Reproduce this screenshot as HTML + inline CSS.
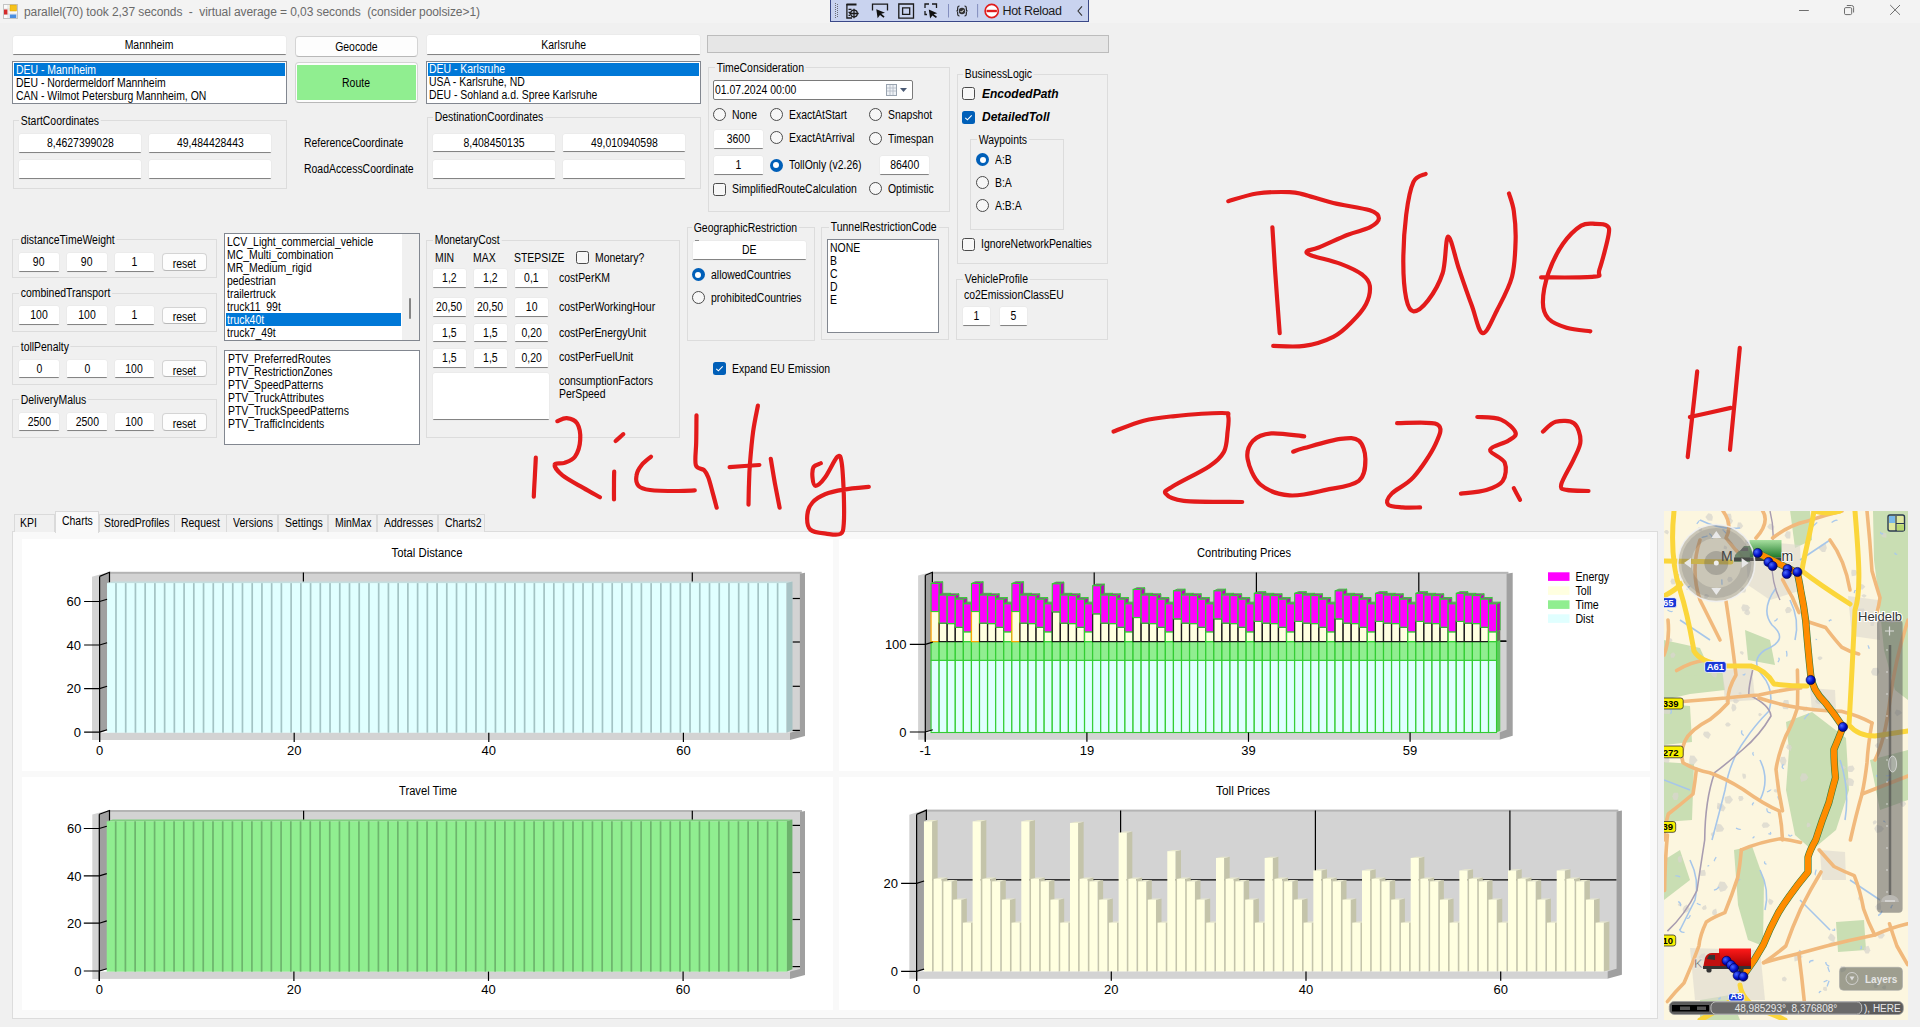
<!DOCTYPE html><html><head><meta charset="utf-8"><style>
*{box-sizing:border-box}
html,body{margin:0;padding:0}
body{width:1920px;height:1027px;overflow:hidden;position:relative;background:#f0f0f0;font-family:"Liberation Sans",sans-serif;font-size:11px;color:#000}
.t{position:absolute;white-space:pre;font-size:12px;line-height:13px;color:#000;transform:scaleX(0.87);transform-origin:0 50%}
.s{display:inline-block;transform:scaleX(0.87)}
.tb{position:absolute;background:#fff;border-bottom:1px solid #848484;border-radius:2px 2px 1px 1px;box-shadow:0 0 0 0.5px #e6e6e6;font-size:12px;white-space:pre;color:#000}
.btn{position:absolute;background:#fdfdfd;border:1px solid #d4d4d4;border-bottom-color:#b8b8b8;border-radius:4px;text-align:center;font-size:12px;color:#000;white-space:pre}
.grp{position:absolute;border:1px solid #dcdcdc}
.gt{background:#f0f0f0;padding:0 2px}
.rad{position:absolute;width:13px;height:13px;border-radius:50%;border:1px solid #4b4b4b;background:#f7f7f7}
.rad.on{border:none;background:#005fb8}
.rad.on:after{content:"";position:absolute;left:3.5px;top:3.5px;width:6px;height:6px;border-radius:50%;background:#fff}
.chk{position:absolute;width:13px;height:13px;border-radius:2.5px;border:1px solid #4b4b4b;background:#f7f7f7}
.chk.on{border:none;background:#005fb8}
.lb{position:absolute;background:#fff;border:1px solid #828790}
</style></head><body>
<div style="position:absolute;left:0px;top:0px;width:1920px;height:23px;background:#f3f3f3"></div>
<svg style="position:absolute;left:3px;top:4px" width="15" height="15" viewBox="0 0 15 15">
<rect x="0.5" y="0.5" width="14" height="14" fill="#fafafa" stroke="#c4c4c4"/>
<line x1="0.5" y1="5" x2="14.5" y2="5" stroke="#d0d0d0" stroke-width="0.6"/><line x1="0.5" y1="10" x2="14.5" y2="10" stroke="#d0d0d0" stroke-width="0.6"/>
<line x1="5" y1="0.5" x2="5" y2="14.5" stroke="#d0d0d0" stroke-width="0.6"/>
<rect x="7" y="1" width="6.5" height="6" fill="#f6c21a" stroke="#d8a000" stroke-width="0.5"/>
<rect x="1" y="5.5" width="3.4" height="5" fill="#d42a2a"/>
<rect x="6.8" y="10.5" width="6.5" height="3.5" fill="#4a8ee0"/>
</svg>
<div style="position:absolute;left:24px;top:5px;font-size:12px;line-height:15px;letter-spacing:-0.08px;color:#6a6a6a;white-space:pre">parallel(70) took 2,37 seconds  -  virtual average = 0,03 seconds  (consider poolsize&gt;1)</div>
<svg style="position:absolute;left:1790px;top:0" width="130" height="22" viewBox="0 0 130 22">
<line x1="9" y1="10.5" x2="18.8" y2="10.5" stroke="#6e6e6e" stroke-width="1"/>
<rect x="54.5" y="7.6" width="7.2" height="7" rx="1.3" fill="none" stroke="#6e6e6e"/>
<path d="M56.8 5.5 h4.8 a2 2 0 0 1 2 2 v5" fill="none" stroke="#6e6e6e"/>
<path d="M100.2 5 L110 14.8 M110 5 L100.2 14.8" stroke="#6e6e6e" stroke-width="1"/>
</svg>
<div style="position:absolute;left:830px;top:-1px;width:259px;height:22.5px;background:#c9d3ef;border:1.5px solid #3a4888"></div>
<svg style="position:absolute;left:825px;top:0" width="270" height="28" viewBox="0 0 270 28">
<g fill="#555"><rect x="10" y="3" width="0.9" height="0.9"/><rect x="12" y="4" width="0.9" height="0.9"/><rect x="10" y="5" width="0.9" height="0.9"/><rect x="12" y="6" width="0.9" height="0.9"/><rect x="10" y="7" width="0.9" height="0.9"/><rect x="12" y="8" width="0.9" height="0.9"/><rect x="10" y="9" width="0.9" height="0.9"/><rect x="12" y="10" width="0.9" height="0.9"/><rect x="10" y="11" width="0.9" height="0.9"/><rect x="12" y="12" width="0.9" height="0.9"/><rect x="10" y="13" width="0.9" height="0.9"/><rect x="12" y="14" width="0.9" height="0.9"/><rect x="10" y="15" width="0.9" height="0.9"/><rect x="12" y="16" width="0.9" height="0.9"/><rect x="10" y="17" width="0.9" height="0.9"/></g>
<g fill="none" stroke="#1a1a1a" stroke-width="1.3">
<rect x="21.5" y="3.5" width="10" height="2" fill="#1a1a1a" stroke="none"/>
<path d="M21.9 4 V18 H27"/><path d="M23.5 9.3 h3 M23.5 12.3 h2 M23.5 15.3 h1.5"/>
<circle cx="29" cy="13.5" r="3.3"/><path d="M29 8.8 v9.4 M24.3 13.5 h9.4"/>
<path d="M47.5 10.5 V4.2 H62.5 V10.5"/>
<path d="M73.8 4 H88.5 V18.1 H73.8 Z"/><path d="M77.6 7.8 H84.7 V14.3 H77.6 Z"/>
<path d="M100 8 V4 H104 M107 4 H111.5 V8 M100 11 V14.5 H102"/>
<path d="M134.5 6 q-1.8 0 -1.8 1.8 v1.5 q0 1.7 -1.2 1.7 q1.2 0 1.2 1.7 v1.5 q0 1.8 1.8 1.8 M139.5 6 q1.8 0 1.8 1.8 v1.5 q0 1.7 1.2 1.7 q-1.2 0 -1.2 1.7 v1.5 q0 1.8 -1.8 1.8" stroke-width="1.1"/>
</g>
<path d="M51.3 9.2 L52.6 18.3 L55 15 L58.5 17.8 L59.6 16.5 L56.3 13.8 L60 12.8 Z" fill="#111"/>
<path d="M103.8 9.6 L105.1 18.6 L107.4 15.4 L110.9 18.1 L112 16.8 L108.7 14.2 L112.3 13.2 Z" fill="#111"/>
<circle cx="137" cy="11" r="3.2" fill="#333"/><path d="M135.5 11 l1.2 1.2 2 -2.4" fill="none" stroke="#fff" stroke-width="0.9"/>
<line x1="123.5" y1="4" x2="123.5" y2="17.5" stroke="#7a86b8" stroke-width="0.9"/>
<line x1="152.6" y1="4" x2="152.6" y2="17.5" stroke="#7a86b8" stroke-width="0.9"/>
<circle cx="166.7" cy="11" r="6.6" fill="#fff" stroke="#e01c1c" stroke-width="1.6"/><rect x="161.5" y="9.8" width="10.4" height="2.4" fill="#e01c1c"/>
<path d="M257 6.3 l-4 4.7 4 4.7" fill="none" stroke="#333" stroke-width="1.1"/>
</svg>
<div style="position:absolute;left:1002.5px;top:4px;font-size:12.5px;line-height:15px;letter-spacing:-0.35px;color:#1a1a1a;white-space:pre">Hot Reload</div>
<div class="tb" style="left:13px;top:36px;width:273px;height:19px;line-height:19px;text-align:center"><span class="s">Mannheim</span></div>
<div class="lb" style="left:12px;top:61px;width:275px;height:43px"></div>
<div style="position:absolute;left:14px;top:63.0px;width:271px;height:13px;background:#0078d7"></div>
<div class="t" style="left:16px;top:63.7px;color:#fff">DEU - Mannheim</div>
<div class="t" style="left:16px;top:76.7px;">DEU - Nordermeldorf Mannheim</div>
<div class="t" style="left:16px;top:89.7px;">CAN - Wilmot Petersburg Mannheim, ON</div>
<div class="btn" style="left:295px;top:36px;width:123px;height:21px;line-height:21px;"><span class="s">Geocode</span></div>
<div class="btn" style="left:295px;top:62px;width:123px;height:41px"></div>
<div style="position:absolute;left:297px;top:64.5px;width:119px;height:35.5px;background:#90ee90"></div>
<div class="t" style="left:295px;top:76.5px;width:123px;text-align:center;transform:none;"><span class="s">Route</span></div>
<div class="tb" style="left:427px;top:35px;width:273px;height:20px;line-height:20px;text-align:center"><span class="s">Karlsruhe</span></div>
<div class="lb" style="left:426px;top:61px;width:275px;height:43px"></div>
<div style="position:absolute;left:428px;top:62.5px;width:271px;height:13px;background:#0078d7"></div>
<div class="t" style="left:429px;top:63.2px;color:#fff">DEU - Karlsruhe</div>
<div class="t" style="left:429px;top:76.2px;">USA - Karlsruhe, ND</div>
<div class="t" style="left:429px;top:89.2px;">DEU - Sohland a.d. Spree Karlsruhe</div>
<div style="position:absolute;left:707px;top:35px;width:402px;height:17.5px;background:#e6e6e6;border:1px solid #bcbcbc"></div>
<div class="grp" style="left:12.5px;top:120.3px;width:274.2px;height:69.10000000000001px"></div>
<div class="t gt" style="left:19px;top:114.89999999999999px">StartCoordinates</div>
<div class="tb" style="left:19px;top:134px;width:122px;height:18.5px;line-height:18.5px;text-align:center"><span class="s">8,4627399028</span></div>
<div class="tb" style="left:149px;top:134px;width:122px;height:18.5px;line-height:18.5px;text-align:center"><span class="s">49,484428443</span></div>
<div class="tb" style="left:19px;top:160px;width:122px;height:18.5px;line-height:18.5px;text-align:center"><span class="s"></span></div>
<div class="tb" style="left:149px;top:160px;width:122px;height:18.5px;line-height:18.5px;text-align:center"><span class="s"></span></div>
<div class="t" style="left:304px;top:137.3px;">ReferenceCoordinate</div>
<div class="t" style="left:304px;top:163.3px;">RoadAccessCoordinate</div>
<div class="grp" style="left:426.6px;top:116.7px;width:274.1px;height:72.10000000000001px"></div>
<div class="t gt" style="left:433px;top:111.3px">DestinationCoordinates</div>
<div class="tb" style="left:433px;top:134px;width:122px;height:18px;line-height:18px;text-align:center"><span class="s">8,408450135</span></div>
<div class="tb" style="left:563px;top:134px;width:122px;height:18px;line-height:18px;text-align:center"><span class="s">49,010940598</span></div>
<div class="tb" style="left:433px;top:160px;width:122px;height:19px;line-height:19px;text-align:center"><span class="s"></span></div>
<div class="tb" style="left:563px;top:160px;width:122px;height:19px;line-height:19px;text-align:center"><span class="s"></span></div>
<div class="grp" style="left:707.5px;top:67.4px;width:242.0px;height:144.6px"></div>
<div class="t gt" style="left:714.7px;top:62.00000000000001px">TimeConsideration</div>
<div style="position:absolute;left:713px;top:80px;width:200px;height:20px;background:#fff;border:1px solid #7a7a7a;border-radius:2px"></div>
<div class="t" style="left:715px;top:84.3px;">01.07.2024 00:00</div>
<svg style="position:absolute;left:884px;top:82px" width="26" height="16" viewBox="0 0 26 16">
<rect x="2.5" y="2.5" width="10" height="11" fill="#eef2f6" stroke="#9aa4b0"/>
<g stroke="#b0b8c4" stroke-width="0.8"><line x1="3" y1="6" x2="12" y2="6"/><line x1="3" y1="9" x2="12" y2="9"/><line x1="6" y1="3" x2="6" y2="13"/><line x1="9" y1="3" x2="9" y2="13"/></g>
<path d="M16 6 h7 l-3.5 4 z" fill="#4a5a74"/></svg>
<div class="rad" style="left:713.0px;top:108.2px"></div>
<div class="t" style="left:732px;top:109.0px;">None</div>
<div class="rad" style="left:769.8px;top:108.2px"></div>
<div class="t" style="left:789px;top:109.0px;">ExactAtStart</div>
<div class="rad" style="left:868.9px;top:108.2px"></div>
<div class="t" style="left:888px;top:109.0px;">Snapshot</div>
<div class="tb" style="left:714px;top:130px;width:49px;height:19px;line-height:19px;text-align:center"><span class="s">3600</span></div>
<div class="rad" style="left:769.8px;top:131.4px"></div>
<div class="t" style="left:789px;top:132.2px;">ExactAtArrival</div>
<div class="rad" style="left:868.9px;top:132.1px"></div>
<div class="t" style="left:888px;top:132.9px;">Timespan</div>
<div class="tb" style="left:714px;top:156px;width:49px;height:19px;line-height:19px;text-align:center"><span class="s">1</span></div>
<div class="rad on" style="left:769.8px;top:158.5px"></div>
<div class="t" style="left:789px;top:159.3px;">TollOnly (v2.26)</div>
<div class="tb" style="left:880px;top:156px;width:49px;height:19px;line-height:19px;text-align:center"><span class="s">86400</span></div>
<div class="chk" style="left:713px;top:183px"></div>
<div class="t" style="left:732px;top:183.3px;">SimplifiedRouteCalculation</div>
<div class="rad" style="left:868.9px;top:182.3px"></div>
<div class="t" style="left:888px;top:183.1px;">Optimistic</div>
<div class="grp" style="left:956.6px;top:73.5px;width:151.89999999999998px;height:190.5px"></div>
<div class="t gt" style="left:963px;top:68.1px">BusinessLogic</div>
<div class="chk" style="left:962px;top:87px"></div>
<div class="t" style="left:982px;top:87.7px;font-weight:bold;font-style:italic;transform:none">EncodedPath</div>
<div class="chk on" style="left:962px;top:110.5px"><svg width="13" height="13" viewBox="0 0 13 13" style="position:absolute;left:0;top:0"><path d="M3.3 6.8 L5.4 8.8 L9.7 4.3" fill="none" stroke="#fff" stroke-width="1.1"/></svg></div>
<div class="t" style="left:982px;top:110.8px;font-weight:bold;font-style:italic;transform:none">DetailedToll</div>
<div class="grp" style="left:970px;top:139px;width:94px;height:91px"></div>
<div class="t gt" style="left:977px;top:133.6px">Waypoints</div>
<div class="rad on" style="left:976.0px;top:153.1px"></div>
<div class="t" style="left:995px;top:153.9px;">A:B</div>
<div class="rad" style="left:976.0px;top:176.1px"></div>
<div class="t" style="left:995px;top:176.9px;">B:A</div>
<div class="rad" style="left:976.0px;top:198.9px"></div>
<div class="t" style="left:995px;top:199.7px;">A:B:A</div>
<div class="chk" style="left:962px;top:237.5px"></div>
<div class="t" style="left:981px;top:237.9px;">IgnoreNetworkPenalties</div>
<div class="grp" style="left:956px;top:278.5px;width:152px;height:61.5px"></div>
<div class="t gt" style="left:963px;top:273.1px">VehicleProfile</div>
<div class="t" style="left:964px;top:288.9px;">co2EmissionClassEU</div>
<div class="tb" style="left:963px;top:306.6px;width:27px;height:19.0px;line-height:19.0px;text-align:center"><span class="s">1</span></div>
<div class="tb" style="left:1000px;top:306.6px;width:27px;height:19.0px;line-height:19.0px;text-align:center"><span class="s">5</span></div>
<div class="grp" style="left:12.3px;top:239.4px;width:205.1px;height:38.900000000000006px"></div>
<div class="t gt" style="left:19px;top:234.0px">distanceTimeWeight</div>
<div class="tb" style="left:19px;top:253.0px;width:40px;height:18.5px;line-height:18.5px;text-align:center"><span class="s">90</span></div>
<div class="tb" style="left:67px;top:253.0px;width:40px;height:18.5px;line-height:18.5px;text-align:center"><span class="s">90</span></div>
<div class="tb" style="left:115px;top:253.0px;width:39px;height:18.5px;line-height:18.5px;text-align:center"><span class="s">1</span></div>
<div class="btn" style="left:162px;top:253.4px;width:45px;height:17.400000000000006px;line-height:17.400000000000006px;padding-top:1.5px"><span class="s">reset</span></div>
<div class="grp" style="left:12.3px;top:292.7px;width:205.1px;height:38.900000000000034px"></div>
<div class="t gt" style="left:19px;top:287.3px">combinedTransport</div>
<div class="tb" style="left:19px;top:306.3px;width:40px;height:18.5px;line-height:18.5px;text-align:center"><span class="s">100</span></div>
<div class="tb" style="left:67px;top:306.3px;width:40px;height:18.5px;line-height:18.5px;text-align:center"><span class="s">100</span></div>
<div class="tb" style="left:115px;top:306.3px;width:39px;height:18.5px;line-height:18.5px;text-align:center"><span class="s">1</span></div>
<div class="btn" style="left:162px;top:306.7px;width:45px;height:17.400000000000034px;line-height:17.400000000000034px;padding-top:1.5px"><span class="s">reset</span></div>
<div class="grp" style="left:12.3px;top:346.0px;width:205.1px;height:38.89999999999998px"></div>
<div class="t gt" style="left:19px;top:340.6px">tollPenalty</div>
<div class="tb" style="left:19px;top:359.6px;width:40px;height:18.5px;line-height:18.5px;text-align:center"><span class="s">0</span></div>
<div class="tb" style="left:67px;top:359.6px;width:40px;height:18.5px;line-height:18.5px;text-align:center"><span class="s">0</span></div>
<div class="tb" style="left:115px;top:359.6px;width:39px;height:18.5px;line-height:18.5px;text-align:center"><span class="s">100</span></div>
<div class="btn" style="left:162px;top:360.0px;width:45px;height:17.399999999999977px;line-height:17.399999999999977px;padding-top:1.5px"><span class="s">reset</span></div>
<div class="grp" style="left:12.3px;top:399.29999999999995px;width:205.1px;height:38.900000000000034px"></div>
<div class="t gt" style="left:19px;top:393.9px">DeliveryMalus</div>
<div class="tb" style="left:19px;top:412.9px;width:40px;height:18.5px;line-height:18.5px;text-align:center"><span class="s">2500</span></div>
<div class="tb" style="left:67px;top:412.9px;width:40px;height:18.5px;line-height:18.5px;text-align:center"><span class="s">2500</span></div>
<div class="tb" style="left:115px;top:412.9px;width:39px;height:18.5px;line-height:18.5px;text-align:center"><span class="s">100</span></div>
<div class="btn" style="left:162px;top:413.29999999999995px;width:45px;height:17.400000000000034px;line-height:17.400000000000034px;padding-top:1.5px"><span class="s">reset</span></div>
<div class="lb" style="left:224px;top:233px;width:196px;height:108px"></div>
<div class="t" style="left:227px;top:236.0px;">LCV_Light_commercial_vehicle</div>
<div class="t" style="left:227px;top:249.0px;">MC_Multi_combination</div>
<div class="t" style="left:227px;top:262.0px;">MR_Medium_rigid</div>
<div class="t" style="left:227px;top:275.0px;">pedestrian</div>
<div class="t" style="left:227px;top:288.0px;">trailertruck</div>
<div class="t" style="left:227px;top:301.0px;">truck11_99t</div>
<div style="position:absolute;left:226px;top:313.3px;width:175px;height:13px;background:#0078d7"></div>
<div class="t" style="left:227px;top:314.0px;color:#fff">truck40t</div>
<div class="t" style="left:227px;top:327.0px;">truck7_49t</div>
<div style="position:absolute;left:402px;top:234px;width:17px;height:106px;background:#f0f0f0"></div>
<div style="position:absolute;left:408.5px;top:298px;width:2.5px;height:21px;background:#858585;border-radius:1px"></div>
<div class="lb" style="left:224px;top:350px;width:196px;height:95px"></div>
<div class="t" style="left:228px;top:352.7px;">PTV_PreferredRoutes</div>
<div class="t" style="left:228px;top:365.7px;">PTV_RestrictionZones</div>
<div class="t" style="left:228px;top:378.7px;">PTV_SpeedPatterns</div>
<div class="t" style="left:228px;top:391.7px;">PTV_TruckAttributes</div>
<div class="t" style="left:228px;top:404.7px;">PTV_TruckSpeedPatterns</div>
<div class="t" style="left:228px;top:417.7px;">PTV_TrafficIncidents</div>
<div class="grp" style="left:426.4px;top:239.6px;width:253.30000000000007px;height:198.00000000000003px"></div>
<div class="t gt" style="left:433px;top:234.2px">MonetaryCost</div>
<div class="t" style="left:435px;top:252.1px;">MIN</div>
<div class="t" style="left:473px;top:252.1px;">MAX</div>
<div class="t" style="left:514px;top:252.1px;">STEPSIZE</div>
<div class="chk" style="left:576px;top:251.4px"></div>
<div class="t" style="left:595px;top:252.1px;">Monetary?</div>
<div class="tb" style="left:433px;top:269px;width:33px;height:18.600000000000023px;line-height:18.600000000000023px;text-align:center"><span class="s">1,2</span></div>
<div class="tb" style="left:474px;top:269px;width:33px;height:18.600000000000023px;line-height:18.600000000000023px;text-align:center"><span class="s">1,2</span></div>
<div class="tb" style="left:515px;top:269px;width:33px;height:18.600000000000023px;line-height:18.600000000000023px;text-align:center"><span class="s">0,1</span></div>
<div class="t" style="left:558.5px;top:272.3px;">costPerKM</div>
<div class="tb" style="left:433px;top:298px;width:33px;height:18.69999999999999px;line-height:18.69999999999999px;text-align:center"><span class="s">20,50</span></div>
<div class="tb" style="left:474px;top:298px;width:33px;height:18.69999999999999px;line-height:18.69999999999999px;text-align:center"><span class="s">20,50</span></div>
<div class="tb" style="left:515px;top:298px;width:33px;height:18.69999999999999px;line-height:18.69999999999999px;text-align:center"><span class="s">10</span></div>
<div class="t" style="left:558.5px;top:301.3px;">costPerWorkingHour</div>
<div class="tb" style="left:433px;top:324px;width:33px;height:18.399999999999977px;line-height:18.399999999999977px;text-align:center"><span class="s">1,5</span></div>
<div class="tb" style="left:474px;top:324px;width:33px;height:18.399999999999977px;line-height:18.399999999999977px;text-align:center"><span class="s">1,5</span></div>
<div class="tb" style="left:515px;top:324px;width:33px;height:18.399999999999977px;line-height:18.399999999999977px;text-align:center"><span class="s">0,20</span></div>
<div class="t" style="left:558.5px;top:327.3px;">costPerEnergyUnit</div>
<div class="tb" style="left:433px;top:349px;width:33px;height:18.5px;line-height:18.5px;text-align:center"><span class="s">1,5</span></div>
<div class="tb" style="left:474px;top:349px;width:33px;height:18.5px;line-height:18.5px;text-align:center"><span class="s">1,5</span></div>
<div class="tb" style="left:515px;top:349px;width:33px;height:18.5px;line-height:18.5px;text-align:center"><span class="s">0,20</span></div>
<div class="t" style="left:558.5px;top:351.3px;">costPerFuelUnit</div>
<div class="t" style="left:558.5px;top:375.3px;">consumptionFactors</div>
<div class="t" style="left:558.5px;top:388.3px;">PerSpeed</div>
<div class="tb" style="left:433px;top:373px;width:116px;height:47px;line-height:47px;text-align:center"><span class="s"></span></div>
<div class="grp" style="left:686.5px;top:227.2px;width:128.10000000000002px;height:113.80000000000001px"></div>
<div class="t gt" style="left:692.4px;top:221.79999999999998px">GeographicRestriction</div>
<div style="position:absolute;left:695.4px;top:239.6px;width:4px;height:1.3px;background:#333"></div>
<div class="tb" style="left:693px;top:240.7px;width:113px;height:18.900000000000034px;line-height:18.900000000000034px;text-align:center"><span class="s">DE</span></div>
<div class="rad on" style="left:691.9px;top:268.0px"></div>
<div class="t" style="left:710.7px;top:268.8px;">allowedCountries</div>
<div class="rad" style="left:691.9px;top:291.1px"></div>
<div class="t" style="left:710.7px;top:291.9px;">prohibitedCountries</div>
<div class="grp" style="left:821.4px;top:226.6px;width:127.89999999999998px;height:113.6px"></div>
<div class="t gt" style="left:828.7px;top:221.2px">TunnelRestrictionCode</div>
<div class="lb" style="left:827.4px;top:239.4px;width:111.20000000000005px;height:94.1px"></div>
<div class="t" style="left:830px;top:241.89999999999998px;">NONE</div>
<div class="t" style="left:830px;top:254.89999999999998px;">B</div>
<div class="t" style="left:830px;top:267.9px;">C</div>
<div class="t" style="left:830px;top:280.9px;">D</div>
<div class="t" style="left:830px;top:293.9px;">E</div>
<div class="chk on" style="left:713px;top:362px"><svg width="13" height="13" viewBox="0 0 13 13" style="position:absolute;left:0;top:0"><path d="M3.3 6.8 L5.4 8.8 L9.7 4.3" fill="none" stroke="#fff" stroke-width="1.1"/></svg></div>
<div class="t" style="left:732px;top:362.8px;">Expand EU Emission</div>
<div style="position:absolute;left:12px;top:531px;width:1646px;height:488px;background:#f9f9f9;border:1px solid #dcdcdc"></div>
<div style="position:absolute;left:14.1px;top:513.5px;width:40.6px;height:18px;background:#f0f0f0;border:1px solid #dadada;border-bottom:none"></div>
<div class="t" style="left:20.3px;top:516.5px;">KPI</div>
<div style="position:absolute;left:99.0px;top:513.5px;width:75.5px;height:18px;background:#f0f0f0;border:1px solid #dadada;border-bottom:none"></div>
<div class="t" style="left:104px;top:516.5px;">StoredProfiles</div>
<div style="position:absolute;left:174.0px;top:513.5px;width:52.5px;height:18px;background:#f0f0f0;border:1px solid #dadada;border-bottom:none"></div>
<div class="t" style="left:181px;top:516.5px;">Request</div>
<div style="position:absolute;left:226.1px;top:513.5px;width:52.400000000000006px;height:18px;background:#f0f0f0;border:1px solid #dadada;border-bottom:none"></div>
<div class="t" style="left:232.5px;top:516.5px;">Versions</div>
<div style="position:absolute;left:278.1px;top:513.5px;width:50.39999999999998px;height:18px;background:#f0f0f0;border:1px solid #dadada;border-bottom:none"></div>
<div class="t" style="left:284.5px;top:516.5px;">Settings</div>
<div style="position:absolute;left:328.1px;top:513.5px;width:49.39999999999998px;height:18px;background:#f0f0f0;border:1px solid #dadada;border-bottom:none"></div>
<div class="t" style="left:335px;top:516.5px;">MinMax</div>
<div style="position:absolute;left:377.1px;top:513.5px;width:61.39999999999998px;height:18px;background:#f0f0f0;border:1px solid #dadada;border-bottom:none"></div>
<div class="t" style="left:384px;top:516.5px;">Addresses</div>
<div style="position:absolute;left:438.0px;top:513.5px;width:46.89999999999998px;height:18px;background:#f0f0f0;border:1px solid #dadada;border-bottom:none"></div>
<div class="t" style="left:444.5px;top:516.5px;">Charts2</div>
<div style="position:absolute;left:54.7px;top:511px;width:44.3px;height:21.5px;background:#f9f9f9;border:1px solid #dadada;border-bottom:none"></div>
<div class="t" style="left:61.7px;top:514.5px;">Charts</div>
<div style="position:absolute;left:22px;top:538.5px;width:810.5px;height:232.5px;background:#fff"></div>
<div style="position:absolute;left:839px;top:538.5px;width:811px;height:232.5px;background:#fff"></div>
<div style="position:absolute;left:22px;top:777px;width:810.5px;height:233px;background:#fff"></div>
<div style="position:absolute;left:839px;top:777px;width:811px;height:233px;background:#fff"></div>
<svg style="position:absolute;left:0;top:0" width="1920" height="1027" viewBox="0 0 1920 1027"><style>.cl{font-family:"Liberation Sans",sans-serif;font-size:13px;fill:#000}.ct{font-family:"Liberation Sans",sans-serif;font-size:12px;fill:#000}</style>
<rect x="109.5" y="572.3" width="690.2" height="160.4000000000001" fill="#d3d3d3"/>
<rect x="107.5" y="571.8" width="694.2" height="2" fill="#b4b4b4"/>
<polygon points="799.7,573.8 805,572.8 805,736 790,740 790,732.7 799.7,730.0" fill="#a0a0a0"/>
<polygon points="92,576.6999999999999 107.5,572.3 109.5,572.3 99.6,576.4 99.6,740 92,740" fill="#d3d3d3"/>
<polygon points="99.6,576.4 109.5,572.3 109.5,729.7 99.6,732.7" fill="#a0a0a0"/>
<rect x="99.6" y="732.7" width="690.4" height="7.2999999999999545" fill="#d3d3d3"/>
<line x1="303.4" y1="572.5" x2="303.4" y2="583" stroke="#000" stroke-width="1.2"/>
<line x1="692.3" y1="572.5" x2="692.3" y2="583" stroke="#000" stroke-width="1.2"/>
<line x1="792.5" y1="598.5" x2="799.9" y2="598.5" stroke="#000" stroke-width="1.2"/>
<line x1="792.5" y1="642" x2="799.9" y2="642" stroke="#000" stroke-width="1.2"/>
<line x1="792.5" y1="686.3" x2="799.9" y2="686.3" stroke="#000" stroke-width="1.2"/>
<line x1="792.5" y1="730.4" x2="799.9" y2="730.4" stroke="#000" stroke-width="1.2"/>
<polygon points="107.03,583.1 113.03,581.6 792.5,581.6 786.5,583.1" fill="#c4dedf"/>
<rect x="107.03" y="583.1" width="679.47" height="149.60000000000002" fill="#e0ffff"/>
<polygon points="786.5,583.1 792.5,581.6 792.5,730.3 786.5,732.7" fill="#a7c2c4"/>
<rect x="115.13" y="583.1" width="1.7" height="149.60000000000002" fill="#a3c3c4"/>
<rect x="124.86" y="583.1" width="1.7" height="149.60000000000002" fill="#a3c3c4"/>
<rect x="134.59" y="583.1" width="1.7" height="149.60000000000002" fill="#a3c3c4"/>
<rect x="144.32" y="583.1" width="1.7" height="149.60000000000002" fill="#a3c3c4"/>
<rect x="154.05" y="583.1" width="1.7" height="149.60000000000002" fill="#a3c3c4"/>
<rect x="163.78" y="583.1" width="1.7" height="149.60000000000002" fill="#a3c3c4"/>
<rect x="173.51" y="583.1" width="1.7" height="149.60000000000002" fill="#a3c3c4"/>
<rect x="183.24" y="583.1" width="1.7" height="149.60000000000002" fill="#a3c3c4"/>
<rect x="192.97" y="583.1" width="1.7" height="149.60000000000002" fill="#a3c3c4"/>
<rect x="202.70" y="583.1" width="1.7" height="149.60000000000002" fill="#a3c3c4"/>
<rect x="212.43" y="583.1" width="1.7" height="149.60000000000002" fill="#a3c3c4"/>
<rect x="222.16" y="583.1" width="1.7" height="149.60000000000002" fill="#a3c3c4"/>
<rect x="231.89" y="583.1" width="1.7" height="149.60000000000002" fill="#a3c3c4"/>
<rect x="241.62" y="583.1" width="1.7" height="149.60000000000002" fill="#a3c3c4"/>
<rect x="251.35" y="583.1" width="1.7" height="149.60000000000002" fill="#a3c3c4"/>
<rect x="261.08" y="583.1" width="1.7" height="149.60000000000002" fill="#a3c3c4"/>
<rect x="270.81" y="583.1" width="1.7" height="149.60000000000002" fill="#a3c3c4"/>
<rect x="280.54" y="583.1" width="1.7" height="149.60000000000002" fill="#a3c3c4"/>
<rect x="290.27" y="583.1" width="1.7" height="149.60000000000002" fill="#a3c3c4"/>
<rect x="300.00" y="583.1" width="1.7" height="149.60000000000002" fill="#a3c3c4"/>
<rect x="309.73" y="583.1" width="1.7" height="149.60000000000002" fill="#a3c3c4"/>
<rect x="319.46" y="583.1" width="1.7" height="149.60000000000002" fill="#a3c3c4"/>
<rect x="329.19" y="583.1" width="1.7" height="149.60000000000002" fill="#a3c3c4"/>
<rect x="338.92" y="583.1" width="1.7" height="149.60000000000002" fill="#a3c3c4"/>
<rect x="348.65" y="583.1" width="1.7" height="149.60000000000002" fill="#a3c3c4"/>
<rect x="358.38" y="583.1" width="1.7" height="149.60000000000002" fill="#a3c3c4"/>
<rect x="368.11" y="583.1" width="1.7" height="149.60000000000002" fill="#a3c3c4"/>
<rect x="377.84" y="583.1" width="1.7" height="149.60000000000002" fill="#a3c3c4"/>
<rect x="387.57" y="583.1" width="1.7" height="149.60000000000002" fill="#a3c3c4"/>
<rect x="397.30" y="583.1" width="1.7" height="149.60000000000002" fill="#a3c3c4"/>
<rect x="407.03" y="583.1" width="1.7" height="149.60000000000002" fill="#a3c3c4"/>
<rect x="416.76" y="583.1" width="1.7" height="149.60000000000002" fill="#a3c3c4"/>
<rect x="426.49" y="583.1" width="1.7" height="149.60000000000002" fill="#a3c3c4"/>
<rect x="436.22" y="583.1" width="1.7" height="149.60000000000002" fill="#a3c3c4"/>
<rect x="445.95" y="583.1" width="1.7" height="149.60000000000002" fill="#a3c3c4"/>
<rect x="455.68" y="583.1" width="1.7" height="149.60000000000002" fill="#a3c3c4"/>
<rect x="465.41" y="583.1" width="1.7" height="149.60000000000002" fill="#a3c3c4"/>
<rect x="475.14" y="583.1" width="1.7" height="149.60000000000002" fill="#a3c3c4"/>
<rect x="484.87" y="583.1" width="1.7" height="149.60000000000002" fill="#a3c3c4"/>
<rect x="494.60" y="583.1" width="1.7" height="149.60000000000002" fill="#a3c3c4"/>
<rect x="504.33" y="583.1" width="1.7" height="149.60000000000002" fill="#a3c3c4"/>
<rect x="514.06" y="583.1" width="1.7" height="149.60000000000002" fill="#a3c3c4"/>
<rect x="523.79" y="583.1" width="1.7" height="149.60000000000002" fill="#a3c3c4"/>
<rect x="533.52" y="583.1" width="1.7" height="149.60000000000002" fill="#a3c3c4"/>
<rect x="543.25" y="583.1" width="1.7" height="149.60000000000002" fill="#a3c3c4"/>
<rect x="552.98" y="583.1" width="1.7" height="149.60000000000002" fill="#a3c3c4"/>
<rect x="562.71" y="583.1" width="1.7" height="149.60000000000002" fill="#a3c3c4"/>
<rect x="572.44" y="583.1" width="1.7" height="149.60000000000002" fill="#a3c3c4"/>
<rect x="582.17" y="583.1" width="1.7" height="149.60000000000002" fill="#a3c3c4"/>
<rect x="591.90" y="583.1" width="1.7" height="149.60000000000002" fill="#a3c3c4"/>
<rect x="601.63" y="583.1" width="1.7" height="149.60000000000002" fill="#a3c3c4"/>
<rect x="611.36" y="583.1" width="1.7" height="149.60000000000002" fill="#a3c3c4"/>
<rect x="621.09" y="583.1" width="1.7" height="149.60000000000002" fill="#a3c3c4"/>
<rect x="630.82" y="583.1" width="1.7" height="149.60000000000002" fill="#a3c3c4"/>
<rect x="640.55" y="583.1" width="1.7" height="149.60000000000002" fill="#a3c3c4"/>
<rect x="650.28" y="583.1" width="1.7" height="149.60000000000002" fill="#a3c3c4"/>
<rect x="660.01" y="583.1" width="1.7" height="149.60000000000002" fill="#a3c3c4"/>
<rect x="669.74" y="583.1" width="1.7" height="149.60000000000002" fill="#a3c3c4"/>
<rect x="679.47" y="583.1" width="1.7" height="149.60000000000002" fill="#a3c3c4"/>
<rect x="689.20" y="583.1" width="1.7" height="149.60000000000002" fill="#a3c3c4"/>
<rect x="698.93" y="583.1" width="1.7" height="149.60000000000002" fill="#a3c3c4"/>
<rect x="708.66" y="583.1" width="1.7" height="149.60000000000002" fill="#a3c3c4"/>
<rect x="718.39" y="583.1" width="1.7" height="149.60000000000002" fill="#a3c3c4"/>
<rect x="728.12" y="583.1" width="1.7" height="149.60000000000002" fill="#a3c3c4"/>
<rect x="737.85" y="583.1" width="1.7" height="149.60000000000002" fill="#a3c3c4"/>
<rect x="747.58" y="583.1" width="1.7" height="149.60000000000002" fill="#a3c3c4"/>
<rect x="757.31" y="583.1" width="1.7" height="149.60000000000002" fill="#a3c3c4"/>
<rect x="767.04" y="583.1" width="1.7" height="149.60000000000002" fill="#a3c3c4"/>
<rect x="776.77" y="583.1" width="1.7" height="149.60000000000002" fill="#a3c3c4"/>
<path d="M99.6 576.4 V742 M99.6 576.4 L109.5 572.3 V582.3" fill="none" stroke="#000" stroke-width="1.2"/>
<path d="M84.1 732.1 H99.6 L107.1 729.8000000000001" fill="none" stroke="#000" stroke-width="1.2"/>
<text x="81" y="736.7" text-anchor="end" class="cl">0</text>
<path d="M84.1 688.6 H99.6 L107.1 686.3000000000001" fill="none" stroke="#000" stroke-width="1.2"/>
<text x="81" y="693.2" text-anchor="end" class="cl">20</text>
<path d="M84.1 645.0 H99.6 L107.1 642.7" fill="none" stroke="#000" stroke-width="1.2"/>
<text x="81" y="649.6" text-anchor="end" class="cl">40</text>
<path d="M84.1 601.5 H99.6 L107.1 599.2" fill="none" stroke="#000" stroke-width="1.2"/>
<text x="81" y="606.1" text-anchor="end" class="cl">60</text>
<line x1="99.6" y1="732.7" x2="99.6" y2="742" stroke="#000" stroke-width="1.2"/>
<text x="99.6" y="754.9" text-anchor="middle" class="cl">0</text>
<line x1="294.20000000000005" y1="732.7" x2="294.20000000000005" y2="742" stroke="#000" stroke-width="1.2"/>
<text x="294.20000000000005" y="754.9" text-anchor="middle" class="cl">20</text>
<line x1="488.80000000000007" y1="732.7" x2="488.80000000000007" y2="742" stroke="#000" stroke-width="1.2"/>
<text x="488.80000000000007" y="754.9" text-anchor="middle" class="cl">40</text>
<line x1="683.4000000000001" y1="732.7" x2="683.4000000000001" y2="742" stroke="#000" stroke-width="1.2"/>
<text x="683.4000000000001" y="754.9" text-anchor="middle" class="cl">60</text>
<text x="427" y="557" text-anchor="middle" class="ct" textLength="71" lengthAdjust="spacingAndGlyphs">Total Distance</text>
<rect x="109.5" y="810.5" width="690.5" height="161.10000000000002" fill="#d3d3d3"/>
<rect x="107.5" y="810.0" width="694.5" height="2" fill="#b4b4b4"/>
<polygon points="800,812.0 805,811.0 805,974.9 790,978.9 790,971.6 800,968.9" fill="#a0a0a0"/>
<polygon points="92.3,814.5999999999999 107.5,810.5 109.5,810.5 99.3,814.3 99.3,978.9 92.3,978.9" fill="#d3d3d3"/>
<polygon points="99.3,814.3 109.5,810.5 109.5,968.6 99.3,971.6" fill="#a0a0a0"/>
<rect x="99.3" y="971.6" width="690.7" height="7.2999999999999545" fill="#d3d3d3"/>
<line x1="303.6" y1="810.7" x2="303.6" y2="821" stroke="#000" stroke-width="1.2"/>
<line x1="692.3" y1="810.7" x2="692.3" y2="821" stroke="#000" stroke-width="1.2"/>
<line x1="792.4" y1="825.4" x2="800" y2="825.4" stroke="#000" stroke-width="1.2"/>
<line x1="792.4" y1="872.5" x2="800" y2="872.5" stroke="#000" stroke-width="1.2"/>
<line x1="792.4" y1="919.5" x2="800" y2="919.5" stroke="#000" stroke-width="1.2"/>
<line x1="792.4" y1="966.6" x2="800" y2="966.6" stroke="#000" stroke-width="1.2"/>
<polygon points="106.73,821.3 112.73,819.5999999999999 792.4,819.5999999999999 786.9,821.3" fill="#7fcf7f"/>
<rect x="106.73" y="821.3" width="680.17" height="150.30000000000007" fill="#90ee90"/>
<polygon points="786.9,821.3 792.4,819.5999999999999 792.4,969.2 786.9,971.6" fill="#6cb26c"/>
<rect x="114.83" y="821.3" width="1.7" height="150.30000000000007" fill="#6db56d"/>
<rect x="124.56" y="821.3" width="1.7" height="150.30000000000007" fill="#6db56d"/>
<rect x="134.29" y="821.3" width="1.7" height="150.30000000000007" fill="#6db56d"/>
<rect x="144.02" y="821.3" width="1.7" height="150.30000000000007" fill="#6db56d"/>
<rect x="153.75" y="821.3" width="1.7" height="150.30000000000007" fill="#6db56d"/>
<rect x="163.48" y="821.3" width="1.7" height="150.30000000000007" fill="#6db56d"/>
<rect x="173.21" y="821.3" width="1.7" height="150.30000000000007" fill="#6db56d"/>
<rect x="182.94" y="821.3" width="1.7" height="150.30000000000007" fill="#6db56d"/>
<rect x="192.67" y="821.3" width="1.7" height="150.30000000000007" fill="#6db56d"/>
<rect x="202.40" y="821.3" width="1.7" height="150.30000000000007" fill="#6db56d"/>
<rect x="212.13" y="821.3" width="1.7" height="150.30000000000007" fill="#6db56d"/>
<rect x="221.86" y="821.3" width="1.7" height="150.30000000000007" fill="#6db56d"/>
<rect x="231.59" y="821.3" width="1.7" height="150.30000000000007" fill="#6db56d"/>
<rect x="241.32" y="821.3" width="1.7" height="150.30000000000007" fill="#6db56d"/>
<rect x="251.05" y="821.3" width="1.7" height="150.30000000000007" fill="#6db56d"/>
<rect x="260.78" y="821.3" width="1.7" height="150.30000000000007" fill="#6db56d"/>
<rect x="270.51" y="821.3" width="1.7" height="150.30000000000007" fill="#6db56d"/>
<rect x="280.24" y="821.3" width="1.7" height="150.30000000000007" fill="#6db56d"/>
<rect x="289.97" y="821.3" width="1.7" height="150.30000000000007" fill="#6db56d"/>
<rect x="299.70" y="821.3" width="1.7" height="150.30000000000007" fill="#6db56d"/>
<rect x="309.43" y="821.3" width="1.7" height="150.30000000000007" fill="#6db56d"/>
<rect x="319.16" y="821.3" width="1.7" height="150.30000000000007" fill="#6db56d"/>
<rect x="328.89" y="821.3" width="1.7" height="150.30000000000007" fill="#6db56d"/>
<rect x="338.62" y="821.3" width="1.7" height="150.30000000000007" fill="#6db56d"/>
<rect x="348.35" y="821.3" width="1.7" height="150.30000000000007" fill="#6db56d"/>
<rect x="358.08" y="821.3" width="1.7" height="150.30000000000007" fill="#6db56d"/>
<rect x="367.81" y="821.3" width="1.7" height="150.30000000000007" fill="#6db56d"/>
<rect x="377.54" y="821.3" width="1.7" height="150.30000000000007" fill="#6db56d"/>
<rect x="387.27" y="821.3" width="1.7" height="150.30000000000007" fill="#6db56d"/>
<rect x="397.00" y="821.3" width="1.7" height="150.30000000000007" fill="#6db56d"/>
<rect x="406.73" y="821.3" width="1.7" height="150.30000000000007" fill="#6db56d"/>
<rect x="416.46" y="821.3" width="1.7" height="150.30000000000007" fill="#6db56d"/>
<rect x="426.19" y="821.3" width="1.7" height="150.30000000000007" fill="#6db56d"/>
<rect x="435.92" y="821.3" width="1.7" height="150.30000000000007" fill="#6db56d"/>
<rect x="445.65" y="821.3" width="1.7" height="150.30000000000007" fill="#6db56d"/>
<rect x="455.38" y="821.3" width="1.7" height="150.30000000000007" fill="#6db56d"/>
<rect x="465.11" y="821.3" width="1.7" height="150.30000000000007" fill="#6db56d"/>
<rect x="474.84" y="821.3" width="1.7" height="150.30000000000007" fill="#6db56d"/>
<rect x="484.57" y="821.3" width="1.7" height="150.30000000000007" fill="#6db56d"/>
<rect x="494.30" y="821.3" width="1.7" height="150.30000000000007" fill="#6db56d"/>
<rect x="504.03" y="821.3" width="1.7" height="150.30000000000007" fill="#6db56d"/>
<rect x="513.76" y="821.3" width="1.7" height="150.30000000000007" fill="#6db56d"/>
<rect x="523.49" y="821.3" width="1.7" height="150.30000000000007" fill="#6db56d"/>
<rect x="533.22" y="821.3" width="1.7" height="150.30000000000007" fill="#6db56d"/>
<rect x="542.95" y="821.3" width="1.7" height="150.30000000000007" fill="#6db56d"/>
<rect x="552.68" y="821.3" width="1.7" height="150.30000000000007" fill="#6db56d"/>
<rect x="562.41" y="821.3" width="1.7" height="150.30000000000007" fill="#6db56d"/>
<rect x="572.14" y="821.3" width="1.7" height="150.30000000000007" fill="#6db56d"/>
<rect x="581.87" y="821.3" width="1.7" height="150.30000000000007" fill="#6db56d"/>
<rect x="591.60" y="821.3" width="1.7" height="150.30000000000007" fill="#6db56d"/>
<rect x="601.33" y="821.3" width="1.7" height="150.30000000000007" fill="#6db56d"/>
<rect x="611.06" y="821.3" width="1.7" height="150.30000000000007" fill="#6db56d"/>
<rect x="620.79" y="821.3" width="1.7" height="150.30000000000007" fill="#6db56d"/>
<rect x="630.52" y="821.3" width="1.7" height="150.30000000000007" fill="#6db56d"/>
<rect x="640.25" y="821.3" width="1.7" height="150.30000000000007" fill="#6db56d"/>
<rect x="649.98" y="821.3" width="1.7" height="150.30000000000007" fill="#6db56d"/>
<rect x="659.71" y="821.3" width="1.7" height="150.30000000000007" fill="#6db56d"/>
<rect x="669.44" y="821.3" width="1.7" height="150.30000000000007" fill="#6db56d"/>
<rect x="679.17" y="821.3" width="1.7" height="150.30000000000007" fill="#6db56d"/>
<rect x="688.90" y="821.3" width="1.7" height="150.30000000000007" fill="#6db56d"/>
<rect x="698.63" y="821.3" width="1.7" height="150.30000000000007" fill="#6db56d"/>
<rect x="708.36" y="821.3" width="1.7" height="150.30000000000007" fill="#6db56d"/>
<rect x="718.09" y="821.3" width="1.7" height="150.30000000000007" fill="#6db56d"/>
<rect x="727.82" y="821.3" width="1.7" height="150.30000000000007" fill="#6db56d"/>
<rect x="737.55" y="821.3" width="1.7" height="150.30000000000007" fill="#6db56d"/>
<rect x="747.28" y="821.3" width="1.7" height="150.30000000000007" fill="#6db56d"/>
<rect x="757.01" y="821.3" width="1.7" height="150.30000000000007" fill="#6db56d"/>
<rect x="766.74" y="821.3" width="1.7" height="150.30000000000007" fill="#6db56d"/>
<rect x="776.47" y="821.3" width="1.7" height="150.30000000000007" fill="#6db56d"/>
<path d="M99.3 814.3 V980.9 M99.3 814.3 L109.5 810.5 V820.5" fill="none" stroke="#000" stroke-width="1.2"/>
<path d="M83.8 971.0 H99.3 L106.8 968.7" fill="none" stroke="#000" stroke-width="1.2"/>
<text x="81.4" y="975.6" text-anchor="end" class="cl">0</text>
<path d="M83.8 923.2 H99.3 L106.8 920.9000000000001" fill="none" stroke="#000" stroke-width="1.2"/>
<text x="81.4" y="927.8000000000001" text-anchor="end" class="cl">20</text>
<path d="M83.8 875.9 H99.3 L106.8 873.6" fill="none" stroke="#000" stroke-width="1.2"/>
<text x="81.4" y="880.5" text-anchor="end" class="cl">40</text>
<path d="M83.8 828.5 H99.3 L106.8 826.2" fill="none" stroke="#000" stroke-width="1.2"/>
<text x="81.4" y="833.1" text-anchor="end" class="cl">60</text>
<line x1="99.3" y1="971.6" x2="99.3" y2="980.9" stroke="#000" stroke-width="1.2"/>
<text x="99.3" y="994.1" text-anchor="middle" class="cl">0</text>
<line x1="293.90000000000003" y1="971.6" x2="293.90000000000003" y2="980.9" stroke="#000" stroke-width="1.2"/>
<text x="293.90000000000003" y="994.1" text-anchor="middle" class="cl">20</text>
<line x1="488.50000000000006" y1="971.6" x2="488.50000000000006" y2="980.9" stroke="#000" stroke-width="1.2"/>
<text x="488.50000000000006" y="994.1" text-anchor="middle" class="cl">40</text>
<line x1="683.1" y1="971.6" x2="683.1" y2="980.9" stroke="#000" stroke-width="1.2"/>
<text x="683.1" y="994.1" text-anchor="middle" class="cl">60</text>
<text x="428" y="795" text-anchor="middle" class="ct" textLength="58" lengthAdjust="spacingAndGlyphs">Travel Time</text>
<rect x="926.4" y="810.1" width="690.0000000000001" height="161.29999999999995" fill="#d3d3d3"/>
<rect x="924.4" y="809.6" width="694.0000000000001" height="2" fill="#b4b4b4"/>
<polygon points="1616.4,811.6 1621.9,810.6 1621.9,974.8 1607.3,978.8 1607.3,971.4 1616.4,968.6999999999999" fill="#a0a0a0"/>
<polygon points="909.3,814.6999999999999 924.4,810.1 926.4,810.1 916.6,814.4 916.6,978.8 909.3,978.8" fill="#d3d3d3"/>
<polygon points="916.6,814.4 926.4,810.1 926.4,968.4 916.6,971.4" fill="#a0a0a0"/>
<rect x="916.6" y="971.4" width="690.6999999999999" height="7.399999999999977" fill="#d3d3d3"/>
<line x1="926.4" y1="879.8" x2="1616.4" y2="879.8" stroke="#000" stroke-width="1.2"/>
<line x1="1120.6" y1="810.5" x2="1120.6" y2="971" stroke="#000" stroke-width="1.2"/>
<line x1="1315.4" y1="810.5" x2="1315.4" y2="971" stroke="#000" stroke-width="1.2"/>
<line x1="1509.9" y1="810.5" x2="1509.9" y2="971" stroke="#000" stroke-width="1.2"/>
<polygon points="932.04,821.4 937.64,820.1 937.64,970.1 932.04,971.4" fill="#c4c4aa"/>
<polygon points="923.94,821.4 929.54,820.1 937.64,820.1 932.04,821.4" fill="#e8e8cc"/>
<rect x="923.94" y="821.4" width="8.1" height="150.00" fill="#ffffe0"/>
<polygon points="941.77,878.9 947.37,877.6 947.37,970.1 941.77,971.4" fill="#c4c4aa"/>
<polygon points="933.67,878.9 939.27,877.6 947.37,877.6 941.77,878.9" fill="#e8e8cc"/>
<rect x="933.67" y="878.9" width="8.1" height="92.50" fill="#ffffe0"/>
<polygon points="951.51,881.4 957.11,880.1 957.11,970.1 951.51,971.4" fill="#c4c4aa"/>
<polygon points="943.41,881.4 949.01,880.1 957.11,880.1 951.51,881.4" fill="#e8e8cc"/>
<rect x="943.41" y="881.4" width="8.1" height="90.00" fill="#ffffe0"/>
<polygon points="961.24,899.7 966.84,898.4000000000001 966.84,970.1 961.24,971.4" fill="#c4c4aa"/>
<polygon points="953.14,899.7 958.74,898.4000000000001 966.84,898.4000000000001 961.24,899.7" fill="#e8e8cc"/>
<rect x="953.14" y="899.7" width="8.1" height="71.70" fill="#ffffe0"/>
<polygon points="970.98,922.7 976.58,921.4000000000001 976.58,970.1 970.98,971.4" fill="#c4c4aa"/>
<polygon points="962.88,922.7 968.48,921.4000000000001 976.58,921.4000000000001 970.98,922.7" fill="#e8e8cc"/>
<rect x="962.88" y="922.7" width="8.1" height="48.70" fill="#ffffe0"/>
<polygon points="980.71,821.4 986.31,820.1 986.31,970.1 980.71,971.4" fill="#c4c4aa"/>
<polygon points="972.61,821.4 978.21,820.1 986.31,820.1 980.71,821.4" fill="#e8e8cc"/>
<rect x="972.61" y="821.4" width="8.1" height="150.00" fill="#ffffe0"/>
<polygon points="990.45,878.9 996.05,877.6 996.05,970.1 990.45,971.4" fill="#c4c4aa"/>
<polygon points="982.35,878.9 987.95,877.6 996.05,877.6 990.45,878.9" fill="#e8e8cc"/>
<rect x="982.35" y="878.9" width="8.1" height="92.50" fill="#ffffe0"/>
<polygon points="1000.18,881.4 1005.78,880.1 1005.78,970.1 1000.18,971.4" fill="#c4c4aa"/>
<polygon points="992.08,881.4 997.68,880.1 1005.78,880.1 1000.18,881.4" fill="#e8e8cc"/>
<rect x="992.08" y="881.4" width="8.1" height="90.00" fill="#ffffe0"/>
<polygon points="1009.92,899.7 1015.52,898.4000000000001 1015.52,970.1 1009.92,971.4" fill="#c4c4aa"/>
<polygon points="1001.82,899.7 1007.42,898.4000000000001 1015.52,898.4000000000001 1009.92,899.7" fill="#e8e8cc"/>
<rect x="1001.82" y="899.7" width="8.1" height="71.70" fill="#ffffe0"/>
<polygon points="1019.65,922.7 1025.25,921.4000000000001 1025.25,970.1 1019.65,971.4" fill="#c4c4aa"/>
<polygon points="1011.55,922.7 1017.15,921.4000000000001 1025.25,921.4000000000001 1019.65,922.7" fill="#e8e8cc"/>
<rect x="1011.55" y="922.7" width="8.1" height="48.70" fill="#ffffe0"/>
<polygon points="1029.38,821.4 1034.98,820.1 1034.98,970.1 1029.38,971.4" fill="#c4c4aa"/>
<polygon points="1021.29,821.4 1026.88,820.1 1034.98,820.1 1029.38,821.4" fill="#e8e8cc"/>
<rect x="1021.29" y="821.4" width="8.1" height="150.00" fill="#ffffe0"/>
<polygon points="1039.12,878.9 1044.72,877.6 1044.72,970.1 1039.12,971.4" fill="#c4c4aa"/>
<polygon points="1031.02,878.9 1036.62,877.6 1044.72,877.6 1039.12,878.9" fill="#e8e8cc"/>
<rect x="1031.02" y="878.9" width="8.1" height="92.50" fill="#ffffe0"/>
<polygon points="1048.85,881.4 1054.45,880.1 1054.45,970.1 1048.85,971.4" fill="#c4c4aa"/>
<polygon points="1040.75,881.4 1046.35,880.1 1054.45,880.1 1048.85,881.4" fill="#e8e8cc"/>
<rect x="1040.75" y="881.4" width="8.1" height="90.00" fill="#ffffe0"/>
<polygon points="1058.59,899.7 1064.19,898.4000000000001 1064.19,970.1 1058.59,971.4" fill="#c4c4aa"/>
<polygon points="1050.49,899.7 1056.09,898.4000000000001 1064.19,898.4000000000001 1058.59,899.7" fill="#e8e8cc"/>
<rect x="1050.49" y="899.7" width="8.1" height="71.70" fill="#ffffe0"/>
<polygon points="1068.32,922.7 1073.92,921.4000000000001 1073.92,970.1 1068.32,971.4" fill="#c4c4aa"/>
<polygon points="1060.22,922.7 1065.82,921.4000000000001 1073.92,921.4000000000001 1068.32,922.7" fill="#e8e8cc"/>
<rect x="1060.22" y="922.7" width="8.1" height="48.70" fill="#ffffe0"/>
<polygon points="1078.06,823 1083.66,821.7 1083.66,970.1 1078.06,971.4" fill="#c4c4aa"/>
<polygon points="1069.96,823 1075.56,821.7 1083.66,821.7 1078.06,823" fill="#e8e8cc"/>
<rect x="1069.96" y="823" width="8.1" height="148.40" fill="#ffffe0"/>
<polygon points="1087.79,878.9 1093.39,877.6 1093.39,970.1 1087.79,971.4" fill="#c4c4aa"/>
<polygon points="1079.69,878.9 1085.29,877.6 1093.39,877.6 1087.79,878.9" fill="#e8e8cc"/>
<rect x="1079.69" y="878.9" width="8.1" height="92.50" fill="#ffffe0"/>
<polygon points="1097.53,881.4 1103.13,880.1 1103.13,970.1 1097.53,971.4" fill="#c4c4aa"/>
<polygon points="1089.43,881.4 1095.03,880.1 1103.13,880.1 1097.53,881.4" fill="#e8e8cc"/>
<rect x="1089.43" y="881.4" width="8.1" height="90.00" fill="#ffffe0"/>
<polygon points="1107.26,899.7 1112.86,898.4000000000001 1112.86,970.1 1107.26,971.4" fill="#c4c4aa"/>
<polygon points="1099.16,899.7 1104.76,898.4000000000001 1112.86,898.4000000000001 1107.26,899.7" fill="#e8e8cc"/>
<rect x="1099.16" y="899.7" width="8.1" height="71.70" fill="#ffffe0"/>
<polygon points="1117.00,922.7 1122.60,921.4000000000001 1122.60,970.1 1117.00,971.4" fill="#c4c4aa"/>
<polygon points="1108.90,922.7 1114.50,921.4000000000001 1122.60,921.4000000000001 1117.00,922.7" fill="#e8e8cc"/>
<rect x="1108.90" y="922.7" width="8.1" height="48.70" fill="#ffffe0"/>
<polygon points="1126.73,832.7 1132.33,831.4000000000001 1132.33,970.1 1126.73,971.4" fill="#c4c4aa"/>
<polygon points="1118.63,832.7 1124.23,831.4000000000001 1132.33,831.4000000000001 1126.73,832.7" fill="#e8e8cc"/>
<rect x="1118.63" y="832.7" width="8.1" height="138.70" fill="#ffffe0"/>
<polygon points="1136.47,878.9 1142.07,877.6 1142.07,970.1 1136.47,971.4" fill="#c4c4aa"/>
<polygon points="1128.37,878.9 1133.97,877.6 1142.07,877.6 1136.47,878.9" fill="#e8e8cc"/>
<rect x="1128.37" y="878.9" width="8.1" height="92.50" fill="#ffffe0"/>
<polygon points="1146.20,881.4 1151.80,880.1 1151.80,970.1 1146.20,971.4" fill="#c4c4aa"/>
<polygon points="1138.11,881.4 1143.70,880.1 1151.80,880.1 1146.20,881.4" fill="#e8e8cc"/>
<rect x="1138.11" y="881.4" width="8.1" height="90.00" fill="#ffffe0"/>
<polygon points="1155.94,899.7 1161.54,898.4000000000001 1161.54,970.1 1155.94,971.4" fill="#c4c4aa"/>
<polygon points="1147.84,899.7 1153.44,898.4000000000001 1161.54,898.4000000000001 1155.94,899.7" fill="#e8e8cc"/>
<rect x="1147.84" y="899.7" width="8.1" height="71.70" fill="#ffffe0"/>
<polygon points="1165.67,922.7 1171.27,921.4000000000001 1171.27,970.1 1165.67,971.4" fill="#c4c4aa"/>
<polygon points="1157.57,922.7 1163.17,921.4000000000001 1171.27,921.4000000000001 1165.67,922.7" fill="#e8e8cc"/>
<rect x="1157.57" y="922.7" width="8.1" height="48.70" fill="#ffffe0"/>
<polygon points="1175.41,851.2 1181.01,849.9000000000001 1181.01,970.1 1175.41,971.4" fill="#c4c4aa"/>
<polygon points="1167.31,851.2 1172.91,849.9000000000001 1181.01,849.9000000000001 1175.41,851.2" fill="#e8e8cc"/>
<rect x="1167.31" y="851.2" width="8.1" height="120.20" fill="#ffffe0"/>
<polygon points="1185.14,878.9 1190.74,877.6 1190.74,970.1 1185.14,971.4" fill="#c4c4aa"/>
<polygon points="1177.04,878.9 1182.64,877.6 1190.74,877.6 1185.14,878.9" fill="#e8e8cc"/>
<rect x="1177.04" y="878.9" width="8.1" height="92.50" fill="#ffffe0"/>
<polygon points="1194.88,881.4 1200.48,880.1 1200.48,970.1 1194.88,971.4" fill="#c4c4aa"/>
<polygon points="1186.78,881.4 1192.38,880.1 1200.48,880.1 1194.88,881.4" fill="#e8e8cc"/>
<rect x="1186.78" y="881.4" width="8.1" height="90.00" fill="#ffffe0"/>
<polygon points="1204.61,899.7 1210.21,898.4000000000001 1210.21,970.1 1204.61,971.4" fill="#c4c4aa"/>
<polygon points="1196.51,899.7 1202.11,898.4000000000001 1210.21,898.4000000000001 1204.61,899.7" fill="#e8e8cc"/>
<rect x="1196.51" y="899.7" width="8.1" height="71.70" fill="#ffffe0"/>
<polygon points="1214.35,922.7 1219.95,921.4000000000001 1219.95,970.1 1214.35,971.4" fill="#c4c4aa"/>
<polygon points="1206.25,922.7 1211.85,921.4000000000001 1219.95,921.4000000000001 1214.35,922.7" fill="#e8e8cc"/>
<rect x="1206.25" y="922.7" width="8.1" height="48.70" fill="#ffffe0"/>
<polygon points="1224.08,858 1229.68,856.7 1229.68,970.1 1224.08,971.4" fill="#c4c4aa"/>
<polygon points="1215.98,858 1221.58,856.7 1229.68,856.7 1224.08,858" fill="#e8e8cc"/>
<rect x="1215.98" y="858" width="8.1" height="113.40" fill="#ffffe0"/>
<polygon points="1233.82,878.9 1239.42,877.6 1239.42,970.1 1233.82,971.4" fill="#c4c4aa"/>
<polygon points="1225.72,878.9 1231.32,877.6 1239.42,877.6 1233.82,878.9" fill="#e8e8cc"/>
<rect x="1225.72" y="878.9" width="8.1" height="92.50" fill="#ffffe0"/>
<polygon points="1243.55,881.4 1249.15,880.1 1249.15,970.1 1243.55,971.4" fill="#c4c4aa"/>
<polygon points="1235.45,881.4 1241.05,880.1 1249.15,880.1 1243.55,881.4" fill="#e8e8cc"/>
<rect x="1235.45" y="881.4" width="8.1" height="90.00" fill="#ffffe0"/>
<polygon points="1253.29,899.7 1258.89,898.4000000000001 1258.89,970.1 1253.29,971.4" fill="#c4c4aa"/>
<polygon points="1245.19,899.7 1250.79,898.4000000000001 1258.89,898.4000000000001 1253.29,899.7" fill="#e8e8cc"/>
<rect x="1245.19" y="899.7" width="8.1" height="71.70" fill="#ffffe0"/>
<polygon points="1263.02,922.7 1268.62,921.4000000000001 1268.62,970.1 1263.02,971.4" fill="#c4c4aa"/>
<polygon points="1254.92,922.7 1260.52,921.4000000000001 1268.62,921.4000000000001 1263.02,922.7" fill="#e8e8cc"/>
<rect x="1254.92" y="922.7" width="8.1" height="48.70" fill="#ffffe0"/>
<polygon points="1272.76,858 1278.36,856.7 1278.36,970.1 1272.76,971.4" fill="#c4c4aa"/>
<polygon points="1264.66,858 1270.26,856.7 1278.36,856.7 1272.76,858" fill="#e8e8cc"/>
<rect x="1264.66" y="858" width="8.1" height="113.40" fill="#ffffe0"/>
<polygon points="1282.49,878.9 1288.09,877.6 1288.09,970.1 1282.49,971.4" fill="#c4c4aa"/>
<polygon points="1274.39,878.9 1279.99,877.6 1288.09,877.6 1282.49,878.9" fill="#e8e8cc"/>
<rect x="1274.39" y="878.9" width="8.1" height="92.50" fill="#ffffe0"/>
<polygon points="1292.23,881.4 1297.83,880.1 1297.83,970.1 1292.23,971.4" fill="#c4c4aa"/>
<polygon points="1284.13,881.4 1289.73,880.1 1297.83,880.1 1292.23,881.4" fill="#e8e8cc"/>
<rect x="1284.13" y="881.4" width="8.1" height="90.00" fill="#ffffe0"/>
<polygon points="1301.96,899.7 1307.56,898.4000000000001 1307.56,970.1 1301.96,971.4" fill="#c4c4aa"/>
<polygon points="1293.86,899.7 1299.46,898.4000000000001 1307.56,898.4000000000001 1301.96,899.7" fill="#e8e8cc"/>
<rect x="1293.86" y="899.7" width="8.1" height="71.70" fill="#ffffe0"/>
<polygon points="1311.70,922.7 1317.30,921.4000000000001 1317.30,970.1 1311.70,971.4" fill="#c4c4aa"/>
<polygon points="1303.60,922.7 1309.20,921.4000000000001 1317.30,921.4000000000001 1311.70,922.7" fill="#e8e8cc"/>
<rect x="1303.60" y="922.7" width="8.1" height="48.70" fill="#ffffe0"/>
<polygon points="1321.43,870.5 1327.03,869.2 1327.03,970.1 1321.43,971.4" fill="#c4c4aa"/>
<polygon points="1313.34,870.5 1318.93,869.2 1327.03,869.2 1321.43,870.5" fill="#e8e8cc"/>
<rect x="1313.34" y="870.5" width="8.1" height="100.90" fill="#ffffe0"/>
<polygon points="1331.17,878.9 1336.77,877.6 1336.77,970.1 1331.17,971.4" fill="#c4c4aa"/>
<polygon points="1323.07,878.9 1328.67,877.6 1336.77,877.6 1331.17,878.9" fill="#e8e8cc"/>
<rect x="1323.07" y="878.9" width="8.1" height="92.50" fill="#ffffe0"/>
<polygon points="1340.90,881.4 1346.50,880.1 1346.50,970.1 1340.90,971.4" fill="#c4c4aa"/>
<polygon points="1332.80,881.4 1338.40,880.1 1346.50,880.1 1340.90,881.4" fill="#e8e8cc"/>
<rect x="1332.80" y="881.4" width="8.1" height="90.00" fill="#ffffe0"/>
<polygon points="1350.64,899.7 1356.24,898.4000000000001 1356.24,970.1 1350.64,971.4" fill="#c4c4aa"/>
<polygon points="1342.54,899.7 1348.14,898.4000000000001 1356.24,898.4000000000001 1350.64,899.7" fill="#e8e8cc"/>
<rect x="1342.54" y="899.7" width="8.1" height="71.70" fill="#ffffe0"/>
<polygon points="1360.37,922.7 1365.97,921.4000000000001 1365.97,970.1 1360.37,971.4" fill="#c4c4aa"/>
<polygon points="1352.27,922.7 1357.87,921.4000000000001 1365.97,921.4000000000001 1360.37,922.7" fill="#e8e8cc"/>
<rect x="1352.27" y="922.7" width="8.1" height="48.70" fill="#ffffe0"/>
<polygon points="1370.11,870.5 1375.71,869.2 1375.71,970.1 1370.11,971.4" fill="#c4c4aa"/>
<polygon points="1362.01,870.5 1367.61,869.2 1375.71,869.2 1370.11,870.5" fill="#e8e8cc"/>
<rect x="1362.01" y="870.5" width="8.1" height="100.90" fill="#ffffe0"/>
<polygon points="1379.84,878.9 1385.44,877.6 1385.44,970.1 1379.84,971.4" fill="#c4c4aa"/>
<polygon points="1371.74,878.9 1377.34,877.6 1385.44,877.6 1379.84,878.9" fill="#e8e8cc"/>
<rect x="1371.74" y="878.9" width="8.1" height="92.50" fill="#ffffe0"/>
<polygon points="1389.58,881.4 1395.18,880.1 1395.18,970.1 1389.58,971.4" fill="#c4c4aa"/>
<polygon points="1381.48,881.4 1387.08,880.1 1395.18,880.1 1389.58,881.4" fill="#e8e8cc"/>
<rect x="1381.48" y="881.4" width="8.1" height="90.00" fill="#ffffe0"/>
<polygon points="1399.31,899.7 1404.91,898.4000000000001 1404.91,970.1 1399.31,971.4" fill="#c4c4aa"/>
<polygon points="1391.21,899.7 1396.81,898.4000000000001 1404.91,898.4000000000001 1399.31,899.7" fill="#e8e8cc"/>
<rect x="1391.21" y="899.7" width="8.1" height="71.70" fill="#ffffe0"/>
<polygon points="1409.05,922.7 1414.65,921.4000000000001 1414.65,970.1 1409.05,971.4" fill="#c4c4aa"/>
<polygon points="1400.95,922.7 1406.55,921.4000000000001 1414.65,921.4000000000001 1409.05,922.7" fill="#e8e8cc"/>
<rect x="1400.95" y="922.7" width="8.1" height="48.70" fill="#ffffe0"/>
<polygon points="1418.78,858 1424.38,856.7 1424.38,970.1 1418.78,971.4" fill="#c4c4aa"/>
<polygon points="1410.68,858 1416.28,856.7 1424.38,856.7 1418.78,858" fill="#e8e8cc"/>
<rect x="1410.68" y="858" width="8.1" height="113.40" fill="#ffffe0"/>
<polygon points="1428.52,878.9 1434.12,877.6 1434.12,970.1 1428.52,971.4" fill="#c4c4aa"/>
<polygon points="1420.42,878.9 1426.02,877.6 1434.12,877.6 1428.52,878.9" fill="#e8e8cc"/>
<rect x="1420.42" y="878.9" width="8.1" height="92.50" fill="#ffffe0"/>
<polygon points="1438.25,881.4 1443.85,880.1 1443.85,970.1 1438.25,971.4" fill="#c4c4aa"/>
<polygon points="1430.15,881.4 1435.75,880.1 1443.85,880.1 1438.25,881.4" fill="#e8e8cc"/>
<rect x="1430.15" y="881.4" width="8.1" height="90.00" fill="#ffffe0"/>
<polygon points="1447.99,899.7 1453.59,898.4000000000001 1453.59,970.1 1447.99,971.4" fill="#c4c4aa"/>
<polygon points="1439.89,899.7 1445.49,898.4000000000001 1453.59,898.4000000000001 1447.99,899.7" fill="#e8e8cc"/>
<rect x="1439.89" y="899.7" width="8.1" height="71.70" fill="#ffffe0"/>
<polygon points="1457.72,922.7 1463.32,921.4000000000001 1463.32,970.1 1457.72,971.4" fill="#c4c4aa"/>
<polygon points="1449.62,922.7 1455.22,921.4000000000001 1463.32,921.4000000000001 1457.72,922.7" fill="#e8e8cc"/>
<rect x="1449.62" y="922.7" width="8.1" height="48.70" fill="#ffffe0"/>
<polygon points="1467.46,870.5 1473.06,869.2 1473.06,970.1 1467.46,971.4" fill="#c4c4aa"/>
<polygon points="1459.36,870.5 1464.96,869.2 1473.06,869.2 1467.46,870.5" fill="#e8e8cc"/>
<rect x="1459.36" y="870.5" width="8.1" height="100.90" fill="#ffffe0"/>
<polygon points="1477.19,878.9 1482.79,877.6 1482.79,970.1 1477.19,971.4" fill="#c4c4aa"/>
<polygon points="1469.09,878.9 1474.69,877.6 1482.79,877.6 1477.19,878.9" fill="#e8e8cc"/>
<rect x="1469.09" y="878.9" width="8.1" height="92.50" fill="#ffffe0"/>
<polygon points="1486.93,881.4 1492.53,880.1 1492.53,970.1 1486.93,971.4" fill="#c4c4aa"/>
<polygon points="1478.83,881.4 1484.43,880.1 1492.53,880.1 1486.93,881.4" fill="#e8e8cc"/>
<rect x="1478.83" y="881.4" width="8.1" height="90.00" fill="#ffffe0"/>
<polygon points="1496.66,899.7 1502.26,898.4000000000001 1502.26,970.1 1496.66,971.4" fill="#c4c4aa"/>
<polygon points="1488.57,899.7 1494.16,898.4000000000001 1502.26,898.4000000000001 1496.66,899.7" fill="#e8e8cc"/>
<rect x="1488.57" y="899.7" width="8.1" height="71.70" fill="#ffffe0"/>
<polygon points="1506.40,922.7 1512.00,921.4000000000001 1512.00,970.1 1506.40,971.4" fill="#c4c4aa"/>
<polygon points="1498.30,922.7 1503.90,921.4000000000001 1512.00,921.4000000000001 1506.40,922.7" fill="#e8e8cc"/>
<rect x="1498.30" y="922.7" width="8.1" height="48.70" fill="#ffffe0"/>
<polygon points="1516.13,870.5 1521.73,869.2 1521.73,970.1 1516.13,971.4" fill="#c4c4aa"/>
<polygon points="1508.03,870.5 1513.63,869.2 1521.73,869.2 1516.13,870.5" fill="#e8e8cc"/>
<rect x="1508.03" y="870.5" width="8.1" height="100.90" fill="#ffffe0"/>
<polygon points="1525.87,878.9 1531.47,877.6 1531.47,970.1 1525.87,971.4" fill="#c4c4aa"/>
<polygon points="1517.77,878.9 1523.37,877.6 1531.47,877.6 1525.87,878.9" fill="#e8e8cc"/>
<rect x="1517.77" y="878.9" width="8.1" height="92.50" fill="#ffffe0"/>
<polygon points="1535.60,881.4 1541.20,880.1 1541.20,970.1 1535.60,971.4" fill="#c4c4aa"/>
<polygon points="1527.50,881.4 1533.10,880.1 1541.20,880.1 1535.60,881.4" fill="#e8e8cc"/>
<rect x="1527.50" y="881.4" width="8.1" height="90.00" fill="#ffffe0"/>
<polygon points="1545.34,899.7 1550.94,898.4000000000001 1550.94,970.1 1545.34,971.4" fill="#c4c4aa"/>
<polygon points="1537.24,899.7 1542.84,898.4000000000001 1550.94,898.4000000000001 1545.34,899.7" fill="#e8e8cc"/>
<rect x="1537.24" y="899.7" width="8.1" height="71.70" fill="#ffffe0"/>
<polygon points="1555.07,922.7 1560.67,921.4000000000001 1560.67,970.1 1555.07,971.4" fill="#c4c4aa"/>
<polygon points="1546.97,922.7 1552.57,921.4000000000001 1560.67,921.4000000000001 1555.07,922.7" fill="#e8e8cc"/>
<rect x="1546.97" y="922.7" width="8.1" height="48.70" fill="#ffffe0"/>
<polygon points="1564.81,870.5 1570.41,869.2 1570.41,970.1 1564.81,971.4" fill="#c4c4aa"/>
<polygon points="1556.71,870.5 1562.31,869.2 1570.41,869.2 1564.81,870.5" fill="#e8e8cc"/>
<rect x="1556.71" y="870.5" width="8.1" height="100.90" fill="#ffffe0"/>
<polygon points="1574.54,878.9 1580.14,877.6 1580.14,970.1 1574.54,971.4" fill="#c4c4aa"/>
<polygon points="1566.44,878.9 1572.04,877.6 1580.14,877.6 1574.54,878.9" fill="#e8e8cc"/>
<rect x="1566.44" y="878.9" width="8.1" height="92.50" fill="#ffffe0"/>
<polygon points="1584.28,881.4 1589.88,880.1 1589.88,970.1 1584.28,971.4" fill="#c4c4aa"/>
<polygon points="1576.18,881.4 1581.78,880.1 1589.88,880.1 1584.28,881.4" fill="#e8e8cc"/>
<rect x="1576.18" y="881.4" width="8.1" height="90.00" fill="#ffffe0"/>
<polygon points="1594.01,899.7 1599.61,898.4000000000001 1599.61,970.1 1594.01,971.4" fill="#c4c4aa"/>
<polygon points="1585.91,899.7 1591.51,898.4000000000001 1599.61,898.4000000000001 1594.01,899.7" fill="#e8e8cc"/>
<rect x="1585.91" y="899.7" width="8.1" height="71.70" fill="#ffffe0"/>
<polygon points="1603.75,922.7 1609.35,921.4000000000001 1609.35,970.1 1603.75,971.4" fill="#c4c4aa"/>
<polygon points="1595.65,922.7 1601.25,921.4000000000001 1609.35,921.4000000000001 1603.75,922.7" fill="#e8e8cc"/>
<rect x="1595.65" y="922.7" width="8.1" height="48.70" fill="#ffffe0"/>
<path d="M916.6 814.4 V980.8 M916.6 814.4 L926.4 810.1 V820.1" fill="none" stroke="#000" stroke-width="1.2"/>
<path d="M901.1 971.4 H916.6 L924.1 969.1" fill="none" stroke="#000" stroke-width="1.2"/>
<text x="898" y="976.0" text-anchor="end" class="cl">0</text>
<path d="M901.1 883.3 H916.6 L924.1 881.0" fill="none" stroke="#000" stroke-width="1.2"/>
<text x="898" y="887.9" text-anchor="end" class="cl">20</text>
<line x1="916.6" y1="971.4" x2="916.6" y2="980.8" stroke="#000" stroke-width="1.2"/>
<text x="916.6" y="994.1" text-anchor="middle" class="cl">0</text>
<line x1="1111.3" y1="971.4" x2="1111.3" y2="980.8" stroke="#000" stroke-width="1.2"/>
<text x="1111.3" y="994.1" text-anchor="middle" class="cl">20</text>
<line x1="1306.0" y1="971.4" x2="1306.0" y2="980.8" stroke="#000" stroke-width="1.2"/>
<text x="1306.0" y="994.1" text-anchor="middle" class="cl">40</text>
<line x1="1500.6999999999998" y1="971.4" x2="1500.6999999999998" y2="980.8" stroke="#000" stroke-width="1.2"/>
<text x="1500.6999999999998" y="994.1" text-anchor="middle" class="cl">60</text>
<text x="1243" y="795" text-anchor="middle" class="ct" textLength="54" lengthAdjust="spacingAndGlyphs">Toll Prices</text>
<rect x="932.4" y="572.3" width="574.0000000000001" height="160.20000000000005" fill="#d3d3d3"/>
<rect x="930.4" y="571.8" width="578.0000000000001" height="2" fill="#b4b4b4"/>
<polygon points="1506.4,573.8 1512.7,572.8 1512.7,735.8 1499.4,739.8 1499.4,732.5 1506.4,729.8" fill="#a0a0a0"/>
<polygon points="918.1,575.5999999999999 930.4,572.3 932.4,572.3 925.3,575.3 925.3,739.8 918.1,739.8" fill="#d3d3d3"/>
<polygon points="925.3,575.3 932.4,572.3 932.4,729.5 925.3,732.5" fill="#a0a0a0"/>
<rect x="925.3" y="732.5" width="574.1000000000001" height="7.2999999999999545" fill="#d3d3d3"/>
<line x1="932.4" y1="641.2" x2="1506.4" y2="641.2" stroke="#000" stroke-width="1.2"/>
<line x1="1094.2" y1="572.5" x2="1094.2" y2="600" stroke="#000" stroke-width="1.2"/>
<line x1="1256.4" y1="572.5" x2="1256.4" y2="600" stroke="#000" stroke-width="1.2"/>
<line x1="1418.8" y1="572.5" x2="1418.8" y2="600" stroke="#000" stroke-width="1.2"/>
<line x1="1499.4" y1="641.2" x2="1506.4" y2="641.2" stroke="#000" stroke-width="1.2"/>
<polygon points="938.98,583.495 942.78,581.795 942.78,609.795 938.98,611.495" fill="#c000c0" stroke="#32cd32" stroke-width="0.8"/>
<polygon points="938.98,611.495 942.78,609.795 942.78,639.9 938.98,641.6" fill="#707060"/>
<polygon points="938.98,641.6 942.78,639.9 942.78,730.8 938.98,732.5" fill="#5cc85c"/>
<polygon points="931.08,583.495 934.88,581.795 942.78,581.795 938.98,583.495" fill="#d000d0" stroke="#32cd32" stroke-width="0.9"/>
<rect x="931.08" y="660.3" width="7.9" height="72.20000000000005" fill="#e0ffff" stroke="#32cd32" stroke-width="1.1"/>
<rect x="931.08" y="641.6" width="7.9" height="18.7" fill="#90ee90" stroke="#32cd32" stroke-width="1.1"/>
<rect x="931.08" y="611.50" width="7.9" height="30.10" fill="#ffffe0" stroke="#ffa500" stroke-width="1.2"/>
<rect x="931.08" y="583.50" width="7.9" height="28" fill="#ff00ff" stroke="#32cd32" stroke-width="1.1"/>
<polygon points="947.06,595.03525 950.86,593.33525 950.86,621.33525 947.06,623.03525" fill="#c000c0" stroke="#32cd32" stroke-width="0.8"/>
<polygon points="947.06,623.03525 950.86,621.33525 950.86,639.9 947.06,641.6" fill="#707060"/>
<polygon points="947.06,641.6 950.86,639.9 950.86,730.8 947.06,732.5" fill="#5cc85c"/>
<polygon points="939.16,595.03525 942.96,593.33525 950.86,593.33525 947.06,595.03525" fill="#d000d0" stroke="#32cd32" stroke-width="0.9"/>
<rect x="939.16" y="660.3" width="7.9" height="72.20000000000005" fill="#e0ffff" stroke="#32cd32" stroke-width="1.1"/>
<rect x="939.16" y="641.6" width="7.9" height="18.7" fill="#90ee90" stroke="#32cd32" stroke-width="1.1"/>
<rect x="939.16" y="623.04" width="7.9" height="18.56" fill="#ffffe0" stroke="#1a1a1a" stroke-width="1.2"/>
<rect x="939.16" y="595.04" width="7.9" height="28" fill="#ff00ff" stroke="#32cd32" stroke-width="1.1"/>
<polygon points="955.14,595.537 958.94,593.837 958.94,621.837 955.14,623.537" fill="#c000c0" stroke="#32cd32" stroke-width="0.8"/>
<polygon points="955.14,623.537 958.94,621.837 958.94,639.9 955.14,641.6" fill="#707060"/>
<polygon points="955.14,641.6 958.94,639.9 958.94,730.8 955.14,732.5" fill="#5cc85c"/>
<polygon points="947.24,595.537 951.04,593.837 958.94,593.837 955.14,595.537" fill="#d000d0" stroke="#32cd32" stroke-width="0.9"/>
<rect x="947.24" y="660.3" width="7.9" height="72.20000000000005" fill="#e0ffff" stroke="#32cd32" stroke-width="1.1"/>
<rect x="947.24" y="641.6" width="7.9" height="18.7" fill="#90ee90" stroke="#32cd32" stroke-width="1.1"/>
<rect x="947.24" y="623.54" width="7.9" height="18.06" fill="#ffffe0" stroke="#1a1a1a" stroke-width="1.2"/>
<rect x="947.24" y="595.54" width="7.9" height="28" fill="#ff00ff" stroke="#32cd32" stroke-width="1.1"/>
<polygon points="963.22,599.2098100000001 967.02,597.50981 967.02,625.50981 963.22,627.2098100000001" fill="#c000c0" stroke="#32cd32" stroke-width="0.8"/>
<polygon points="963.22,627.2098100000001 967.02,625.50981 967.02,639.9 963.22,641.6" fill="#707060"/>
<polygon points="963.22,641.6 967.02,639.9 967.02,730.8 963.22,732.5" fill="#5cc85c"/>
<polygon points="955.32,599.2098100000001 959.12,597.50981 967.02,597.50981 963.22,599.2098100000001" fill="#d000d0" stroke="#32cd32" stroke-width="0.9"/>
<rect x="955.32" y="660.3" width="7.9" height="72.20000000000005" fill="#e0ffff" stroke="#32cd32" stroke-width="1.1"/>
<rect x="955.32" y="641.6" width="7.9" height="18.7" fill="#90ee90" stroke="#32cd32" stroke-width="1.1"/>
<rect x="955.32" y="627.21" width="7.9" height="14.39" fill="#ffffe0" stroke="#1a1a1a" stroke-width="1.2"/>
<rect x="955.32" y="599.21" width="7.9" height="28" fill="#ff00ff" stroke="#32cd32" stroke-width="1.1"/>
<polygon points="971.30,603.82591 975.10,602.12591 975.10,630.12591 971.30,631.82591" fill="#c000c0" stroke="#32cd32" stroke-width="0.8"/>
<polygon points="971.30,631.82591 975.10,630.12591 975.10,639.9 971.30,641.6" fill="#707060"/>
<polygon points="971.30,641.6 975.10,639.9 975.10,730.8 971.30,732.5" fill="#5cc85c"/>
<polygon points="963.40,603.82591 967.20,602.12591 975.10,602.12591 971.30,603.82591" fill="#d000d0" stroke="#32cd32" stroke-width="0.9"/>
<rect x="963.40" y="660.3" width="7.9" height="72.20000000000005" fill="#e0ffff" stroke="#32cd32" stroke-width="1.1"/>
<rect x="963.40" y="641.6" width="7.9" height="18.7" fill="#90ee90" stroke="#32cd32" stroke-width="1.1"/>
<rect x="963.40" y="631.83" width="7.9" height="9.77" fill="#ffffe0" stroke="#32cd32" stroke-width="1.2"/>
<rect x="963.40" y="603.83" width="7.9" height="28" fill="#ff00ff" stroke="#32cd32" stroke-width="1.1"/>
<polygon points="979.38,583.495 983.18,581.795 983.18,609.795 979.38,611.495" fill="#c000c0" stroke="#32cd32" stroke-width="0.8"/>
<polygon points="979.38,611.495 983.18,609.795 983.18,639.9 979.38,641.6" fill="#707060"/>
<polygon points="979.38,641.6 983.18,639.9 983.18,730.8 979.38,732.5" fill="#5cc85c"/>
<polygon points="971.48,583.495 975.28,581.795 983.18,581.795 979.38,583.495" fill="#d000d0" stroke="#32cd32" stroke-width="0.9"/>
<rect x="971.48" y="660.3" width="7.9" height="72.20000000000005" fill="#e0ffff" stroke="#32cd32" stroke-width="1.1"/>
<rect x="971.48" y="641.6" width="7.9" height="18.7" fill="#90ee90" stroke="#32cd32" stroke-width="1.1"/>
<rect x="971.48" y="611.50" width="7.9" height="30.10" fill="#ffffe0" stroke="#ffa500" stroke-width="1.2"/>
<rect x="971.48" y="583.50" width="7.9" height="28" fill="#ff00ff" stroke="#32cd32" stroke-width="1.1"/>
<polygon points="987.46,595.03525 991.26,593.33525 991.26,621.33525 987.46,623.03525" fill="#c000c0" stroke="#32cd32" stroke-width="0.8"/>
<polygon points="987.46,623.03525 991.26,621.33525 991.26,639.9 987.46,641.6" fill="#707060"/>
<polygon points="987.46,641.6 991.26,639.9 991.26,730.8 987.46,732.5" fill="#5cc85c"/>
<polygon points="979.56,595.03525 983.36,593.33525 991.26,593.33525 987.46,595.03525" fill="#d000d0" stroke="#32cd32" stroke-width="0.9"/>
<rect x="979.56" y="660.3" width="7.9" height="72.20000000000005" fill="#e0ffff" stroke="#32cd32" stroke-width="1.1"/>
<rect x="979.56" y="641.6" width="7.9" height="18.7" fill="#90ee90" stroke="#32cd32" stroke-width="1.1"/>
<rect x="979.56" y="623.04" width="7.9" height="18.56" fill="#ffffe0" stroke="#1a1a1a" stroke-width="1.2"/>
<rect x="979.56" y="595.04" width="7.9" height="28" fill="#ff00ff" stroke="#32cd32" stroke-width="1.1"/>
<polygon points="995.54,595.537 999.34,593.837 999.34,621.837 995.54,623.537" fill="#c000c0" stroke="#32cd32" stroke-width="0.8"/>
<polygon points="995.54,623.537 999.34,621.837 999.34,639.9 995.54,641.6" fill="#707060"/>
<polygon points="995.54,641.6 999.34,639.9 999.34,730.8 995.54,732.5" fill="#5cc85c"/>
<polygon points="987.64,595.537 991.44,593.837 999.34,593.837 995.54,595.537" fill="#d000d0" stroke="#32cd32" stroke-width="0.9"/>
<rect x="987.64" y="660.3" width="7.9" height="72.20000000000005" fill="#e0ffff" stroke="#32cd32" stroke-width="1.1"/>
<rect x="987.64" y="641.6" width="7.9" height="18.7" fill="#90ee90" stroke="#32cd32" stroke-width="1.1"/>
<rect x="987.64" y="623.54" width="7.9" height="18.06" fill="#ffffe0" stroke="#1a1a1a" stroke-width="1.2"/>
<rect x="987.64" y="595.54" width="7.9" height="28" fill="#ff00ff" stroke="#32cd32" stroke-width="1.1"/>
<polygon points="1003.62,599.2098100000001 1007.42,597.50981 1007.42,625.50981 1003.62,627.2098100000001" fill="#c000c0" stroke="#32cd32" stroke-width="0.8"/>
<polygon points="1003.62,627.2098100000001 1007.42,625.50981 1007.42,639.9 1003.62,641.6" fill="#707060"/>
<polygon points="1003.62,641.6 1007.42,639.9 1007.42,730.8 1003.62,732.5" fill="#5cc85c"/>
<polygon points="995.72,599.2098100000001 999.52,597.50981 1007.42,597.50981 1003.62,599.2098100000001" fill="#d000d0" stroke="#32cd32" stroke-width="0.9"/>
<rect x="995.72" y="660.3" width="7.9" height="72.20000000000005" fill="#e0ffff" stroke="#32cd32" stroke-width="1.1"/>
<rect x="995.72" y="641.6" width="7.9" height="18.7" fill="#90ee90" stroke="#32cd32" stroke-width="1.1"/>
<rect x="995.72" y="627.21" width="7.9" height="14.39" fill="#ffffe0" stroke="#1a1a1a" stroke-width="1.2"/>
<rect x="995.72" y="599.21" width="7.9" height="28" fill="#ff00ff" stroke="#32cd32" stroke-width="1.1"/>
<polygon points="1011.70,603.82591 1015.50,602.12591 1015.50,630.12591 1011.70,631.82591" fill="#c000c0" stroke="#32cd32" stroke-width="0.8"/>
<polygon points="1011.70,631.82591 1015.50,630.12591 1015.50,639.9 1011.70,641.6" fill="#707060"/>
<polygon points="1011.70,641.6 1015.50,639.9 1015.50,730.8 1011.70,732.5" fill="#5cc85c"/>
<polygon points="1003.80,603.82591 1007.60,602.12591 1015.50,602.12591 1011.70,603.82591" fill="#d000d0" stroke="#32cd32" stroke-width="0.9"/>
<rect x="1003.80" y="660.3" width="7.9" height="72.20000000000005" fill="#e0ffff" stroke="#32cd32" stroke-width="1.1"/>
<rect x="1003.80" y="641.6" width="7.9" height="18.7" fill="#90ee90" stroke="#32cd32" stroke-width="1.1"/>
<rect x="1003.80" y="631.83" width="7.9" height="9.77" fill="#ffffe0" stroke="#32cd32" stroke-width="1.2"/>
<rect x="1003.80" y="603.83" width="7.9" height="28" fill="#ff00ff" stroke="#32cd32" stroke-width="1.1"/>
<polygon points="1019.78,583.495 1023.58,581.795 1023.58,609.795 1019.78,611.495" fill="#c000c0" stroke="#32cd32" stroke-width="0.8"/>
<polygon points="1019.78,611.495 1023.58,609.795 1023.58,639.9 1019.78,641.6" fill="#707060"/>
<polygon points="1019.78,641.6 1023.58,639.9 1023.58,730.8 1019.78,732.5" fill="#5cc85c"/>
<polygon points="1011.88,583.495 1015.68,581.795 1023.58,581.795 1019.78,583.495" fill="#d000d0" stroke="#32cd32" stroke-width="0.9"/>
<rect x="1011.88" y="660.3" width="7.9" height="72.20000000000005" fill="#e0ffff" stroke="#32cd32" stroke-width="1.1"/>
<rect x="1011.88" y="641.6" width="7.9" height="18.7" fill="#90ee90" stroke="#32cd32" stroke-width="1.1"/>
<rect x="1011.88" y="611.50" width="7.9" height="30.10" fill="#ffffe0" stroke="#ffa500" stroke-width="1.2"/>
<rect x="1011.88" y="583.50" width="7.9" height="28" fill="#ff00ff" stroke="#32cd32" stroke-width="1.1"/>
<polygon points="1027.86,595.03525 1031.66,593.33525 1031.66,621.33525 1027.86,623.03525" fill="#c000c0" stroke="#32cd32" stroke-width="0.8"/>
<polygon points="1027.86,623.03525 1031.66,621.33525 1031.66,639.9 1027.86,641.6" fill="#707060"/>
<polygon points="1027.86,641.6 1031.66,639.9 1031.66,730.8 1027.86,732.5" fill="#5cc85c"/>
<polygon points="1019.96,595.03525 1023.76,593.33525 1031.66,593.33525 1027.86,595.03525" fill="#d000d0" stroke="#32cd32" stroke-width="0.9"/>
<rect x="1019.96" y="660.3" width="7.9" height="72.20000000000005" fill="#e0ffff" stroke="#32cd32" stroke-width="1.1"/>
<rect x="1019.96" y="641.6" width="7.9" height="18.7" fill="#90ee90" stroke="#32cd32" stroke-width="1.1"/>
<rect x="1019.96" y="623.04" width="7.9" height="18.56" fill="#ffffe0" stroke="#1a1a1a" stroke-width="1.2"/>
<rect x="1019.96" y="595.04" width="7.9" height="28" fill="#ff00ff" stroke="#32cd32" stroke-width="1.1"/>
<polygon points="1035.94,595.537 1039.74,593.837 1039.74,621.837 1035.94,623.537" fill="#c000c0" stroke="#32cd32" stroke-width="0.8"/>
<polygon points="1035.94,623.537 1039.74,621.837 1039.74,639.9 1035.94,641.6" fill="#707060"/>
<polygon points="1035.94,641.6 1039.74,639.9 1039.74,730.8 1035.94,732.5" fill="#5cc85c"/>
<polygon points="1028.04,595.537 1031.84,593.837 1039.74,593.837 1035.94,595.537" fill="#d000d0" stroke="#32cd32" stroke-width="0.9"/>
<rect x="1028.04" y="660.3" width="7.9" height="72.20000000000005" fill="#e0ffff" stroke="#32cd32" stroke-width="1.1"/>
<rect x="1028.04" y="641.6" width="7.9" height="18.7" fill="#90ee90" stroke="#32cd32" stroke-width="1.1"/>
<rect x="1028.04" y="623.54" width="7.9" height="18.06" fill="#ffffe0" stroke="#1a1a1a" stroke-width="1.2"/>
<rect x="1028.04" y="595.54" width="7.9" height="28" fill="#ff00ff" stroke="#32cd32" stroke-width="1.1"/>
<polygon points="1044.02,599.2098100000001 1047.82,597.50981 1047.82,625.50981 1044.02,627.2098100000001" fill="#c000c0" stroke="#32cd32" stroke-width="0.8"/>
<polygon points="1044.02,627.2098100000001 1047.82,625.50981 1047.82,639.9 1044.02,641.6" fill="#707060"/>
<polygon points="1044.02,641.6 1047.82,639.9 1047.82,730.8 1044.02,732.5" fill="#5cc85c"/>
<polygon points="1036.12,599.2098100000001 1039.92,597.50981 1047.82,597.50981 1044.02,599.2098100000001" fill="#d000d0" stroke="#32cd32" stroke-width="0.9"/>
<rect x="1036.12" y="660.3" width="7.9" height="72.20000000000005" fill="#e0ffff" stroke="#32cd32" stroke-width="1.1"/>
<rect x="1036.12" y="641.6" width="7.9" height="18.7" fill="#90ee90" stroke="#32cd32" stroke-width="1.1"/>
<rect x="1036.12" y="627.21" width="7.9" height="14.39" fill="#ffffe0" stroke="#1a1a1a" stroke-width="1.2"/>
<rect x="1036.12" y="599.21" width="7.9" height="28" fill="#ff00ff" stroke="#32cd32" stroke-width="1.1"/>
<polygon points="1052.10,603.82591 1055.90,602.12591 1055.90,630.12591 1052.10,631.82591" fill="#c000c0" stroke="#32cd32" stroke-width="0.8"/>
<polygon points="1052.10,631.82591 1055.90,630.12591 1055.90,639.9 1052.10,641.6" fill="#707060"/>
<polygon points="1052.10,641.6 1055.90,639.9 1055.90,730.8 1052.10,732.5" fill="#5cc85c"/>
<polygon points="1044.20,603.82591 1048.00,602.12591 1055.90,602.12591 1052.10,603.82591" fill="#d000d0" stroke="#32cd32" stroke-width="0.9"/>
<rect x="1044.20" y="660.3" width="7.9" height="72.20000000000005" fill="#e0ffff" stroke="#32cd32" stroke-width="1.1"/>
<rect x="1044.20" y="641.6" width="7.9" height="18.7" fill="#90ee90" stroke="#32cd32" stroke-width="1.1"/>
<rect x="1044.20" y="631.83" width="7.9" height="9.77" fill="#ffffe0" stroke="#32cd32" stroke-width="1.2"/>
<rect x="1044.20" y="603.83" width="7.9" height="28" fill="#ff00ff" stroke="#32cd32" stroke-width="1.1"/>
<polygon points="1060.18,583.8161200000001 1063.98,582.11612 1063.98,610.11612 1060.18,611.8161200000001" fill="#c000c0" stroke="#32cd32" stroke-width="0.8"/>
<polygon points="1060.18,611.8161200000001 1063.98,610.11612 1063.98,639.9 1060.18,641.6" fill="#707060"/>
<polygon points="1060.18,641.6 1063.98,639.9 1063.98,730.8 1060.18,732.5" fill="#5cc85c"/>
<polygon points="1052.28,583.8161200000001 1056.08,582.11612 1063.98,582.11612 1060.18,583.8161200000001" fill="#d000d0" stroke="#32cd32" stroke-width="0.9"/>
<rect x="1052.28" y="660.3" width="7.9" height="72.20000000000005" fill="#e0ffff" stroke="#32cd32" stroke-width="1.1"/>
<rect x="1052.28" y="641.6" width="7.9" height="18.7" fill="#90ee90" stroke="#32cd32" stroke-width="1.1"/>
<rect x="1052.28" y="611.82" width="7.9" height="29.78" fill="#ffffe0" stroke="#1a1a1a" stroke-width="1.2"/>
<rect x="1052.28" y="583.82" width="7.9" height="28" fill="#ff00ff" stroke="#32cd32" stroke-width="1.1"/>
<polygon points="1068.26,595.03525 1072.06,593.33525 1072.06,621.33525 1068.26,623.03525" fill="#c000c0" stroke="#32cd32" stroke-width="0.8"/>
<polygon points="1068.26,623.03525 1072.06,621.33525 1072.06,639.9 1068.26,641.6" fill="#707060"/>
<polygon points="1068.26,641.6 1072.06,639.9 1072.06,730.8 1068.26,732.5" fill="#5cc85c"/>
<polygon points="1060.36,595.03525 1064.16,593.33525 1072.06,593.33525 1068.26,595.03525" fill="#d000d0" stroke="#32cd32" stroke-width="0.9"/>
<rect x="1060.36" y="660.3" width="7.9" height="72.20000000000005" fill="#e0ffff" stroke="#32cd32" stroke-width="1.1"/>
<rect x="1060.36" y="641.6" width="7.9" height="18.7" fill="#90ee90" stroke="#32cd32" stroke-width="1.1"/>
<rect x="1060.36" y="623.04" width="7.9" height="18.56" fill="#ffffe0" stroke="#1a1a1a" stroke-width="1.2"/>
<rect x="1060.36" y="595.04" width="7.9" height="28" fill="#ff00ff" stroke="#32cd32" stroke-width="1.1"/>
<polygon points="1076.34,595.537 1080.14,593.837 1080.14,621.837 1076.34,623.537" fill="#c000c0" stroke="#32cd32" stroke-width="0.8"/>
<polygon points="1076.34,623.537 1080.14,621.837 1080.14,639.9 1076.34,641.6" fill="#707060"/>
<polygon points="1076.34,641.6 1080.14,639.9 1080.14,730.8 1076.34,732.5" fill="#5cc85c"/>
<polygon points="1068.44,595.537 1072.24,593.837 1080.14,593.837 1076.34,595.537" fill="#d000d0" stroke="#32cd32" stroke-width="0.9"/>
<rect x="1068.44" y="660.3" width="7.9" height="72.20000000000005" fill="#e0ffff" stroke="#32cd32" stroke-width="1.1"/>
<rect x="1068.44" y="641.6" width="7.9" height="18.7" fill="#90ee90" stroke="#32cd32" stroke-width="1.1"/>
<rect x="1068.44" y="623.54" width="7.9" height="18.06" fill="#ffffe0" stroke="#1a1a1a" stroke-width="1.2"/>
<rect x="1068.44" y="595.54" width="7.9" height="28" fill="#ff00ff" stroke="#32cd32" stroke-width="1.1"/>
<polygon points="1084.42,599.2098100000001 1088.22,597.50981 1088.22,625.50981 1084.42,627.2098100000001" fill="#c000c0" stroke="#32cd32" stroke-width="0.8"/>
<polygon points="1084.42,627.2098100000001 1088.22,625.50981 1088.22,639.9 1084.42,641.6" fill="#707060"/>
<polygon points="1084.42,641.6 1088.22,639.9 1088.22,730.8 1084.42,732.5" fill="#5cc85c"/>
<polygon points="1076.52,599.2098100000001 1080.32,597.50981 1088.22,597.50981 1084.42,599.2098100000001" fill="#d000d0" stroke="#32cd32" stroke-width="0.9"/>
<rect x="1076.52" y="660.3" width="7.9" height="72.20000000000005" fill="#e0ffff" stroke="#32cd32" stroke-width="1.1"/>
<rect x="1076.52" y="641.6" width="7.9" height="18.7" fill="#90ee90" stroke="#32cd32" stroke-width="1.1"/>
<rect x="1076.52" y="627.21" width="7.9" height="14.39" fill="#ffffe0" stroke="#1a1a1a" stroke-width="1.2"/>
<rect x="1076.52" y="599.21" width="7.9" height="28" fill="#ff00ff" stroke="#32cd32" stroke-width="1.1"/>
<polygon points="1092.50,603.82591 1096.30,602.12591 1096.30,630.12591 1092.50,631.82591" fill="#c000c0" stroke="#32cd32" stroke-width="0.8"/>
<polygon points="1092.50,631.82591 1096.30,630.12591 1096.30,639.9 1092.50,641.6" fill="#707060"/>
<polygon points="1092.50,641.6 1096.30,639.9 1096.30,730.8 1092.50,732.5" fill="#5cc85c"/>
<polygon points="1084.60,603.82591 1088.40,602.12591 1096.30,602.12591 1092.50,603.82591" fill="#d000d0" stroke="#32cd32" stroke-width="0.9"/>
<rect x="1084.60" y="660.3" width="7.9" height="72.20000000000005" fill="#e0ffff" stroke="#32cd32" stroke-width="1.1"/>
<rect x="1084.60" y="641.6" width="7.9" height="18.7" fill="#90ee90" stroke="#32cd32" stroke-width="1.1"/>
<rect x="1084.60" y="631.83" width="7.9" height="9.77" fill="#ffffe0" stroke="#32cd32" stroke-width="1.2"/>
<rect x="1084.60" y="603.83" width="7.9" height="28" fill="#ff00ff" stroke="#32cd32" stroke-width="1.1"/>
<polygon points="1100.58,585.76291 1104.38,584.06291 1104.38,612.06291 1100.58,613.76291" fill="#c000c0" stroke="#32cd32" stroke-width="0.8"/>
<polygon points="1100.58,613.76291 1104.38,612.06291 1104.38,639.9 1100.58,641.6" fill="#707060"/>
<polygon points="1100.58,641.6 1104.38,639.9 1104.38,730.8 1100.58,732.5" fill="#5cc85c"/>
<polygon points="1092.68,585.76291 1096.48,584.06291 1104.38,584.06291 1100.58,585.76291" fill="#d000d0" stroke="#32cd32" stroke-width="0.9"/>
<rect x="1092.68" y="660.3" width="7.9" height="72.20000000000005" fill="#e0ffff" stroke="#32cd32" stroke-width="1.1"/>
<rect x="1092.68" y="641.6" width="7.9" height="18.7" fill="#90ee90" stroke="#32cd32" stroke-width="1.1"/>
<rect x="1092.68" y="613.76" width="7.9" height="27.84" fill="#ffffe0" stroke="#1a1a1a" stroke-width="1.2"/>
<rect x="1092.68" y="585.76" width="7.9" height="28" fill="#ff00ff" stroke="#32cd32" stroke-width="1.1"/>
<polygon points="1108.66,595.03525 1112.46,593.33525 1112.46,621.33525 1108.66,623.03525" fill="#c000c0" stroke="#32cd32" stroke-width="0.8"/>
<polygon points="1108.66,623.03525 1112.46,621.33525 1112.46,639.9 1108.66,641.6" fill="#707060"/>
<polygon points="1108.66,641.6 1112.46,639.9 1112.46,730.8 1108.66,732.5" fill="#5cc85c"/>
<polygon points="1100.76,595.03525 1104.56,593.33525 1112.46,593.33525 1108.66,595.03525" fill="#d000d0" stroke="#32cd32" stroke-width="0.9"/>
<rect x="1100.76" y="660.3" width="7.9" height="72.20000000000005" fill="#e0ffff" stroke="#32cd32" stroke-width="1.1"/>
<rect x="1100.76" y="641.6" width="7.9" height="18.7" fill="#90ee90" stroke="#32cd32" stroke-width="1.1"/>
<rect x="1100.76" y="623.04" width="7.9" height="18.56" fill="#ffffe0" stroke="#1a1a1a" stroke-width="1.2"/>
<rect x="1100.76" y="595.04" width="7.9" height="28" fill="#ff00ff" stroke="#32cd32" stroke-width="1.1"/>
<polygon points="1116.74,595.537 1120.54,593.837 1120.54,621.837 1116.74,623.537" fill="#c000c0" stroke="#32cd32" stroke-width="0.8"/>
<polygon points="1116.74,623.537 1120.54,621.837 1120.54,639.9 1116.74,641.6" fill="#707060"/>
<polygon points="1116.74,641.6 1120.54,639.9 1120.54,730.8 1116.74,732.5" fill="#5cc85c"/>
<polygon points="1108.84,595.537 1112.64,593.837 1120.54,593.837 1116.74,595.537" fill="#d000d0" stroke="#32cd32" stroke-width="0.9"/>
<rect x="1108.84" y="660.3" width="7.9" height="72.20000000000005" fill="#e0ffff" stroke="#32cd32" stroke-width="1.1"/>
<rect x="1108.84" y="641.6" width="7.9" height="18.7" fill="#90ee90" stroke="#32cd32" stroke-width="1.1"/>
<rect x="1108.84" y="623.54" width="7.9" height="18.06" fill="#ffffe0" stroke="#1a1a1a" stroke-width="1.2"/>
<rect x="1108.84" y="595.54" width="7.9" height="28" fill="#ff00ff" stroke="#32cd32" stroke-width="1.1"/>
<polygon points="1124.82,599.2098100000001 1128.62,597.50981 1128.62,625.50981 1124.82,627.2098100000001" fill="#c000c0" stroke="#32cd32" stroke-width="0.8"/>
<polygon points="1124.82,627.2098100000001 1128.62,625.50981 1128.62,639.9 1124.82,641.6" fill="#707060"/>
<polygon points="1124.82,641.6 1128.62,639.9 1128.62,730.8 1124.82,732.5" fill="#5cc85c"/>
<polygon points="1116.92,599.2098100000001 1120.72,597.50981 1128.62,597.50981 1124.82,599.2098100000001" fill="#d000d0" stroke="#32cd32" stroke-width="0.9"/>
<rect x="1116.92" y="660.3" width="7.9" height="72.20000000000005" fill="#e0ffff" stroke="#32cd32" stroke-width="1.1"/>
<rect x="1116.92" y="641.6" width="7.9" height="18.7" fill="#90ee90" stroke="#32cd32" stroke-width="1.1"/>
<rect x="1116.92" y="627.21" width="7.9" height="14.39" fill="#ffffe0" stroke="#1a1a1a" stroke-width="1.2"/>
<rect x="1116.92" y="599.21" width="7.9" height="28" fill="#ff00ff" stroke="#32cd32" stroke-width="1.1"/>
<polygon points="1132.90,603.82591 1136.70,602.12591 1136.70,630.12591 1132.90,631.82591" fill="#c000c0" stroke="#32cd32" stroke-width="0.8"/>
<polygon points="1132.90,631.82591 1136.70,630.12591 1136.70,639.9 1132.90,641.6" fill="#707060"/>
<polygon points="1132.90,641.6 1136.70,639.9 1136.70,730.8 1132.90,732.5" fill="#5cc85c"/>
<polygon points="1125.00,603.82591 1128.80,602.12591 1136.70,602.12591 1132.90,603.82591" fill="#d000d0" stroke="#32cd32" stroke-width="0.9"/>
<rect x="1125.00" y="660.3" width="7.9" height="72.20000000000005" fill="#e0ffff" stroke="#32cd32" stroke-width="1.1"/>
<rect x="1125.00" y="641.6" width="7.9" height="18.7" fill="#90ee90" stroke="#32cd32" stroke-width="1.1"/>
<rect x="1125.00" y="631.83" width="7.9" height="9.77" fill="#ffffe0" stroke="#32cd32" stroke-width="1.2"/>
<rect x="1125.00" y="603.83" width="7.9" height="28" fill="#ff00ff" stroke="#32cd32" stroke-width="1.1"/>
<polygon points="1140.98,589.47586 1144.78,587.77586 1144.78,615.77586 1140.98,617.47586" fill="#c000c0" stroke="#32cd32" stroke-width="0.8"/>
<polygon points="1140.98,617.47586 1144.78,615.77586 1144.78,639.9 1140.98,641.6" fill="#707060"/>
<polygon points="1140.98,641.6 1144.78,639.9 1144.78,730.8 1140.98,732.5" fill="#5cc85c"/>
<polygon points="1133.08,589.47586 1136.88,587.77586 1144.78,587.77586 1140.98,589.47586" fill="#d000d0" stroke="#32cd32" stroke-width="0.9"/>
<rect x="1133.08" y="660.3" width="7.9" height="72.20000000000005" fill="#e0ffff" stroke="#32cd32" stroke-width="1.1"/>
<rect x="1133.08" y="641.6" width="7.9" height="18.7" fill="#90ee90" stroke="#32cd32" stroke-width="1.1"/>
<rect x="1133.08" y="617.48" width="7.9" height="24.12" fill="#ffffe0" stroke="#1a1a1a" stroke-width="1.2"/>
<rect x="1133.08" y="589.48" width="7.9" height="28" fill="#ff00ff" stroke="#32cd32" stroke-width="1.1"/>
<polygon points="1149.06,595.03525 1152.86,593.33525 1152.86,621.33525 1149.06,623.03525" fill="#c000c0" stroke="#32cd32" stroke-width="0.8"/>
<polygon points="1149.06,623.03525 1152.86,621.33525 1152.86,639.9 1149.06,641.6" fill="#707060"/>
<polygon points="1149.06,641.6 1152.86,639.9 1152.86,730.8 1149.06,732.5" fill="#5cc85c"/>
<polygon points="1141.16,595.03525 1144.96,593.33525 1152.86,593.33525 1149.06,595.03525" fill="#d000d0" stroke="#32cd32" stroke-width="0.9"/>
<rect x="1141.16" y="660.3" width="7.9" height="72.20000000000005" fill="#e0ffff" stroke="#32cd32" stroke-width="1.1"/>
<rect x="1141.16" y="641.6" width="7.9" height="18.7" fill="#90ee90" stroke="#32cd32" stroke-width="1.1"/>
<rect x="1141.16" y="623.04" width="7.9" height="18.56" fill="#ffffe0" stroke="#1a1a1a" stroke-width="1.2"/>
<rect x="1141.16" y="595.04" width="7.9" height="28" fill="#ff00ff" stroke="#32cd32" stroke-width="1.1"/>
<polygon points="1157.14,595.537 1160.94,593.837 1160.94,621.837 1157.14,623.537" fill="#c000c0" stroke="#32cd32" stroke-width="0.8"/>
<polygon points="1157.14,623.537 1160.94,621.837 1160.94,639.9 1157.14,641.6" fill="#707060"/>
<polygon points="1157.14,641.6 1160.94,639.9 1160.94,730.8 1157.14,732.5" fill="#5cc85c"/>
<polygon points="1149.24,595.537 1153.04,593.837 1160.94,593.837 1157.14,595.537" fill="#d000d0" stroke="#32cd32" stroke-width="0.9"/>
<rect x="1149.24" y="660.3" width="7.9" height="72.20000000000005" fill="#e0ffff" stroke="#32cd32" stroke-width="1.1"/>
<rect x="1149.24" y="641.6" width="7.9" height="18.7" fill="#90ee90" stroke="#32cd32" stroke-width="1.1"/>
<rect x="1149.24" y="623.54" width="7.9" height="18.06" fill="#ffffe0" stroke="#1a1a1a" stroke-width="1.2"/>
<rect x="1149.24" y="595.54" width="7.9" height="28" fill="#ff00ff" stroke="#32cd32" stroke-width="1.1"/>
<polygon points="1165.22,599.2098100000001 1169.02,597.50981 1169.02,625.50981 1165.22,627.2098100000001" fill="#c000c0" stroke="#32cd32" stroke-width="0.8"/>
<polygon points="1165.22,627.2098100000001 1169.02,625.50981 1169.02,639.9 1165.22,641.6" fill="#707060"/>
<polygon points="1165.22,641.6 1169.02,639.9 1169.02,730.8 1165.22,732.5" fill="#5cc85c"/>
<polygon points="1157.32,599.2098100000001 1161.12,597.50981 1169.02,597.50981 1165.22,599.2098100000001" fill="#d000d0" stroke="#32cd32" stroke-width="0.9"/>
<rect x="1157.32" y="660.3" width="7.9" height="72.20000000000005" fill="#e0ffff" stroke="#32cd32" stroke-width="1.1"/>
<rect x="1157.32" y="641.6" width="7.9" height="18.7" fill="#90ee90" stroke="#32cd32" stroke-width="1.1"/>
<rect x="1157.32" y="627.21" width="7.9" height="14.39" fill="#ffffe0" stroke="#1a1a1a" stroke-width="1.2"/>
<rect x="1157.32" y="599.21" width="7.9" height="28" fill="#ff00ff" stroke="#32cd32" stroke-width="1.1"/>
<polygon points="1173.30,603.82591 1177.10,602.12591 1177.10,630.12591 1173.30,631.82591" fill="#c000c0" stroke="#32cd32" stroke-width="0.8"/>
<polygon points="1173.30,631.82591 1177.10,630.12591 1177.10,639.9 1173.30,641.6" fill="#707060"/>
<polygon points="1173.30,641.6 1177.10,639.9 1177.10,730.8 1173.30,732.5" fill="#5cc85c"/>
<polygon points="1165.40,603.82591 1169.20,602.12591 1177.10,602.12591 1173.30,603.82591" fill="#d000d0" stroke="#32cd32" stroke-width="0.9"/>
<rect x="1165.40" y="660.3" width="7.9" height="72.20000000000005" fill="#e0ffff" stroke="#32cd32" stroke-width="1.1"/>
<rect x="1165.40" y="641.6" width="7.9" height="18.7" fill="#90ee90" stroke="#32cd32" stroke-width="1.1"/>
<rect x="1165.40" y="631.83" width="7.9" height="9.77" fill="#ffffe0" stroke="#32cd32" stroke-width="1.2"/>
<rect x="1165.40" y="603.83" width="7.9" height="28" fill="#ff00ff" stroke="#32cd32" stroke-width="1.1"/>
<polygon points="1181.38,590.8406200000001 1185.18,589.14062 1185.18,617.14062 1181.38,618.8406200000001" fill="#c000c0" stroke="#32cd32" stroke-width="0.8"/>
<polygon points="1181.38,618.8406200000001 1185.18,617.14062 1185.18,639.9 1181.38,641.6" fill="#707060"/>
<polygon points="1181.38,641.6 1185.18,639.9 1185.18,730.8 1181.38,732.5" fill="#5cc85c"/>
<polygon points="1173.48,590.8406200000001 1177.28,589.14062 1185.18,589.14062 1181.38,590.8406200000001" fill="#d000d0" stroke="#32cd32" stroke-width="0.9"/>
<rect x="1173.48" y="660.3" width="7.9" height="72.20000000000005" fill="#e0ffff" stroke="#32cd32" stroke-width="1.1"/>
<rect x="1173.48" y="641.6" width="7.9" height="18.7" fill="#90ee90" stroke="#32cd32" stroke-width="1.1"/>
<rect x="1173.48" y="618.84" width="7.9" height="22.76" fill="#ffffe0" stroke="#1a1a1a" stroke-width="1.2"/>
<rect x="1173.48" y="590.84" width="7.9" height="28" fill="#ff00ff" stroke="#32cd32" stroke-width="1.1"/>
<polygon points="1189.46,595.03525 1193.26,593.33525 1193.26,621.33525 1189.46,623.03525" fill="#c000c0" stroke="#32cd32" stroke-width="0.8"/>
<polygon points="1189.46,623.03525 1193.26,621.33525 1193.26,639.9 1189.46,641.6" fill="#707060"/>
<polygon points="1189.46,641.6 1193.26,639.9 1193.26,730.8 1189.46,732.5" fill="#5cc85c"/>
<polygon points="1181.56,595.03525 1185.36,593.33525 1193.26,593.33525 1189.46,595.03525" fill="#d000d0" stroke="#32cd32" stroke-width="0.9"/>
<rect x="1181.56" y="660.3" width="7.9" height="72.20000000000005" fill="#e0ffff" stroke="#32cd32" stroke-width="1.1"/>
<rect x="1181.56" y="641.6" width="7.9" height="18.7" fill="#90ee90" stroke="#32cd32" stroke-width="1.1"/>
<rect x="1181.56" y="623.04" width="7.9" height="18.56" fill="#ffffe0" stroke="#1a1a1a" stroke-width="1.2"/>
<rect x="1181.56" y="595.04" width="7.9" height="28" fill="#ff00ff" stroke="#32cd32" stroke-width="1.1"/>
<polygon points="1197.54,595.537 1201.34,593.837 1201.34,621.837 1197.54,623.537" fill="#c000c0" stroke="#32cd32" stroke-width="0.8"/>
<polygon points="1197.54,623.537 1201.34,621.837 1201.34,639.9 1197.54,641.6" fill="#707060"/>
<polygon points="1197.54,641.6 1201.34,639.9 1201.34,730.8 1197.54,732.5" fill="#5cc85c"/>
<polygon points="1189.64,595.537 1193.44,593.837 1201.34,593.837 1197.54,595.537" fill="#d000d0" stroke="#32cd32" stroke-width="0.9"/>
<rect x="1189.64" y="660.3" width="7.9" height="72.20000000000005" fill="#e0ffff" stroke="#32cd32" stroke-width="1.1"/>
<rect x="1189.64" y="641.6" width="7.9" height="18.7" fill="#90ee90" stroke="#32cd32" stroke-width="1.1"/>
<rect x="1189.64" y="623.54" width="7.9" height="18.06" fill="#ffffe0" stroke="#1a1a1a" stroke-width="1.2"/>
<rect x="1189.64" y="595.54" width="7.9" height="28" fill="#ff00ff" stroke="#32cd32" stroke-width="1.1"/>
<polygon points="1205.62,599.2098100000001 1209.42,597.50981 1209.42,625.50981 1205.62,627.2098100000001" fill="#c000c0" stroke="#32cd32" stroke-width="0.8"/>
<polygon points="1205.62,627.2098100000001 1209.42,625.50981 1209.42,639.9 1205.62,641.6" fill="#707060"/>
<polygon points="1205.62,641.6 1209.42,639.9 1209.42,730.8 1205.62,732.5" fill="#5cc85c"/>
<polygon points="1197.72,599.2098100000001 1201.52,597.50981 1209.42,597.50981 1205.62,599.2098100000001" fill="#d000d0" stroke="#32cd32" stroke-width="0.9"/>
<rect x="1197.72" y="660.3" width="7.9" height="72.20000000000005" fill="#e0ffff" stroke="#32cd32" stroke-width="1.1"/>
<rect x="1197.72" y="641.6" width="7.9" height="18.7" fill="#90ee90" stroke="#32cd32" stroke-width="1.1"/>
<rect x="1197.72" y="627.21" width="7.9" height="14.39" fill="#ffffe0" stroke="#1a1a1a" stroke-width="1.2"/>
<rect x="1197.72" y="599.21" width="7.9" height="28" fill="#ff00ff" stroke="#32cd32" stroke-width="1.1"/>
<polygon points="1213.70,603.82591 1217.50,602.12591 1217.50,630.12591 1213.70,631.82591" fill="#c000c0" stroke="#32cd32" stroke-width="0.8"/>
<polygon points="1213.70,631.82591 1217.50,630.12591 1217.50,639.9 1213.70,641.6" fill="#707060"/>
<polygon points="1213.70,641.6 1217.50,639.9 1217.50,730.8 1213.70,732.5" fill="#5cc85c"/>
<polygon points="1205.80,603.82591 1209.60,602.12591 1217.50,602.12591 1213.70,603.82591" fill="#d000d0" stroke="#32cd32" stroke-width="0.9"/>
<rect x="1205.80" y="660.3" width="7.9" height="72.20000000000005" fill="#e0ffff" stroke="#32cd32" stroke-width="1.1"/>
<rect x="1205.80" y="641.6" width="7.9" height="18.7" fill="#90ee90" stroke="#32cd32" stroke-width="1.1"/>
<rect x="1205.80" y="631.83" width="7.9" height="9.77" fill="#ffffe0" stroke="#32cd32" stroke-width="1.2"/>
<rect x="1205.80" y="603.83" width="7.9" height="28" fill="#ff00ff" stroke="#32cd32" stroke-width="1.1"/>
<polygon points="1221.78,590.8406200000001 1225.58,589.14062 1225.58,617.14062 1221.78,618.8406200000001" fill="#c000c0" stroke="#32cd32" stroke-width="0.8"/>
<polygon points="1221.78,618.8406200000001 1225.58,617.14062 1225.58,639.9 1221.78,641.6" fill="#707060"/>
<polygon points="1221.78,641.6 1225.58,639.9 1225.58,730.8 1221.78,732.5" fill="#5cc85c"/>
<polygon points="1213.88,590.8406200000001 1217.68,589.14062 1225.58,589.14062 1221.78,590.8406200000001" fill="#d000d0" stroke="#32cd32" stroke-width="0.9"/>
<rect x="1213.88" y="660.3" width="7.9" height="72.20000000000005" fill="#e0ffff" stroke="#32cd32" stroke-width="1.1"/>
<rect x="1213.88" y="641.6" width="7.9" height="18.7" fill="#90ee90" stroke="#32cd32" stroke-width="1.1"/>
<rect x="1213.88" y="618.84" width="7.9" height="22.76" fill="#ffffe0" stroke="#1a1a1a" stroke-width="1.2"/>
<rect x="1213.88" y="590.84" width="7.9" height="28" fill="#ff00ff" stroke="#32cd32" stroke-width="1.1"/>
<polygon points="1229.86,595.03525 1233.66,593.33525 1233.66,621.33525 1229.86,623.03525" fill="#c000c0" stroke="#32cd32" stroke-width="0.8"/>
<polygon points="1229.86,623.03525 1233.66,621.33525 1233.66,639.9 1229.86,641.6" fill="#707060"/>
<polygon points="1229.86,641.6 1233.66,639.9 1233.66,730.8 1229.86,732.5" fill="#5cc85c"/>
<polygon points="1221.96,595.03525 1225.76,593.33525 1233.66,593.33525 1229.86,595.03525" fill="#d000d0" stroke="#32cd32" stroke-width="0.9"/>
<rect x="1221.96" y="660.3" width="7.9" height="72.20000000000005" fill="#e0ffff" stroke="#32cd32" stroke-width="1.1"/>
<rect x="1221.96" y="641.6" width="7.9" height="18.7" fill="#90ee90" stroke="#32cd32" stroke-width="1.1"/>
<rect x="1221.96" y="623.04" width="7.9" height="18.56" fill="#ffffe0" stroke="#1a1a1a" stroke-width="1.2"/>
<rect x="1221.96" y="595.04" width="7.9" height="28" fill="#ff00ff" stroke="#32cd32" stroke-width="1.1"/>
<polygon points="1237.94,595.537 1241.74,593.837 1241.74,621.837 1237.94,623.537" fill="#c000c0" stroke="#32cd32" stroke-width="0.8"/>
<polygon points="1237.94,623.537 1241.74,621.837 1241.74,639.9 1237.94,641.6" fill="#707060"/>
<polygon points="1237.94,641.6 1241.74,639.9 1241.74,730.8 1237.94,732.5" fill="#5cc85c"/>
<polygon points="1230.04,595.537 1233.84,593.837 1241.74,593.837 1237.94,595.537" fill="#d000d0" stroke="#32cd32" stroke-width="0.9"/>
<rect x="1230.04" y="660.3" width="7.9" height="72.20000000000005" fill="#e0ffff" stroke="#32cd32" stroke-width="1.1"/>
<rect x="1230.04" y="641.6" width="7.9" height="18.7" fill="#90ee90" stroke="#32cd32" stroke-width="1.1"/>
<rect x="1230.04" y="623.54" width="7.9" height="18.06" fill="#ffffe0" stroke="#1a1a1a" stroke-width="1.2"/>
<rect x="1230.04" y="595.54" width="7.9" height="28" fill="#ff00ff" stroke="#32cd32" stroke-width="1.1"/>
<polygon points="1246.02,599.2098100000001 1249.82,597.50981 1249.82,625.50981 1246.02,627.2098100000001" fill="#c000c0" stroke="#32cd32" stroke-width="0.8"/>
<polygon points="1246.02,627.2098100000001 1249.82,625.50981 1249.82,639.9 1246.02,641.6" fill="#707060"/>
<polygon points="1246.02,641.6 1249.82,639.9 1249.82,730.8 1246.02,732.5" fill="#5cc85c"/>
<polygon points="1238.12,599.2098100000001 1241.92,597.50981 1249.82,597.50981 1246.02,599.2098100000001" fill="#d000d0" stroke="#32cd32" stroke-width="0.9"/>
<rect x="1238.12" y="660.3" width="7.9" height="72.20000000000005" fill="#e0ffff" stroke="#32cd32" stroke-width="1.1"/>
<rect x="1238.12" y="641.6" width="7.9" height="18.7" fill="#90ee90" stroke="#32cd32" stroke-width="1.1"/>
<rect x="1238.12" y="627.21" width="7.9" height="14.39" fill="#ffffe0" stroke="#1a1a1a" stroke-width="1.2"/>
<rect x="1238.12" y="599.21" width="7.9" height="28" fill="#ff00ff" stroke="#32cd32" stroke-width="1.1"/>
<polygon points="1254.10,603.82591 1257.90,602.12591 1257.90,630.12591 1254.10,631.82591" fill="#c000c0" stroke="#32cd32" stroke-width="0.8"/>
<polygon points="1254.10,631.82591 1257.90,630.12591 1257.90,639.9 1254.10,641.6" fill="#707060"/>
<polygon points="1254.10,641.6 1257.90,639.9 1257.90,730.8 1254.10,732.5" fill="#5cc85c"/>
<polygon points="1246.20,603.82591 1250.00,602.12591 1257.90,602.12591 1254.10,603.82591" fill="#d000d0" stroke="#32cd32" stroke-width="0.9"/>
<rect x="1246.20" y="660.3" width="7.9" height="72.20000000000005" fill="#e0ffff" stroke="#32cd32" stroke-width="1.1"/>
<rect x="1246.20" y="641.6" width="7.9" height="18.7" fill="#90ee90" stroke="#32cd32" stroke-width="1.1"/>
<rect x="1246.20" y="631.83" width="7.9" height="9.77" fill="#ffffe0" stroke="#32cd32" stroke-width="1.2"/>
<rect x="1246.20" y="603.83" width="7.9" height="28" fill="#ff00ff" stroke="#32cd32" stroke-width="1.1"/>
<polygon points="1262.18,593.34937 1265.98,591.64937 1265.98,619.64937 1262.18,621.34937" fill="#c000c0" stroke="#32cd32" stroke-width="0.8"/>
<polygon points="1262.18,621.34937 1265.98,619.64937 1265.98,639.9 1262.18,641.6" fill="#707060"/>
<polygon points="1262.18,641.6 1265.98,639.9 1265.98,730.8 1262.18,732.5" fill="#5cc85c"/>
<polygon points="1254.28,593.34937 1258.08,591.64937 1265.98,591.64937 1262.18,593.34937" fill="#d000d0" stroke="#32cd32" stroke-width="0.9"/>
<rect x="1254.28" y="660.3" width="7.9" height="72.20000000000005" fill="#e0ffff" stroke="#32cd32" stroke-width="1.1"/>
<rect x="1254.28" y="641.6" width="7.9" height="18.7" fill="#90ee90" stroke="#32cd32" stroke-width="1.1"/>
<rect x="1254.28" y="621.35" width="7.9" height="20.25" fill="#ffffe0" stroke="#1a1a1a" stroke-width="1.2"/>
<rect x="1254.28" y="593.35" width="7.9" height="28" fill="#ff00ff" stroke="#32cd32" stroke-width="1.1"/>
<polygon points="1270.26,595.03525 1274.06,593.33525 1274.06,621.33525 1270.26,623.03525" fill="#c000c0" stroke="#32cd32" stroke-width="0.8"/>
<polygon points="1270.26,623.03525 1274.06,621.33525 1274.06,639.9 1270.26,641.6" fill="#707060"/>
<polygon points="1270.26,641.6 1274.06,639.9 1274.06,730.8 1270.26,732.5" fill="#5cc85c"/>
<polygon points="1262.36,595.03525 1266.16,593.33525 1274.06,593.33525 1270.26,595.03525" fill="#d000d0" stroke="#32cd32" stroke-width="0.9"/>
<rect x="1262.36" y="660.3" width="7.9" height="72.20000000000005" fill="#e0ffff" stroke="#32cd32" stroke-width="1.1"/>
<rect x="1262.36" y="641.6" width="7.9" height="18.7" fill="#90ee90" stroke="#32cd32" stroke-width="1.1"/>
<rect x="1262.36" y="623.04" width="7.9" height="18.56" fill="#ffffe0" stroke="#1a1a1a" stroke-width="1.2"/>
<rect x="1262.36" y="595.04" width="7.9" height="28" fill="#ff00ff" stroke="#32cd32" stroke-width="1.1"/>
<polygon points="1278.34,595.537 1282.14,593.837 1282.14,621.837 1278.34,623.537" fill="#c000c0" stroke="#32cd32" stroke-width="0.8"/>
<polygon points="1278.34,623.537 1282.14,621.837 1282.14,639.9 1278.34,641.6" fill="#707060"/>
<polygon points="1278.34,641.6 1282.14,639.9 1282.14,730.8 1278.34,732.5" fill="#5cc85c"/>
<polygon points="1270.44,595.537 1274.24,593.837 1282.14,593.837 1278.34,595.537" fill="#d000d0" stroke="#32cd32" stroke-width="0.9"/>
<rect x="1270.44" y="660.3" width="7.9" height="72.20000000000005" fill="#e0ffff" stroke="#32cd32" stroke-width="1.1"/>
<rect x="1270.44" y="641.6" width="7.9" height="18.7" fill="#90ee90" stroke="#32cd32" stroke-width="1.1"/>
<rect x="1270.44" y="623.54" width="7.9" height="18.06" fill="#ffffe0" stroke="#1a1a1a" stroke-width="1.2"/>
<rect x="1270.44" y="595.54" width="7.9" height="28" fill="#ff00ff" stroke="#32cd32" stroke-width="1.1"/>
<polygon points="1286.42,599.2098100000001 1290.22,597.50981 1290.22,625.50981 1286.42,627.2098100000001" fill="#c000c0" stroke="#32cd32" stroke-width="0.8"/>
<polygon points="1286.42,627.2098100000001 1290.22,625.50981 1290.22,639.9 1286.42,641.6" fill="#707060"/>
<polygon points="1286.42,641.6 1290.22,639.9 1290.22,730.8 1286.42,732.5" fill="#5cc85c"/>
<polygon points="1278.52,599.2098100000001 1282.32,597.50981 1290.22,597.50981 1286.42,599.2098100000001" fill="#d000d0" stroke="#32cd32" stroke-width="0.9"/>
<rect x="1278.52" y="660.3" width="7.9" height="72.20000000000005" fill="#e0ffff" stroke="#32cd32" stroke-width="1.1"/>
<rect x="1278.52" y="641.6" width="7.9" height="18.7" fill="#90ee90" stroke="#32cd32" stroke-width="1.1"/>
<rect x="1278.52" y="627.21" width="7.9" height="14.39" fill="#ffffe0" stroke="#1a1a1a" stroke-width="1.2"/>
<rect x="1278.52" y="599.21" width="7.9" height="28" fill="#ff00ff" stroke="#32cd32" stroke-width="1.1"/>
<polygon points="1294.50,603.82591 1298.30,602.12591 1298.30,630.12591 1294.50,631.82591" fill="#c000c0" stroke="#32cd32" stroke-width="0.8"/>
<polygon points="1294.50,631.82591 1298.30,630.12591 1298.30,639.9 1294.50,641.6" fill="#707060"/>
<polygon points="1294.50,641.6 1298.30,639.9 1298.30,730.8 1294.50,732.5" fill="#5cc85c"/>
<polygon points="1286.60,603.82591 1290.40,602.12591 1298.30,602.12591 1294.50,603.82591" fill="#d000d0" stroke="#32cd32" stroke-width="0.9"/>
<rect x="1286.60" y="660.3" width="7.9" height="72.20000000000005" fill="#e0ffff" stroke="#32cd32" stroke-width="1.1"/>
<rect x="1286.60" y="641.6" width="7.9" height="18.7" fill="#90ee90" stroke="#32cd32" stroke-width="1.1"/>
<rect x="1286.60" y="631.83" width="7.9" height="9.77" fill="#ffffe0" stroke="#32cd32" stroke-width="1.2"/>
<rect x="1286.60" y="603.83" width="7.9" height="28" fill="#ff00ff" stroke="#32cd32" stroke-width="1.1"/>
<polygon points="1302.58,593.34937 1306.38,591.64937 1306.38,619.64937 1302.58,621.34937" fill="#c000c0" stroke="#32cd32" stroke-width="0.8"/>
<polygon points="1302.58,621.34937 1306.38,619.64937 1306.38,639.9 1302.58,641.6" fill="#707060"/>
<polygon points="1302.58,641.6 1306.38,639.9 1306.38,730.8 1302.58,732.5" fill="#5cc85c"/>
<polygon points="1294.68,593.34937 1298.48,591.64937 1306.38,591.64937 1302.58,593.34937" fill="#d000d0" stroke="#32cd32" stroke-width="0.9"/>
<rect x="1294.68" y="660.3" width="7.9" height="72.20000000000005" fill="#e0ffff" stroke="#32cd32" stroke-width="1.1"/>
<rect x="1294.68" y="641.6" width="7.9" height="18.7" fill="#90ee90" stroke="#32cd32" stroke-width="1.1"/>
<rect x="1294.68" y="621.35" width="7.9" height="20.25" fill="#ffffe0" stroke="#1a1a1a" stroke-width="1.2"/>
<rect x="1294.68" y="593.35" width="7.9" height="28" fill="#ff00ff" stroke="#32cd32" stroke-width="1.1"/>
<polygon points="1310.66,595.03525 1314.46,593.33525 1314.46,621.33525 1310.66,623.03525" fill="#c000c0" stroke="#32cd32" stroke-width="0.8"/>
<polygon points="1310.66,623.03525 1314.46,621.33525 1314.46,639.9 1310.66,641.6" fill="#707060"/>
<polygon points="1310.66,641.6 1314.46,639.9 1314.46,730.8 1310.66,732.5" fill="#5cc85c"/>
<polygon points="1302.76,595.03525 1306.56,593.33525 1314.46,593.33525 1310.66,595.03525" fill="#d000d0" stroke="#32cd32" stroke-width="0.9"/>
<rect x="1302.76" y="660.3" width="7.9" height="72.20000000000005" fill="#e0ffff" stroke="#32cd32" stroke-width="1.1"/>
<rect x="1302.76" y="641.6" width="7.9" height="18.7" fill="#90ee90" stroke="#32cd32" stroke-width="1.1"/>
<rect x="1302.76" y="623.04" width="7.9" height="18.56" fill="#ffffe0" stroke="#1a1a1a" stroke-width="1.2"/>
<rect x="1302.76" y="595.04" width="7.9" height="28" fill="#ff00ff" stroke="#32cd32" stroke-width="1.1"/>
<polygon points="1318.74,595.537 1322.54,593.837 1322.54,621.837 1318.74,623.537" fill="#c000c0" stroke="#32cd32" stroke-width="0.8"/>
<polygon points="1318.74,623.537 1322.54,621.837 1322.54,639.9 1318.74,641.6" fill="#707060"/>
<polygon points="1318.74,641.6 1322.54,639.9 1322.54,730.8 1318.74,732.5" fill="#5cc85c"/>
<polygon points="1310.84,595.537 1314.64,593.837 1322.54,593.837 1318.74,595.537" fill="#d000d0" stroke="#32cd32" stroke-width="0.9"/>
<rect x="1310.84" y="660.3" width="7.9" height="72.20000000000005" fill="#e0ffff" stroke="#32cd32" stroke-width="1.1"/>
<rect x="1310.84" y="641.6" width="7.9" height="18.7" fill="#90ee90" stroke="#32cd32" stroke-width="1.1"/>
<rect x="1310.84" y="623.54" width="7.9" height="18.06" fill="#ffffe0" stroke="#1a1a1a" stroke-width="1.2"/>
<rect x="1310.84" y="595.54" width="7.9" height="28" fill="#ff00ff" stroke="#32cd32" stroke-width="1.1"/>
<polygon points="1326.82,599.2098100000001 1330.62,597.50981 1330.62,625.50981 1326.82,627.2098100000001" fill="#c000c0" stroke="#32cd32" stroke-width="0.8"/>
<polygon points="1326.82,627.2098100000001 1330.62,625.50981 1330.62,639.9 1326.82,641.6" fill="#707060"/>
<polygon points="1326.82,641.6 1330.62,639.9 1330.62,730.8 1326.82,732.5" fill="#5cc85c"/>
<polygon points="1318.92,599.2098100000001 1322.72,597.50981 1330.62,597.50981 1326.82,599.2098100000001" fill="#d000d0" stroke="#32cd32" stroke-width="0.9"/>
<rect x="1318.92" y="660.3" width="7.9" height="72.20000000000005" fill="#e0ffff" stroke="#32cd32" stroke-width="1.1"/>
<rect x="1318.92" y="641.6" width="7.9" height="18.7" fill="#90ee90" stroke="#32cd32" stroke-width="1.1"/>
<rect x="1318.92" y="627.21" width="7.9" height="14.39" fill="#ffffe0" stroke="#1a1a1a" stroke-width="1.2"/>
<rect x="1318.92" y="599.21" width="7.9" height="28" fill="#ff00ff" stroke="#32cd32" stroke-width="1.1"/>
<polygon points="1334.90,603.82591 1338.70,602.12591 1338.70,630.12591 1334.90,631.82591" fill="#c000c0" stroke="#32cd32" stroke-width="0.8"/>
<polygon points="1334.90,631.82591 1338.70,630.12591 1338.70,639.9 1334.90,641.6" fill="#707060"/>
<polygon points="1334.90,641.6 1338.70,639.9 1338.70,730.8 1334.90,732.5" fill="#5cc85c"/>
<polygon points="1327.00,603.82591 1330.80,602.12591 1338.70,602.12591 1334.90,603.82591" fill="#d000d0" stroke="#32cd32" stroke-width="0.9"/>
<rect x="1327.00" y="660.3" width="7.9" height="72.20000000000005" fill="#e0ffff" stroke="#32cd32" stroke-width="1.1"/>
<rect x="1327.00" y="641.6" width="7.9" height="18.7" fill="#90ee90" stroke="#32cd32" stroke-width="1.1"/>
<rect x="1327.00" y="631.83" width="7.9" height="9.77" fill="#ffffe0" stroke="#32cd32" stroke-width="1.2"/>
<rect x="1327.00" y="603.83" width="7.9" height="28" fill="#ff00ff" stroke="#32cd32" stroke-width="1.1"/>
<polygon points="1342.98,590.8406200000001 1346.78,589.14062 1346.78,617.14062 1342.98,618.8406200000001" fill="#c000c0" stroke="#32cd32" stroke-width="0.8"/>
<polygon points="1342.98,618.8406200000001 1346.78,617.14062 1346.78,639.9 1342.98,641.6" fill="#707060"/>
<polygon points="1342.98,641.6 1346.78,639.9 1346.78,730.8 1342.98,732.5" fill="#5cc85c"/>
<polygon points="1335.08,590.8406200000001 1338.88,589.14062 1346.78,589.14062 1342.98,590.8406200000001" fill="#d000d0" stroke="#32cd32" stroke-width="0.9"/>
<rect x="1335.08" y="660.3" width="7.9" height="72.20000000000005" fill="#e0ffff" stroke="#32cd32" stroke-width="1.1"/>
<rect x="1335.08" y="641.6" width="7.9" height="18.7" fill="#90ee90" stroke="#32cd32" stroke-width="1.1"/>
<rect x="1335.08" y="618.84" width="7.9" height="22.76" fill="#ffffe0" stroke="#1a1a1a" stroke-width="1.2"/>
<rect x="1335.08" y="590.84" width="7.9" height="28" fill="#ff00ff" stroke="#32cd32" stroke-width="1.1"/>
<polygon points="1351.06,595.03525 1354.86,593.33525 1354.86,621.33525 1351.06,623.03525" fill="#c000c0" stroke="#32cd32" stroke-width="0.8"/>
<polygon points="1351.06,623.03525 1354.86,621.33525 1354.86,639.9 1351.06,641.6" fill="#707060"/>
<polygon points="1351.06,641.6 1354.86,639.9 1354.86,730.8 1351.06,732.5" fill="#5cc85c"/>
<polygon points="1343.16,595.03525 1346.96,593.33525 1354.86,593.33525 1351.06,595.03525" fill="#d000d0" stroke="#32cd32" stroke-width="0.9"/>
<rect x="1343.16" y="660.3" width="7.9" height="72.20000000000005" fill="#e0ffff" stroke="#32cd32" stroke-width="1.1"/>
<rect x="1343.16" y="641.6" width="7.9" height="18.7" fill="#90ee90" stroke="#32cd32" stroke-width="1.1"/>
<rect x="1343.16" y="623.04" width="7.9" height="18.56" fill="#ffffe0" stroke="#1a1a1a" stroke-width="1.2"/>
<rect x="1343.16" y="595.04" width="7.9" height="28" fill="#ff00ff" stroke="#32cd32" stroke-width="1.1"/>
<polygon points="1359.14,595.537 1362.94,593.837 1362.94,621.837 1359.14,623.537" fill="#c000c0" stroke="#32cd32" stroke-width="0.8"/>
<polygon points="1359.14,623.537 1362.94,621.837 1362.94,639.9 1359.14,641.6" fill="#707060"/>
<polygon points="1359.14,641.6 1362.94,639.9 1362.94,730.8 1359.14,732.5" fill="#5cc85c"/>
<polygon points="1351.24,595.537 1355.04,593.837 1362.94,593.837 1359.14,595.537" fill="#d000d0" stroke="#32cd32" stroke-width="0.9"/>
<rect x="1351.24" y="660.3" width="7.9" height="72.20000000000005" fill="#e0ffff" stroke="#32cd32" stroke-width="1.1"/>
<rect x="1351.24" y="641.6" width="7.9" height="18.7" fill="#90ee90" stroke="#32cd32" stroke-width="1.1"/>
<rect x="1351.24" y="623.54" width="7.9" height="18.06" fill="#ffffe0" stroke="#1a1a1a" stroke-width="1.2"/>
<rect x="1351.24" y="595.54" width="7.9" height="28" fill="#ff00ff" stroke="#32cd32" stroke-width="1.1"/>
<polygon points="1367.22,599.2098100000001 1371.02,597.50981 1371.02,625.50981 1367.22,627.2098100000001" fill="#c000c0" stroke="#32cd32" stroke-width="0.8"/>
<polygon points="1367.22,627.2098100000001 1371.02,625.50981 1371.02,639.9 1367.22,641.6" fill="#707060"/>
<polygon points="1367.22,641.6 1371.02,639.9 1371.02,730.8 1367.22,732.5" fill="#5cc85c"/>
<polygon points="1359.32,599.2098100000001 1363.12,597.50981 1371.02,597.50981 1367.22,599.2098100000001" fill="#d000d0" stroke="#32cd32" stroke-width="0.9"/>
<rect x="1359.32" y="660.3" width="7.9" height="72.20000000000005" fill="#e0ffff" stroke="#32cd32" stroke-width="1.1"/>
<rect x="1359.32" y="641.6" width="7.9" height="18.7" fill="#90ee90" stroke="#32cd32" stroke-width="1.1"/>
<rect x="1359.32" y="627.21" width="7.9" height="14.39" fill="#ffffe0" stroke="#1a1a1a" stroke-width="1.2"/>
<rect x="1359.32" y="599.21" width="7.9" height="28" fill="#ff00ff" stroke="#32cd32" stroke-width="1.1"/>
<polygon points="1375.30,603.82591 1379.10,602.12591 1379.10,630.12591 1375.30,631.82591" fill="#c000c0" stroke="#32cd32" stroke-width="0.8"/>
<polygon points="1375.30,631.82591 1379.10,630.12591 1379.10,639.9 1375.30,641.6" fill="#707060"/>
<polygon points="1375.30,641.6 1379.10,639.9 1379.10,730.8 1375.30,732.5" fill="#5cc85c"/>
<polygon points="1367.40,603.82591 1371.20,602.12591 1379.10,602.12591 1375.30,603.82591" fill="#d000d0" stroke="#32cd32" stroke-width="0.9"/>
<rect x="1367.40" y="660.3" width="7.9" height="72.20000000000005" fill="#e0ffff" stroke="#32cd32" stroke-width="1.1"/>
<rect x="1367.40" y="641.6" width="7.9" height="18.7" fill="#90ee90" stroke="#32cd32" stroke-width="1.1"/>
<rect x="1367.40" y="631.83" width="7.9" height="9.77" fill="#ffffe0" stroke="#32cd32" stroke-width="1.2"/>
<rect x="1367.40" y="603.83" width="7.9" height="28" fill="#ff00ff" stroke="#32cd32" stroke-width="1.1"/>
<polygon points="1383.38,593.34937 1387.18,591.64937 1387.18,619.64937 1383.38,621.34937" fill="#c000c0" stroke="#32cd32" stroke-width="0.8"/>
<polygon points="1383.38,621.34937 1387.18,619.64937 1387.18,639.9 1383.38,641.6" fill="#707060"/>
<polygon points="1383.38,641.6 1387.18,639.9 1387.18,730.8 1383.38,732.5" fill="#5cc85c"/>
<polygon points="1375.48,593.34937 1379.28,591.64937 1387.18,591.64937 1383.38,593.34937" fill="#d000d0" stroke="#32cd32" stroke-width="0.9"/>
<rect x="1375.48" y="660.3" width="7.9" height="72.20000000000005" fill="#e0ffff" stroke="#32cd32" stroke-width="1.1"/>
<rect x="1375.48" y="641.6" width="7.9" height="18.7" fill="#90ee90" stroke="#32cd32" stroke-width="1.1"/>
<rect x="1375.48" y="621.35" width="7.9" height="20.25" fill="#ffffe0" stroke="#1a1a1a" stroke-width="1.2"/>
<rect x="1375.48" y="593.35" width="7.9" height="28" fill="#ff00ff" stroke="#32cd32" stroke-width="1.1"/>
<polygon points="1391.46,595.03525 1395.26,593.33525 1395.26,621.33525 1391.46,623.03525" fill="#c000c0" stroke="#32cd32" stroke-width="0.8"/>
<polygon points="1391.46,623.03525 1395.26,621.33525 1395.26,639.9 1391.46,641.6" fill="#707060"/>
<polygon points="1391.46,641.6 1395.26,639.9 1395.26,730.8 1391.46,732.5" fill="#5cc85c"/>
<polygon points="1383.56,595.03525 1387.36,593.33525 1395.26,593.33525 1391.46,595.03525" fill="#d000d0" stroke="#32cd32" stroke-width="0.9"/>
<rect x="1383.56" y="660.3" width="7.9" height="72.20000000000005" fill="#e0ffff" stroke="#32cd32" stroke-width="1.1"/>
<rect x="1383.56" y="641.6" width="7.9" height="18.7" fill="#90ee90" stroke="#32cd32" stroke-width="1.1"/>
<rect x="1383.56" y="623.04" width="7.9" height="18.56" fill="#ffffe0" stroke="#1a1a1a" stroke-width="1.2"/>
<rect x="1383.56" y="595.04" width="7.9" height="28" fill="#ff00ff" stroke="#32cd32" stroke-width="1.1"/>
<polygon points="1399.54,595.537 1403.34,593.837 1403.34,621.837 1399.54,623.537" fill="#c000c0" stroke="#32cd32" stroke-width="0.8"/>
<polygon points="1399.54,623.537 1403.34,621.837 1403.34,639.9 1399.54,641.6" fill="#707060"/>
<polygon points="1399.54,641.6 1403.34,639.9 1403.34,730.8 1399.54,732.5" fill="#5cc85c"/>
<polygon points="1391.64,595.537 1395.44,593.837 1403.34,593.837 1399.54,595.537" fill="#d000d0" stroke="#32cd32" stroke-width="0.9"/>
<rect x="1391.64" y="660.3" width="7.9" height="72.20000000000005" fill="#e0ffff" stroke="#32cd32" stroke-width="1.1"/>
<rect x="1391.64" y="641.6" width="7.9" height="18.7" fill="#90ee90" stroke="#32cd32" stroke-width="1.1"/>
<rect x="1391.64" y="623.54" width="7.9" height="18.06" fill="#ffffe0" stroke="#1a1a1a" stroke-width="1.2"/>
<rect x="1391.64" y="595.54" width="7.9" height="28" fill="#ff00ff" stroke="#32cd32" stroke-width="1.1"/>
<polygon points="1407.62,599.2098100000001 1411.42,597.50981 1411.42,625.50981 1407.62,627.2098100000001" fill="#c000c0" stroke="#32cd32" stroke-width="0.8"/>
<polygon points="1407.62,627.2098100000001 1411.42,625.50981 1411.42,639.9 1407.62,641.6" fill="#707060"/>
<polygon points="1407.62,641.6 1411.42,639.9 1411.42,730.8 1407.62,732.5" fill="#5cc85c"/>
<polygon points="1399.72,599.2098100000001 1403.52,597.50981 1411.42,597.50981 1407.62,599.2098100000001" fill="#d000d0" stroke="#32cd32" stroke-width="0.9"/>
<rect x="1399.72" y="660.3" width="7.9" height="72.20000000000005" fill="#e0ffff" stroke="#32cd32" stroke-width="1.1"/>
<rect x="1399.72" y="641.6" width="7.9" height="18.7" fill="#90ee90" stroke="#32cd32" stroke-width="1.1"/>
<rect x="1399.72" y="627.21" width="7.9" height="14.39" fill="#ffffe0" stroke="#1a1a1a" stroke-width="1.2"/>
<rect x="1399.72" y="599.21" width="7.9" height="28" fill="#ff00ff" stroke="#32cd32" stroke-width="1.1"/>
<polygon points="1415.70,603.82591 1419.50,602.12591 1419.50,630.12591 1415.70,631.82591" fill="#c000c0" stroke="#32cd32" stroke-width="0.8"/>
<polygon points="1415.70,631.82591 1419.50,630.12591 1419.50,639.9 1415.70,641.6" fill="#707060"/>
<polygon points="1415.70,641.6 1419.50,639.9 1419.50,730.8 1415.70,732.5" fill="#5cc85c"/>
<polygon points="1407.80,603.82591 1411.60,602.12591 1419.50,602.12591 1415.70,603.82591" fill="#d000d0" stroke="#32cd32" stroke-width="0.9"/>
<rect x="1407.80" y="660.3" width="7.9" height="72.20000000000005" fill="#e0ffff" stroke="#32cd32" stroke-width="1.1"/>
<rect x="1407.80" y="641.6" width="7.9" height="18.7" fill="#90ee90" stroke="#32cd32" stroke-width="1.1"/>
<rect x="1407.80" y="631.83" width="7.9" height="9.77" fill="#ffffe0" stroke="#32cd32" stroke-width="1.2"/>
<rect x="1407.80" y="603.83" width="7.9" height="28" fill="#ff00ff" stroke="#32cd32" stroke-width="1.1"/>
<polygon points="1423.78,593.34937 1427.58,591.64937 1427.58,619.64937 1423.78,621.34937" fill="#c000c0" stroke="#32cd32" stroke-width="0.8"/>
<polygon points="1423.78,621.34937 1427.58,619.64937 1427.58,639.9 1423.78,641.6" fill="#707060"/>
<polygon points="1423.78,641.6 1427.58,639.9 1427.58,730.8 1423.78,732.5" fill="#5cc85c"/>
<polygon points="1415.88,593.34937 1419.68,591.64937 1427.58,591.64937 1423.78,593.34937" fill="#d000d0" stroke="#32cd32" stroke-width="0.9"/>
<rect x="1415.88" y="660.3" width="7.9" height="72.20000000000005" fill="#e0ffff" stroke="#32cd32" stroke-width="1.1"/>
<rect x="1415.88" y="641.6" width="7.9" height="18.7" fill="#90ee90" stroke="#32cd32" stroke-width="1.1"/>
<rect x="1415.88" y="621.35" width="7.9" height="20.25" fill="#ffffe0" stroke="#1a1a1a" stroke-width="1.2"/>
<rect x="1415.88" y="593.35" width="7.9" height="28" fill="#ff00ff" stroke="#32cd32" stroke-width="1.1"/>
<polygon points="1431.86,595.03525 1435.66,593.33525 1435.66,621.33525 1431.86,623.03525" fill="#c000c0" stroke="#32cd32" stroke-width="0.8"/>
<polygon points="1431.86,623.03525 1435.66,621.33525 1435.66,639.9 1431.86,641.6" fill="#707060"/>
<polygon points="1431.86,641.6 1435.66,639.9 1435.66,730.8 1431.86,732.5" fill="#5cc85c"/>
<polygon points="1423.96,595.03525 1427.76,593.33525 1435.66,593.33525 1431.86,595.03525" fill="#d000d0" stroke="#32cd32" stroke-width="0.9"/>
<rect x="1423.96" y="660.3" width="7.9" height="72.20000000000005" fill="#e0ffff" stroke="#32cd32" stroke-width="1.1"/>
<rect x="1423.96" y="641.6" width="7.9" height="18.7" fill="#90ee90" stroke="#32cd32" stroke-width="1.1"/>
<rect x="1423.96" y="623.04" width="7.9" height="18.56" fill="#ffffe0" stroke="#1a1a1a" stroke-width="1.2"/>
<rect x="1423.96" y="595.04" width="7.9" height="28" fill="#ff00ff" stroke="#32cd32" stroke-width="1.1"/>
<polygon points="1439.94,595.537 1443.74,593.837 1443.74,621.837 1439.94,623.537" fill="#c000c0" stroke="#32cd32" stroke-width="0.8"/>
<polygon points="1439.94,623.537 1443.74,621.837 1443.74,639.9 1439.94,641.6" fill="#707060"/>
<polygon points="1439.94,641.6 1443.74,639.9 1443.74,730.8 1439.94,732.5" fill="#5cc85c"/>
<polygon points="1432.04,595.537 1435.84,593.837 1443.74,593.837 1439.94,595.537" fill="#d000d0" stroke="#32cd32" stroke-width="0.9"/>
<rect x="1432.04" y="660.3" width="7.9" height="72.20000000000005" fill="#e0ffff" stroke="#32cd32" stroke-width="1.1"/>
<rect x="1432.04" y="641.6" width="7.9" height="18.7" fill="#90ee90" stroke="#32cd32" stroke-width="1.1"/>
<rect x="1432.04" y="623.54" width="7.9" height="18.06" fill="#ffffe0" stroke="#1a1a1a" stroke-width="1.2"/>
<rect x="1432.04" y="595.54" width="7.9" height="28" fill="#ff00ff" stroke="#32cd32" stroke-width="1.1"/>
<polygon points="1448.02,599.2098100000001 1451.82,597.50981 1451.82,625.50981 1448.02,627.2098100000001" fill="#c000c0" stroke="#32cd32" stroke-width="0.8"/>
<polygon points="1448.02,627.2098100000001 1451.82,625.50981 1451.82,639.9 1448.02,641.6" fill="#707060"/>
<polygon points="1448.02,641.6 1451.82,639.9 1451.82,730.8 1448.02,732.5" fill="#5cc85c"/>
<polygon points="1440.12,599.2098100000001 1443.92,597.50981 1451.82,597.50981 1448.02,599.2098100000001" fill="#d000d0" stroke="#32cd32" stroke-width="0.9"/>
<rect x="1440.12" y="660.3" width="7.9" height="72.20000000000005" fill="#e0ffff" stroke="#32cd32" stroke-width="1.1"/>
<rect x="1440.12" y="641.6" width="7.9" height="18.7" fill="#90ee90" stroke="#32cd32" stroke-width="1.1"/>
<rect x="1440.12" y="627.21" width="7.9" height="14.39" fill="#ffffe0" stroke="#1a1a1a" stroke-width="1.2"/>
<rect x="1440.12" y="599.21" width="7.9" height="28" fill="#ff00ff" stroke="#32cd32" stroke-width="1.1"/>
<polygon points="1456.10,603.82591 1459.90,602.12591 1459.90,630.12591 1456.10,631.82591" fill="#c000c0" stroke="#32cd32" stroke-width="0.8"/>
<polygon points="1456.10,631.82591 1459.90,630.12591 1459.90,639.9 1456.10,641.6" fill="#707060"/>
<polygon points="1456.10,641.6 1459.90,639.9 1459.90,730.8 1456.10,732.5" fill="#5cc85c"/>
<polygon points="1448.20,603.82591 1452.00,602.12591 1459.90,602.12591 1456.10,603.82591" fill="#d000d0" stroke="#32cd32" stroke-width="0.9"/>
<rect x="1448.20" y="660.3" width="7.9" height="72.20000000000005" fill="#e0ffff" stroke="#32cd32" stroke-width="1.1"/>
<rect x="1448.20" y="641.6" width="7.9" height="18.7" fill="#90ee90" stroke="#32cd32" stroke-width="1.1"/>
<rect x="1448.20" y="631.83" width="7.9" height="9.77" fill="#ffffe0" stroke="#32cd32" stroke-width="1.2"/>
<rect x="1448.20" y="603.83" width="7.9" height="28" fill="#ff00ff" stroke="#32cd32" stroke-width="1.1"/>
<polygon points="1464.18,593.34937 1467.98,591.64937 1467.98,619.64937 1464.18,621.34937" fill="#c000c0" stroke="#32cd32" stroke-width="0.8"/>
<polygon points="1464.18,621.34937 1467.98,619.64937 1467.98,639.9 1464.18,641.6" fill="#707060"/>
<polygon points="1464.18,641.6 1467.98,639.9 1467.98,730.8 1464.18,732.5" fill="#5cc85c"/>
<polygon points="1456.28,593.34937 1460.08,591.64937 1467.98,591.64937 1464.18,593.34937" fill="#d000d0" stroke="#32cd32" stroke-width="0.9"/>
<rect x="1456.28" y="660.3" width="7.9" height="72.20000000000005" fill="#e0ffff" stroke="#32cd32" stroke-width="1.1"/>
<rect x="1456.28" y="641.6" width="7.9" height="18.7" fill="#90ee90" stroke="#32cd32" stroke-width="1.1"/>
<rect x="1456.28" y="621.35" width="7.9" height="20.25" fill="#ffffe0" stroke="#1a1a1a" stroke-width="1.2"/>
<rect x="1456.28" y="593.35" width="7.9" height="28" fill="#ff00ff" stroke="#32cd32" stroke-width="1.1"/>
<polygon points="1472.26,595.03525 1476.06,593.33525 1476.06,621.33525 1472.26,623.03525" fill="#c000c0" stroke="#32cd32" stroke-width="0.8"/>
<polygon points="1472.26,623.03525 1476.06,621.33525 1476.06,639.9 1472.26,641.6" fill="#707060"/>
<polygon points="1472.26,641.6 1476.06,639.9 1476.06,730.8 1472.26,732.5" fill="#5cc85c"/>
<polygon points="1464.36,595.03525 1468.16,593.33525 1476.06,593.33525 1472.26,595.03525" fill="#d000d0" stroke="#32cd32" stroke-width="0.9"/>
<rect x="1464.36" y="660.3" width="7.9" height="72.20000000000005" fill="#e0ffff" stroke="#32cd32" stroke-width="1.1"/>
<rect x="1464.36" y="641.6" width="7.9" height="18.7" fill="#90ee90" stroke="#32cd32" stroke-width="1.1"/>
<rect x="1464.36" y="623.04" width="7.9" height="18.56" fill="#ffffe0" stroke="#1a1a1a" stroke-width="1.2"/>
<rect x="1464.36" y="595.04" width="7.9" height="28" fill="#ff00ff" stroke="#32cd32" stroke-width="1.1"/>
<polygon points="1480.34,595.537 1484.14,593.837 1484.14,621.837 1480.34,623.537" fill="#c000c0" stroke="#32cd32" stroke-width="0.8"/>
<polygon points="1480.34,623.537 1484.14,621.837 1484.14,639.9 1480.34,641.6" fill="#707060"/>
<polygon points="1480.34,641.6 1484.14,639.9 1484.14,730.8 1480.34,732.5" fill="#5cc85c"/>
<polygon points="1472.44,595.537 1476.24,593.837 1484.14,593.837 1480.34,595.537" fill="#d000d0" stroke="#32cd32" stroke-width="0.9"/>
<rect x="1472.44" y="660.3" width="7.9" height="72.20000000000005" fill="#e0ffff" stroke="#32cd32" stroke-width="1.1"/>
<rect x="1472.44" y="641.6" width="7.9" height="18.7" fill="#90ee90" stroke="#32cd32" stroke-width="1.1"/>
<rect x="1472.44" y="623.54" width="7.9" height="18.06" fill="#ffffe0" stroke="#1a1a1a" stroke-width="1.2"/>
<rect x="1472.44" y="595.54" width="7.9" height="28" fill="#ff00ff" stroke="#32cd32" stroke-width="1.1"/>
<polygon points="1488.42,599.2098100000001 1492.22,597.50981 1492.22,625.50981 1488.42,627.2098100000001" fill="#c000c0" stroke="#32cd32" stroke-width="0.8"/>
<polygon points="1488.42,627.2098100000001 1492.22,625.50981 1492.22,639.9 1488.42,641.6" fill="#707060"/>
<polygon points="1488.42,641.6 1492.22,639.9 1492.22,730.8 1488.42,732.5" fill="#5cc85c"/>
<polygon points="1480.52,599.2098100000001 1484.32,597.50981 1492.22,597.50981 1488.42,599.2098100000001" fill="#d000d0" stroke="#32cd32" stroke-width="0.9"/>
<rect x="1480.52" y="660.3" width="7.9" height="72.20000000000005" fill="#e0ffff" stroke="#32cd32" stroke-width="1.1"/>
<rect x="1480.52" y="641.6" width="7.9" height="18.7" fill="#90ee90" stroke="#32cd32" stroke-width="1.1"/>
<rect x="1480.52" y="627.21" width="7.9" height="14.39" fill="#ffffe0" stroke="#1a1a1a" stroke-width="1.2"/>
<rect x="1480.52" y="599.21" width="7.9" height="28" fill="#ff00ff" stroke="#32cd32" stroke-width="1.1"/>
<polygon points="1496.50,603.82591 1500.30,602.12591 1500.30,630.12591 1496.50,631.82591" fill="#c000c0" stroke="#32cd32" stroke-width="0.8"/>
<polygon points="1496.50,631.82591 1500.30,630.12591 1500.30,639.9 1496.50,641.6" fill="#707060"/>
<polygon points="1496.50,641.6 1500.30,639.9 1500.30,730.8 1496.50,732.5" fill="#5cc85c"/>
<polygon points="1488.60,603.82591 1492.40,602.12591 1500.30,602.12591 1496.50,603.82591" fill="#d000d0" stroke="#32cd32" stroke-width="0.9"/>
<rect x="1488.60" y="660.3" width="7.9" height="72.20000000000005" fill="#e0ffff" stroke="#32cd32" stroke-width="1.1"/>
<rect x="1488.60" y="641.6" width="7.9" height="18.7" fill="#90ee90" stroke="#32cd32" stroke-width="1.1"/>
<rect x="1488.60" y="631.83" width="7.9" height="9.77" fill="#ffffe0" stroke="#32cd32" stroke-width="1.2"/>
<rect x="1488.60" y="603.83" width="7.9" height="28" fill="#ff00ff" stroke="#32cd32" stroke-width="1.1"/>
<path d="M925.3 575.3 V741.8 M925.3 575.3 L932.4 572.3 V582.3" fill="none" stroke="#000" stroke-width="1.2"/>
<path d="M909.8 732.0 H925.3 L932.8 729.7" fill="none" stroke="#000" stroke-width="1.2"/>
<text x="906.6" y="736.6" text-anchor="end" class="cl">0</text>
<path d="M909.8 644.4 H925.3 L932.8 642.1" fill="none" stroke="#000" stroke-width="1.2"/>
<text x="906.6" y="649.0" text-anchor="end" class="cl">100</text>
<line x1="925.3" y1="732.5" x2="925.3" y2="741.8" stroke="#000" stroke-width="1.2"/>
<text x="925.3" y="754.9" text-anchor="middle" class="cl">-1</text>
<line x1="1086.8999999999999" y1="732.5" x2="1086.8999999999999" y2="741.8" stroke="#000" stroke-width="1.2"/>
<text x="1086.8999999999999" y="754.9" text-anchor="middle" class="cl">19</text>
<line x1="1248.5" y1="732.5" x2="1248.5" y2="741.8" stroke="#000" stroke-width="1.2"/>
<text x="1248.5" y="754.9" text-anchor="middle" class="cl">39</text>
<line x1="1410.1" y1="732.5" x2="1410.1" y2="741.8" stroke="#000" stroke-width="1.2"/>
<text x="1410.1" y="754.9" text-anchor="middle" class="cl">59</text>
<text x="1244" y="557" text-anchor="middle" class="ct" textLength="94" lengthAdjust="spacingAndGlyphs">Contributing Prices</text>
<rect x="1548" y="572.3" width="21.5" height="8.6" fill="#ff00ff"/>
<text x="1575.4" y="580.9" class="ct" transform="translate(1575.4 0) scale(0.89 1) translate(-1575.4 0)">Energy</text>
<rect x="1548" y="586.3" width="21.5" height="8.6" fill="#ffffe0"/>
<text x="1575.4" y="594.9" class="ct" transform="translate(1575.4 0) scale(0.89 1) translate(-1575.4 0)">Toll</text>
<rect x="1548" y="600.3" width="21.5" height="8.6" fill="#90ee90"/>
<text x="1575.4" y="608.9" class="ct" transform="translate(1575.4 0) scale(0.89 1) translate(-1575.4 0)">Time</text>
<rect x="1548" y="614.3" width="21.5" height="8.6" fill="#e0ffff"/>
<text x="1575.4" y="622.9" class="ct" transform="translate(1575.4 0) scale(0.89 1) translate(-1575.4 0)">Dist</text>
</svg>
<svg style="position:absolute;left:0;top:0" width="1920" height="1027" viewBox="0 0 1920 1027">
<defs><clipPath id="mc"><rect x="1664" y="511" width="244" height="509"/></clipPath><linearGradient id="gtr" x1="0" y1="0" x2="0" y2="1"><stop offset="0" stop-color="#a8e0a0"/><stop offset="1" stop-color="#1e7a2a"/></linearGradient><linearGradient id="rtr" x1="0" y1="0" x2="0" y2="1"><stop offset="0" stop-color="#ff1a1a"/><stop offset="1" stop-color="#a00000"/></linearGradient><radialGradient id="bd" cx="0.35" cy="0.35" r="0.7"><stop offset="0" stop-color="#4a6aff"/><stop offset="0.6" stop-color="#0010c8"/><stop offset="1" stop-color="#000070"/></radialGradient></defs>
<g clip-path="url(#mc)">
<rect x="1664" y="511" width="244" height="509" fill="#fcf6df"/>
<polygon points="1873,511 1908,511 1908,700 1895,690 1884,650 1879,600 1874,560" fill="#c9deb3"/>
<polygon points="1786,722 1812,712 1846,738 1849,790 1836,830 1812,850 1795,835 1786,790 1789,750" fill="#c9deb3"/>
<polygon points="1734,850 1752,846 1764,880 1763,946 1748,940 1738,905" fill="#c9deb3"/>
<polygon points="1664,670 1722,668 1725,690 1690,694 1664,700" fill="#c9deb3"/>
<polygon points="1664,704 1690,706 1692,742 1664,745" fill="#c9deb3"/>
<polygon points="1664,762 1694,764 1692,820 1664,822" fill="#c9deb3"/>
<polygon points="1664,640 1700,648 1712,675 1664,676" fill="#c9deb3"/>
<polygon points="1836,922 1864,920 1866,950 1838,952" fill="#c9deb3"/>
<polygon points="1790,510 1810,511 1812,540 1795,548" fill="#c9deb3"/>
<polygon points="1870,760 1908,750 1908,800 1880,810" fill="#c9deb3"/>
<polygon points="1700,1000 1730,995 1740,1020 1700,1020" fill="#c9deb3"/>
<polygon points="1664,860 1680,850 1690,880 1664,900" fill="#c9deb3"/>
<polygon points="1745,630 1770,640 1775,665 1748,660" fill="#c9deb3"/>
<polygon points="1745,540 1800,545 1802,590 1770,600 1748,585" fill="#dcd9cf" opacity="0.6"/>
<polygon points="1848,596 1878,600 1880,640 1852,636" fill="#dcd9cf" opacity="0.6"/>
<polygon points="1690,948 1760,950 1765,1000 1695,1000" fill="#dcd9cf" opacity="0.6"/>
<polygon points="1722,670 1752,668 1755,700 1725,702" fill="#dcd9cf" opacity="0.6"/>
<polygon points="1810,688 1835,690 1836,712 1812,712" fill="#dcd9cf" opacity="0.6"/>
<polygon points="1820,850 1845,852 1846,880 1822,880" fill="#dcd9cf" opacity="0.6"/>
<polygon points="1746.0,590.4 1745.1,592.6 1741.5,592.6 1739.8,590.4 1742.1,587.4 1745.7,588.1" fill="#d8d6ce" opacity="0.75"/>
<polygon points="1724.2,828.7 1722.5,831.4 1716.4,832.1 1716.0,828.7 1717.4,823.8 1721.1,824.5" fill="#d8d6ce" opacity="0.75"/>
<polygon points="1821.0,701.2 1820.1,704.6 1817.1,703.8 1815.0,701.2 1817.2,697.6 1820.7,698.8" fill="#d8d6ce" opacity="0.75"/>
<polygon points="1808.4,777.6 1806.3,780.3 1801.2,782.1 1800.0,777.6 1801.8,773.3 1805.9,773.6" fill="#d8d6ce" opacity="0.75"/>
<polygon points="1879.4,671.9 1877.1,676.1 1872.7,675.2 1870.9,671.9 1873.0,668.1 1877.9,667.7" fill="#d8d6ce" opacity="0.75"/>
<polygon points="1736.5,707.9 1735.5,710.3 1732.7,711.8 1731.3,707.9 1732.3,703.7 1735.3,704.7" fill="#d8d6ce" opacity="0.75"/>
<polygon points="1802.7,956.7 1799.3,960.0 1794.6,961.6 1794.2,956.7 1795.6,953.7 1799.4,952.8" fill="#d8d6ce" opacity="0.75"/>
<polygon points="1731.6,517.0 1730.9,520.1 1727.2,520.0 1725.3,517.0 1726.8,513.8 1730.8,513.8" fill="#d8d6ce" opacity="0.75"/>
<polygon points="1762.2,714.5 1760.5,716.0 1759.0,716.2 1758.3,714.5 1759.0,713.1 1760.8,713.3" fill="#d8d6ce" opacity="0.75"/>
<polygon points="1876.9,822.0 1876.0,823.5 1873.5,824.8 1872.7,822.0 1874.2,820.6 1876.0,820.4" fill="#d8d6ce" opacity="0.75"/>
<polygon points="1866.7,595.7 1864.8,597.5 1863.5,597.5 1861.4,595.7 1863.0,594.3 1865.0,594.4" fill="#d8d6ce" opacity="0.75"/>
<polygon points="1854.1,781.3 1853.0,786.1 1847.9,785.7 1845.4,781.3 1848.8,777.7 1852.3,779.0" fill="#d8d6ce" opacity="0.75"/>
<polygon points="1675.7,654.7 1673.9,657.7 1670.9,657.8 1670.3,654.7 1671.6,652.9 1673.7,652.2" fill="#d8d6ce" opacity="0.75"/>
<polygon points="1884.8,935.2 1882.3,938.4 1879.0,938.6 1877.3,935.2 1879.9,931.8 1882.6,931.8" fill="#d8d6ce" opacity="0.75"/>
<polygon points="1902.3,712.9 1899.4,714.8 1897.1,716.3 1894.5,712.9 1896.3,709.4 1899.9,710.6" fill="#d8d6ce" opacity="0.75"/>
<polygon points="1799.7,580.5 1798.1,582.7 1796.2,582.6 1794.7,580.5 1796.3,579.1 1797.9,578.7" fill="#d8d6ce" opacity="0.75"/>
<polygon points="1730.9,724.5 1729.1,726.6 1726.5,726.4 1725.0,724.5 1726.8,722.5 1728.7,722.6" fill="#d8d6ce" opacity="0.75"/>
<polygon points="1712.9,517.0 1712.2,520.7 1707.9,520.6 1705.4,517.0 1708.3,513.2 1711.5,513.9" fill="#d8d6ce" opacity="0.75"/>
<polygon points="1854.7,768.9 1852.2,772.1 1848.8,771.9 1846.6,768.9 1848.8,765.9 1852.9,765.4" fill="#d8d6ce" opacity="0.75"/>
<polygon points="1878.2,986.1 1877.1,987.8 1874.5,988.3 1873.7,986.1 1874.6,983.5 1877.1,983.1" fill="#d8d6ce" opacity="0.75"/>
<polygon points="1705.7,873.1 1705.5,875.7 1700.4,876.1 1699.2,873.1 1700.6,870.6 1704.7,869.7" fill="#d8d6ce" opacity="0.75"/>
<polygon points="1750.3,612.9 1748.5,615.2 1746.1,615.0 1744.0,612.9 1746.1,609.6 1748.8,609.6" fill="#d8d6ce" opacity="0.75"/>
<polygon points="1693.5,647.8 1691.8,649.4 1689.7,649.9 1689.4,647.8 1689.7,645.9 1692.2,646.6" fill="#d8d6ce" opacity="0.75"/>
<polygon points="1681.9,859.1 1681.5,862.4 1678.7,862.5 1677.6,859.1 1678.2,856.7 1681.4,855.6" fill="#d8d6ce" opacity="0.75"/>
<polygon points="1732.8,579.6 1731.3,581.6 1728.7,582.2 1727.1,579.6 1728.6,576.7 1731.3,577.0" fill="#d8d6ce" opacity="0.75"/>
<polygon points="1672.6,640.2 1671.1,641.9 1669.1,641.4 1667.9,640.2 1669.4,638.1 1671.2,638.5" fill="#d8d6ce" opacity="0.75"/>
<polygon points="1834.0,1006.2 1832.0,1008.5 1829.1,1007.9 1828.3,1006.2 1828.7,1004.2 1831.5,1004.5" fill="#d8d6ce" opacity="0.75"/>
<polygon points="1870.3,950.3 1868.7,953.5 1865.6,953.4 1863.9,950.3 1864.5,946.9 1868.6,945.8" fill="#d8d6ce" opacity="0.75"/>
<polygon points="1741.7,693.3 1740.9,694.6 1739.0,694.3 1738.4,693.3 1739.1,692.2 1740.6,691.9" fill="#d8d6ce" opacity="0.75"/>
<polygon points="1725.7,807.8 1723.6,811.6 1720.1,810.4 1717.0,807.8 1719.7,804.5 1722.8,804.1" fill="#d8d6ce" opacity="0.75"/>
<polygon points="1884.1,828.7 1881.2,832.1 1876.7,832.9 1874.2,828.7 1876.6,824.7 1881.5,825.9" fill="#d8d6ce" opacity="0.75"/>
<polygon points="1675.5,581.5 1675.0,584.3 1671.8,584.4 1670.5,581.5 1671.7,578.5 1674.9,578.9" fill="#d8d6ce" opacity="0.75"/>
<polygon points="1826.8,548.0 1825.2,552.1 1822.0,552.1 1818.2,548.0 1821.7,544.6 1825.8,543.9" fill="#d8d6ce" opacity="0.75"/>
<polygon points="1815.0,836.4 1814.7,838.0 1812.3,837.6 1812.0,836.4 1812.3,834.3 1814.7,834.8" fill="#d8d6ce" opacity="0.75"/>
<polygon points="1791.8,747.3 1790.7,751.1 1787.3,749.1 1786.3,747.3 1787.3,744.6 1790.8,745.1" fill="#d8d6ce" opacity="0.75"/>
<polygon points="1894.6,620.4 1894.4,622.6 1889.8,623.5 1887.4,620.4 1890.6,616.4 1893.8,618.4" fill="#d8d6ce" opacity="0.75"/>
<polygon points="1669.6,760.8 1668.3,763.2 1664.9,762.6 1663.1,760.8 1665.7,757.2 1668.7,757.3" fill="#d8d6ce" opacity="0.75"/>
<polygon points="1739.4,701.1 1736.6,703.6 1734.0,702.9 1733.1,701.1 1734.0,697.7 1736.5,698.9" fill="#d8d6ce" opacity="0.75"/>
<polygon points="1792.1,609.9 1789.9,612.7 1786.2,613.3 1785.0,609.9 1787.1,606.9 1789.5,606.9" fill="#d8d6ce" opacity="0.75"/>
<polygon points="1822.7,658.1 1821.0,659.7 1819.2,660.2 1817.3,658.1 1818.9,656.6 1821.1,656.5" fill="#d8d6ce" opacity="0.75"/>
<polygon points="1709.2,595.8 1707.0,598.6 1704.3,597.9 1704.2,595.8 1705.1,593.9 1706.9,594.1" fill="#d8d6ce" opacity="0.75"/>
<polygon points="1733.0,799.8 1729.8,803.7 1725.7,803.2 1724.7,799.8 1724.8,797.0 1730.0,795.6" fill="#d8d6ce" opacity="0.75"/>
<polygon points="1874.4,623.0 1873.5,626.1 1870.5,625.9 1870.5,623.0 1870.7,620.0 1873.5,620.5" fill="#d8d6ce" opacity="0.75"/>
<polygon points="1671.7,710.8 1669.1,714.0 1664.4,713.7 1661.4,710.8 1663.0,706.2 1668.6,706.1" fill="#d8d6ce" opacity="0.75"/>
<polygon points="1777.7,790.8 1776.6,792.7 1774.4,792.0 1773.7,790.8 1774.1,789.5 1776.0,789.0" fill="#d8d6ce" opacity="0.75"/>
<polygon points="1808.0,709.0 1806.4,711.2 1803.6,711.5 1802.1,709.0 1804.3,707.3 1807.0,706.5" fill="#d8d6ce" opacity="0.75"/>
<polygon points="1743.2,525.9 1740.8,529.1 1737.3,528.2 1737.3,525.9 1737.9,522.6 1740.8,522.4" fill="#d8d6ce" opacity="0.75"/>
<polygon points="1846.0,767.4 1844.2,769.2 1841.7,770.0 1840.5,767.4 1841.4,765.8 1843.6,765.4" fill="#d8d6ce" opacity="0.75"/>
<polygon points="1827.1,989.4 1826.6,990.9 1824.2,990.7 1822.9,989.4 1823.5,987.0 1826.6,986.7" fill="#d8d6ce" opacity="0.75"/>
<polygon points="1750.1,607.8 1747.2,611.4 1742.6,611.2 1741.2,607.8 1742.8,604.2 1747.7,604.9" fill="#d8d6ce" opacity="0.75"/>
<polygon points="1900.1,618.7 1897.8,620.4 1895.0,621.0 1892.6,618.7 1895.1,615.4 1897.4,616.3" fill="#d8d6ce" opacity="0.75"/>
<polygon points="1861.4,898.3 1861.3,899.8 1858.8,900.6 1858.2,898.3 1858.7,896.4 1860.9,896.3" fill="#d8d6ce" opacity="0.75"/>
<polygon points="1743.9,652.8 1742.7,655.0 1741.0,654.1 1739.8,652.8 1740.4,651.3 1742.4,651.2" fill="#d8d6ce" opacity="0.75"/>
<polygon points="1786.9,979.0 1785.4,981.6 1782.6,980.9 1781.8,979.0 1782.5,977.6 1784.9,976.6" fill="#d8d6ce" opacity="0.75"/>
<polygon points="1727.2,547.4 1726.5,549.6 1723.7,548.8 1723.7,547.4 1724.1,545.4 1726.1,546.0" fill="#d8d6ce" opacity="0.75"/>
<polygon points="1770.1,825.2 1767.8,827.5 1763.2,828.0 1761.6,825.2 1763.4,822.6 1767.2,822.5" fill="#d8d6ce" opacity="0.75"/>
<polygon points="1705.7,957.1 1705.1,960.2 1701.2,960.9 1698.7,957.1 1701.4,954.1 1704.8,953.2" fill="#d8d6ce" opacity="0.75"/>
<polygon points="1886.5,535.2 1886.4,537.7 1882.7,537.3 1881.1,535.2 1883.4,532.3 1886.4,533.5" fill="#d8d6ce" opacity="0.75"/>
<polygon points="1810.8,825.0 1809.5,826.8 1807.1,827.4 1806.5,825.0 1807.4,822.5 1809.4,823.1" fill="#d8d6ce" opacity="0.75"/>
<polygon points="1717.0,912.6 1716.2,915.7 1712.7,914.7 1712.0,912.6 1713.0,910.1 1716.1,908.6" fill="#d8d6ce" opacity="0.75"/>
<polygon points="1743.4,798.3 1742.6,800.5 1739.5,801.2 1738.4,798.3 1738.8,795.9 1742.5,795.9" fill="#d8d6ce" opacity="0.75"/>
<polygon points="1878.5,745.5 1878.3,748.1 1876.2,747.7 1874.9,745.5 1876.1,743.7 1878.2,742.8" fill="#d8d6ce" opacity="0.75"/>
<polygon points="1697.6,760.3 1693.5,765.1 1689.2,763.8 1689.2,760.3 1690.1,755.5 1694.3,755.8" fill="#d8d6ce" opacity="0.75"/>
<polygon points="1706.7,907.9 1705.9,909.6 1703.3,909.9 1701.7,907.9 1703.4,906.1 1705.8,905.1" fill="#d8d6ce" opacity="0.75"/>
<polygon points="1678.5,796.2 1677.3,799.9 1673.7,800.0 1672.3,796.2 1673.7,792.8 1678.1,792.8" fill="#d8d6ce" opacity="0.75"/>
<polygon points="1774.4,526.7 1773.0,530.5 1769.0,529.1 1767.2,526.7 1769.4,523.7 1772.0,523.7" fill="#d8d6ce" opacity="0.75"/>
<polygon points="1790.5,535.4 1790.2,538.6 1786.7,538.6 1784.5,535.4 1786.6,531.3 1790.5,531.6" fill="#d8d6ce" opacity="0.75"/>
<polygon points="1865.5,611.9 1863.9,614.9 1857.9,617.2 1857.6,611.9 1858.0,608.8 1863.8,608.5" fill="#d8d6ce" opacity="0.75"/>
<polygon points="1865.3,586.8 1862.3,589.7 1859.5,588.7 1858.4,586.8 1858.7,583.5 1863.1,584.6" fill="#d8d6ce" opacity="0.75"/>
<polygon points="1857.3,572.5 1855.8,575.6 1851.8,576.3 1851.2,572.5 1851.7,569.8 1855.7,570.1" fill="#d8d6ce" opacity="0.75"/>
<polygon points="1906.2,803.7 1903.8,806.7 1901.8,806.8 1900.3,803.7 1900.7,801.0 1904.4,801.5" fill="#d8d6ce" opacity="0.75"/>
<polygon points="1669.0,531.9 1667.6,534.5 1665.6,533.5 1663.8,531.9 1665.7,530.1 1667.3,530.1" fill="#d8d6ce" opacity="0.75"/>
<polygon points="1722.4,806.8 1721.4,809.1 1717.2,809.3 1716.9,806.8 1717.6,802.8 1721.8,803.9" fill="#d8d6ce" opacity="0.75"/>
<polygon points="1733.1,520.7 1731.2,523.9 1726.7,524.5 1726.1,520.7 1727.9,517.4 1730.9,518.1" fill="#d8d6ce" opacity="0.75"/>
<polygon points="1682.0,904.4 1680.7,905.7 1678.9,906.1 1677.8,904.4 1679.2,903.0 1680.8,903.3" fill="#d8d6ce" opacity="0.75"/>
<polygon points="1881.1,906.5 1880.9,909.8 1876.2,909.8 1875.4,906.5 1877.0,904.2 1880.3,902.4" fill="#d8d6ce" opacity="0.75"/>
<polygon points="1835.4,937.7 1834.0,941.8 1830.1,940.5 1827.8,937.7 1830.6,933.3 1833.4,934.9" fill="#d8d6ce" opacity="0.75"/>
<polygon points="1727.9,886.9 1725.4,890.4 1720.6,892.1 1717.4,886.9 1719.9,881.6 1724.7,882.0" fill="#d8d6ce" opacity="0.75"/>
<polygon points="1836.4,943.8 1834.1,945.9 1831.0,945.6 1828.6,943.8 1831.7,941.8 1834.8,941.3" fill="#d8d6ce" opacity="0.75"/>
<polygon points="1702.2,529.4 1701.1,531.4 1699.2,531.2 1698.1,529.4 1698.7,527.1 1700.6,527.1" fill="#d8d6ce" opacity="0.75"/>
<polygon points="1886.3,987.2 1885.3,989.6 1883.2,989.3 1881.8,987.2 1883.6,985.8 1885.3,984.9" fill="#d8d6ce" opacity="0.75"/>
<polygon points="1717.0,674.6 1716.3,677.7 1713.6,676.9 1710.8,674.6 1713.0,671.6 1716.0,672.1" fill="#d8d6ce" opacity="0.75"/>
<polygon points="1773.6,901.5 1771.5,904.7 1769.3,904.6 1768.1,901.5 1769.2,898.5 1772.3,899.9" fill="#d8d6ce" opacity="0.75"/>
<polygon points="1786.5,760.7 1785.2,765.2 1781.6,765.5 1779.8,760.7 1780.9,757.1 1784.8,756.8" fill="#d8d6ce" opacity="0.75"/>
<polygon points="1690.0,909.0 1687.1,912.1 1683.5,913.3 1682.6,909.0 1684.1,906.3 1686.9,904.6" fill="#d8d6ce" opacity="0.75"/>
<polygon points="1789.3,704.7 1788.0,709.2 1783.2,708.9 1781.9,704.7 1784.1,699.9 1788.3,700.1" fill="#d8d6ce" opacity="0.75"/>
<polygon points="1710.9,734.4 1708.5,739.0 1704.9,737.1 1703.0,734.4 1704.0,731.7 1708.1,731.5" fill="#d8d6ce" opacity="0.75"/>
<polygon points="1746.1,776.1 1745.6,778.5 1743.2,778.8 1742.4,776.1 1742.4,773.6 1745.4,774.1" fill="#d8d6ce" opacity="0.75"/>
<polygon points="1714.6,834.0 1713.6,835.8 1711.6,836.2 1710.7,834.0 1711.8,832.6 1714.1,832.2" fill="#d8d6ce" opacity="0.75"/>
<polygon points="1846.4,969.0 1844.6,971.2 1841.3,972.5 1839.3,969.0 1841.1,965.9 1844.8,966.4" fill="#d8d6ce" opacity="0.75"/>
<path d="M1740.8 829.1 q-0.7 0.8 -4.8 -1.0" fill="none" stroke="#a9c9ec" stroke-width="1.3"/>
<path d="M1816.5 640.0 q0.3 -0.8 -0.9 -0.5" fill="none" stroke="#a9c9ec" stroke-width="1.3"/>
<path d="M1827.4 980.1 q-0.2 0.3 -3.8 1.9" fill="none" stroke="#a9c9ec" stroke-width="1.3"/>
<path d="M1783.1 1002.3 q-4.8 2.0 -5.5 0.5" fill="none" stroke="#a9c9ec" stroke-width="1.3"/>
<path d="M1890.8 774.6 q-2.1 1.8 -4.8 0.9" fill="none" stroke="#a9c9ec" stroke-width="1.3"/>
<path d="M1788.4 834.6 q1.4 2.8 3.9 0.3" fill="none" stroke="#a9c9ec" stroke-width="1.3"/>
<path d="M1716.2 857.2 q-2.9 4.5 -1.3 3.2" fill="none" stroke="#a9c9ec" stroke-width="1.3"/>
<path d="M1751.0 543.3 q-4.3 -1.1 -2.7 -1.2" fill="none" stroke="#a9c9ec" stroke-width="1.3"/>
<path d="M1766.5 864.1 q-2.5 0.0 -1.8 -2.8" fill="none" stroke="#a9c9ec" stroke-width="1.3"/>
<path d="M1890.6 778.5 q-2.3 0.1 -3.4 3.6" fill="none" stroke="#a9c9ec" stroke-width="1.3"/>
<path d="M1696.9 903.3 q1.7 1.2 3.7 1.6" fill="none" stroke="#a9c9ec" stroke-width="1.3"/>
<path d="M1720.0 996.9 q1.0 2.7 -1.8 1.7" fill="none" stroke="#a9c9ec" stroke-width="1.3"/>
<path d="M1777.9 662.2 q2.3 -3.1 0.6 -4.5" fill="none" stroke="#a9c9ec" stroke-width="1.3"/>
<path d="M1869.3 648.7 q-1.2 -3.4 -1.5 -3.0" fill="none" stroke="#a9c9ec" stroke-width="1.3"/>
<path d="M1666.6 875.9 q-2.5 -1.7 -2.6 -3.1" fill="none" stroke="#a9c9ec" stroke-width="1.3"/>
<path d="M1768.4 833.7 q3.5 1.3 1.9 -1.7" fill="none" stroke="#a9c9ec" stroke-width="1.3"/>
<path d="M1679.6 928.9 q0.3 3.7 4.9 3.4" fill="none" stroke="#a9c9ec" stroke-width="1.3"/>
<path d="M1817.3 522.5 q-2.0 1.2 -5.9 5.4" fill="none" stroke="#a9c9ec" stroke-width="1.3"/>
<path d="M1690.3 586.4 q-2.5 -0.4 -3.2 3.3" fill="none" stroke="#a9c9ec" stroke-width="1.3"/>
<path d="M1882.1 910.8 q-1.3 4.0 -4.0 4.7" fill="none" stroke="#a9c9ec" stroke-width="1.3"/>
<path d="M1825.8 962.0 q-0.1 3.2 3.5 4.1" fill="none" stroke="#a9c9ec" stroke-width="1.3"/>
<path d="M1792.9 886.0 q-0.0 0.9 -0.7 4.6" fill="none" stroke="#a9c9ec" stroke-width="1.3"/>
<path d="M1722.0 584.7 q-0.2 -4.8 -0.1 -5.3" fill="none" stroke="#a9c9ec" stroke-width="1.3"/>
<path d="M1783.4 764.1 q-2.7 4.2 0.5 4.4" fill="none" stroke="#a9c9ec" stroke-width="1.3"/>
<path d="M1777.8 796.3 q0.2 1.6 2.0 4.1" fill="none" stroke="#a9c9ec" stroke-width="1.3"/>
<path d="M1895.6 552.7 q-2.0 1.5 1.6 1.6" fill="none" stroke="#a9c9ec" stroke-width="1.3"/>
<path d="M1829.1 980.7 q-1.0 2.8 -2.0 5.8" fill="none" stroke="#a9c9ec" stroke-width="1.3"/>
<path d="M1880.5 531.9 q0.3 2.9 2.6 1.5" fill="none" stroke="#a9c9ec" stroke-width="1.3"/>
<path d="M1753.5 752.3 q-1.6 1.2 0.3 3.2" fill="none" stroke="#a9c9ec" stroke-width="1.3"/>
<path d="M1767.0 792.0 q3.9 -1.8 3.9 -2.5" fill="none" stroke="#a9c9ec" stroke-width="1.3"/>
<path d="M1786.4 650.8 q1.0 4.6 0.1 5.7" fill="none" stroke="#a9c9ec" stroke-width="1.3"/>
<path d="M1745.1 673.5 q-0.4 2.2 -2.4 1.0" fill="none" stroke="#a9c9ec" stroke-width="1.3"/>
<path d="M1675.6 876.3 q-0.4 -0.9 4.6 0.5" fill="none" stroke="#a9c9ec" stroke-width="1.3"/>
<path d="M1667.5 610.0 q3.5 2.4 5.1 1.3" fill="none" stroke="#a9c9ec" stroke-width="1.3"/>
<path d="M1883.4 820.9 q1.9 1.3 1.4 1.5" fill="none" stroke="#a9c9ec" stroke-width="1.3"/>
<path d="M1828.8 621.3 q2.6 -2.6 2.0 -0.5" fill="none" stroke="#a9c9ec" stroke-width="1.3"/>
<path d="M1709.3 533.5 q2.6 1.7 3.3 5.0" fill="none" stroke="#a9c9ec" stroke-width="1.3"/>
<path d="M1862.6 908.3 q-0.8 -1.9 0.7 -2.9" fill="none" stroke="#a9c9ec" stroke-width="1.3"/>
<path d="M1742.1 730.3 q-1.8 3.0 1.7 5.2" fill="none" stroke="#a9c9ec" stroke-width="1.3"/>
<path d="M1675.4 574.4 q4.4 0.1 3.7 0.9" fill="none" stroke="#a9c9ec" stroke-width="1.3"/>
<path d="M1669.4 708.6 q3.4 2.5 1.1 5.3" fill="none" stroke="#a9c9ec" stroke-width="1.3"/>
<path d="M1764.6 566.0 q-1.2 -4.6 1.7 -3.5" fill="none" stroke="#a9c9ec" stroke-width="1.3"/>
<path d="M1667.1 856.9 q-4.7 5.0 -4.5 5.6" fill="none" stroke="#a9c9ec" stroke-width="1.3"/>
<path d="M1696.8 523.9 q2.7 -3.4 2.6 -3.1" fill="none" stroke="#a9c9ec" stroke-width="1.3"/>
<path d="M1678.0 902.0 q2.7 -0.4 2.6 4.3" fill="none" stroke="#a9c9ec" stroke-width="1.3"/>
<path d="M1816.2 869.6 q-1.7 5.4 -0.5 5.2" fill="none" stroke="#a9c9ec" stroke-width="1.3"/>
<path d="M1837.4 520.7 q-1.0 -1.6 -5.8 1.8" fill="none" stroke="#a9c9ec" stroke-width="1.3"/>
<path d="M1740.3 879.7 q-2.1 -0.5 -4.0 4.3" fill="none" stroke="#a9c9ec" stroke-width="1.3"/>
<path d="M1753.8 802.5 q-2.5 2.8 -0.7 2.1" fill="none" stroke="#a9c9ec" stroke-width="1.3"/>
<path d="M1752.8 837.4 q0.1 1.2 1.6 -1.0" fill="none" stroke="#a9c9ec" stroke-width="1.3"/>
<path d="M1891.8 907.3 q-2.2 1.6 0.8 -2.5" fill="none" stroke="#a9c9ec" stroke-width="1.3"/>
<path d="M1834.1 928.7 q1.9 2.6 -2.0 1.3" fill="none" stroke="#a9c9ec" stroke-width="1.3"/>
<path d="M1809.7 669.3 q-1.2 3.4 -0.9 4.7" fill="none" stroke="#a9c9ec" stroke-width="1.3"/>
<path d="M1809.8 963.1 q-1.1 -2.7 3.7 -2.6" fill="none" stroke="#a9c9ec" stroke-width="1.3"/>
<path d="M1767.0 808.3 q-0.9 4.3 3.8 4.6" fill="none" stroke="#a9c9ec" stroke-width="1.3"/>
<path d="M1860.0 948.6 q2.5 0.5 0.9 -2.7" fill="none" stroke="#a9c9ec" stroke-width="1.3"/>
<path d="M1829.6 971.9 q-0.6 -0.7 -1.8 -5.0" fill="none" stroke="#a9c9ec" stroke-width="1.3"/>
<path d="M1713.9 890.1 q3.2 -0.5 5.2 -3.2" fill="none" stroke="#a9c9ec" stroke-width="1.3"/>
<path d="M1777.2 618.3 q0.3 1.3 -2.9 3.0" fill="none" stroke="#a9c9ec" stroke-width="1.3"/>
<path d="M1687.0 918.3 q2.1 0.8 3.3 -3.2" fill="none" stroke="#a9c9ec" stroke-width="1.3"/>
<path d="M1877.5 775.9 q-2.0 -1.3 -0.3 1.1" fill="none" stroke="#a9c9ec" stroke-width="1.3"/>
<path d="M1709.2 865.5 q-1.4 0.5 -1.6 0.8" fill="none" stroke="#a9c9ec" stroke-width="1.3"/>
<path d="M1701.6 537.3 q0.6 0.0 6.0 -1.5" fill="none" stroke="#a9c9ec" stroke-width="1.3"/>
<path d="M1854.2 593.1 q0.7 -3.8 1.2 -1.9" fill="none" stroke="#a9c9ec" stroke-width="1.3"/>
<path d="M1674.0 1010.2 q2.6 -1.5 4.4 -0.2" fill="none" stroke="#a9c9ec" stroke-width="1.3"/>
<path d="M1852.2 728.0 q4.6 4.4 5.4 3.2" fill="none" stroke="#a9c9ec" stroke-width="1.3"/>
<path d="M1726.7 533.9 q-4.3 -4.6 -3.6 -3.8" fill="none" stroke="#a9c9ec" stroke-width="1.3"/>
<path d="M1799.2 950.3 q2.2 0.1 -0.5 5.4" fill="none" stroke="#a9c9ec" stroke-width="1.3"/>
<path d="M1808.9 713.7 q-3.7 3.1 -4.6 5.5" fill="none" stroke="#a9c9ec" stroke-width="1.3"/>
<path d="M1819.1 993.2 q0.7 -2.7 2.0 -1.3" fill="none" stroke="#a9c9ec" stroke-width="1.3"/>
<path d="M1776 588 Q1760 610 1772 625 Q1790 640 1765 650 Q1750 660 1762 675 Q1775 690 1769 711 Q1755 725 1745 740 Q1730 760 1725 790 Q1720 810 1712 840" fill="none" stroke="#a6c6ea" stroke-width="1.6"/>
<path d="M1700 520 Q1720 530 1740 528" fill="none" stroke="#a6c6ea" stroke-width="1.6"/>
<path d="M1790 600 Q1800 620 1795 640" fill="none" stroke="#a6c6ea" stroke-width="1.6"/>
<path d="M1680 620 L1710 640" fill="none" stroke="#a6c6ea" stroke-width="1.6"/>
<path d="M1840 760 Q1850 790 1845 820" fill="none" stroke="#a6c6ea" stroke-width="1.6"/>
<path d="M1760 870 Q1770 890 1765 910" fill="none" stroke="#a6c6ea" stroke-width="1.6"/>
<path d="M1690 860 Q1700 880 1695 900 L1680 930" fill="none" stroke="#a6c6ea" stroke-width="1.6"/>
<path d="M1800 900 L1830 930" fill="none" stroke="#a6c6ea" stroke-width="1.6"/>
<path d="M1850 880 L1880 900" fill="none" stroke="#a6c6ea" stroke-width="1.6"/>
<path d="M1664 780 L1690 790" fill="none" stroke="#a6c6ea" stroke-width="1.6"/>
<path d="M1760 760 Q1770 780 1760 800" fill="none" stroke="#a6c6ea" stroke-width="1.6"/>
<path d="M1800 560 L1830 540" fill="none" stroke="#a6c6ea" stroke-width="1.6"/>
<path d="M1752.7 670 Q1748 690 1749 695 Q1770 705 1771 716 Q1760 735 1742.8 749.5 Q1725 765 1714.6 772.7 Q1705 800 1704.7 840 Q1700 870 1697 890.5 Q1685 915 1667.4 931.2" fill="none" stroke="#a89cb0" stroke-width="1.6"/>
<path d="M1770 511 Q1775 530 1772 550 Q1770 580 1780 600" fill="none" stroke="#a89cb0" stroke-width="1.4"/>
<path d="M1723 511 Q1733 525 1726 538 Q1735 550 1745 560" fill="none" stroke="#f1b97c" stroke-width="3.6" stroke-linecap="round" stroke-linejoin="round"/>
<path d="M1762.7 511 Q1770 522 1756 538" fill="none" stroke="#f1b97c" stroke-width="3.6" stroke-linecap="round" stroke-linejoin="round"/>
<path d="M1772.6 538 Q1790 525 1805.7 521.6 Q1825 515 1842 511" fill="none" stroke="#f1b97c" stroke-width="3.6" stroke-linecap="round" stroke-linejoin="round"/>
<path d="M1726 601 Q1732 640 1736 675 Q1727 690 1728 703 Q1720 712 1709.7 719.7 Q1690 730 1684.8 741.2 Q1680 752 1683 762.7 Q1695 770 1709.7 772.7 Q1725 778 1742.8 789.2 Q1765 805 1779.2 810.8 Q1782 825 1782.5 840" fill="none" stroke="#f1b97c" stroke-width="3.6" stroke-linecap="round" stroke-linejoin="round"/>
<path d="M1782.5 579.5 Q1788 590 1792.5 597.7 Q1796 606 1799 612.6" fill="none" stroke="#f1b97c" stroke-width="3.6" stroke-linecap="round" stroke-linejoin="round"/>
<path d="M1867 511 Q1870 540 1872 571 Q1876 585 1880 597.7 Q1879 605 1877 612.6" fill="none" stroke="#f1b97c" stroke-width="3.6" stroke-linecap="round" stroke-linejoin="round"/>
<path d="M1805.7 621 Q1815 624 1825.6 627.5 Q1835 640 1842 647.4 Q1850 652 1858.7 654" fill="none" stroke="#f1b97c" stroke-width="3.6" stroke-linecap="round" stroke-linejoin="round"/>
<path d="M1664 703 Q1700 700 1726 698 Q1745 696 1759 695 Q1780 690 1800.7 688" fill="none" stroke="#f1b97c" stroke-width="3.6" stroke-linecap="round" stroke-linejoin="round"/>
<path d="M1759 698 Q1780 705 1800.7 708 Q1820 711 1842 711.4 Q1860 716 1872 723" fill="none" stroke="#f1b97c" stroke-width="3.6" stroke-linecap="round" stroke-linejoin="round"/>
<path d="M1797.4 670 Q1798 690 1797.4 708 Q1792 725 1785.8 736 Q1778 755 1776 769.4 Q1778 790 1782.5 810.8" fill="none" stroke="#f1b97c" stroke-width="3.6" stroke-linecap="round" stroke-linejoin="round"/>
<path d="M1872 723 Q1868 745 1867 762.7 Q1865 780 1862 794 Q1856 815 1850.4 840" fill="none" stroke="#f1b97c" stroke-width="3.6" stroke-linecap="round" stroke-linejoin="round"/>
<path d="M1862 794 Q1885 785 1908 776" fill="none" stroke="#f1b97c" stroke-width="3.6" stroke-linecap="round" stroke-linejoin="round"/>
<path d="M1696.4 769.4 Q1695 782 1693 794 Q1680 805 1668.3 814 Q1665 825 1664 840" fill="none" stroke="#f1b97c" stroke-width="3.6" stroke-linecap="round" stroke-linejoin="round"/>
<path d="M1741.4 849.8 Q1760 842 1780.3 838.7 Q1790 840 1800.6 842.4" fill="none" stroke="#f1b97c" stroke-width="3.6" stroke-linecap="round" stroke-linejoin="round"/>
<path d="M1741.4 849.8 Q1740 865 1737.7 877.6 Q1732 895 1724.8 912.7 Q1712 918 1706.3 922 Q1700 935 1698.9 946 Q1692 965 1684 983 Q1675 992 1667.4 1001.5" fill="none" stroke="#f1b97c" stroke-width="3.6" stroke-linecap="round" stroke-linejoin="round"/>
<path d="M1819.1 849.8 Q1828 860 1834 866.5 Q1845 872 1854.3 875.7 Q1860 890 1863.6 909 Q1868 922 1874.7 935 Q1890 928 1907.6 923.8" fill="none" stroke="#f1b97c" stroke-width="3.6" stroke-linecap="round" stroke-linejoin="round"/>
<path d="M1821 872 Q1810 890 1800.6 909 Q1792 928 1785.8 946 Q1775 955 1763.6 962.7" fill="none" stroke="#f1b97c" stroke-width="3.6" stroke-linecap="round" stroke-linejoin="round"/>
<path d="M1763.6 962.7 Q1780 958 1798.8 953.4 Q1812 950 1826.5 946 Q1850 940 1874.7 935" fill="none" stroke="#f1b97c" stroke-width="3.6" stroke-linecap="round" stroke-linejoin="round"/>
<path d="M1798.8 953.4 Q1802 978 1804.3 1001.5" fill="none" stroke="#f1b97c" stroke-width="3.6" stroke-linecap="round" stroke-linejoin="round"/>
<path d="M1889.5 923.8 Q1893 935 1896.9 946 Q1902 955 1907.6 964.5" fill="none" stroke="#f1b97c" stroke-width="3.6" stroke-linecap="round" stroke-linejoin="round"/>
<path d="M1667.4 835 Q1665 860 1664.6 890.5" fill="none" stroke="#f1b97c" stroke-width="3.6" stroke-linecap="round" stroke-linejoin="round"/>
<path d="M1676.6 670.6 Q1690 662 1706 660" fill="none" stroke="#f1b97c" stroke-width="3.6" stroke-linecap="round" stroke-linejoin="round"/>
<path d="M1664 655 Q1670 640 1668 620" fill="none" stroke="#f1b97c" stroke-width="3.6" stroke-linecap="round" stroke-linejoin="round"/>
<path d="M1700 540 Q1690 570 1700 600 Q1710 620 1720 640" fill="none" stroke="#f1b97c" stroke-width="3.6" stroke-linecap="round" stroke-linejoin="round"/>
<path d="M1830 540 Q1845 560 1850 590" fill="none" stroke="#f1b97c" stroke-width="3.6" stroke-linecap="round" stroke-linejoin="round"/>
<path d="M1908 620 Q1895 660 1890 700 Q1885 740 1875 760" fill="none" stroke="#f1b97c" stroke-width="3.6" stroke-linecap="round" stroke-linejoin="round"/>
<path d="M1674 511 C1671 540 1672 565 1680 590 S1692 640 1694 651 Q1700 662 1726 666 L1751 666 Q1766 670 1774 684 Q1790 686 1807 686" fill="none" stroke="#fbd63a" stroke-width="5" stroke-linecap="round" stroke-linejoin="round"/>
<path d="M1664 561 L1731 562" fill="none" stroke="#fbd63a" stroke-width="5" stroke-linecap="round" stroke-linejoin="round"/>
<path d="M1664 596 Q1676 590 1682 583" fill="none" stroke="#fbd63a" stroke-width="5" stroke-linecap="round" stroke-linejoin="round"/>
<path d="M1814 511 C1810 535 1803 560 1802 571 Q1820 585 1850 604" fill="none" stroke="#fbd63a" stroke-width="5" stroke-linecap="round" stroke-linejoin="round"/>
<path d="M1814 511 Q1826 515 1840 511" fill="none" stroke="#fbd63a" stroke-width="5" stroke-linecap="round" stroke-linejoin="round"/>
<path d="M1855 511 C1858 550 1862 590 1855 610 L1852 670 L1849 725 Q1858 736 1875 736 L1908 731" fill="none" stroke="#fbd63a" stroke-width="5" stroke-linecap="round" stroke-linejoin="round"/>
<path d="M1740 985 Q1742 1000 1760 1010 Q1775 1015 1785 1020" fill="none" stroke="#fbd63a" stroke-width="5" stroke-linecap="round" stroke-linejoin="round"/>
<path d="M1738 995 Q1720 1010 1700 1020" fill="none" stroke="#fbd63a" stroke-width="5" stroke-linecap="round" stroke-linejoin="round"/>
<rect x="1749.6" y="540" width="31.9" height="17.5" fill="url(#gtr)"/>
<path d="M1734 562 L1735 555 Q1738 551 1741 550 L1744 546 L1750 546 L1750 562 Z" fill="#5e8a5e" opacity="0.9"/>
<path d="M1740 551 L1743 547.5 L1748 547.5 L1748 551 Z" fill="#666"/>
<rect x="1734" y="557.5" width="47.5" height="3.5" fill="#222" opacity="0.85"/>
<path d="M1757.7 553 L1797.4 572.9 Q1800 585 1800.8 591 Q1804 606 1805.7 621 Q1808 650 1810.7 675 Q1812 690 1825.6 703 Q1835 715 1843 727 Q1838 740 1833.9 749.5 Q1834 765 1835.5 777.6 Q1832 790 1828.9 802.5 Q1822 820 1815.7 840 Q1810 850 1808 857.2 L1808 872 Q1798 884 1789.5 896 Q1783 905 1778.4 912.7 Q1770 928 1763.6 944.2 Q1755 960 1743.3 975.6" fill="none" stroke="#3a7a3a" stroke-width="7.2" stroke-linejoin="round"/>
<path d="M1757.7 553 L1797.4 572.9 Q1800 585 1800.8 591 Q1804 606 1805.7 621 Q1808 650 1810.7 675 Q1812 690 1825.6 703 Q1835 715 1843 727 Q1838 740 1833.9 749.5 Q1834 765 1835.5 777.6 Q1832 790 1828.9 802.5 Q1822 820 1815.7 840 Q1810 850 1808 857.2 L1808 872 Q1798 884 1789.5 896 Q1783 905 1778.4 912.7 Q1770 928 1763.6 944.2 Q1755 960 1743.3 975.6" fill="none" stroke="#ff8c00" stroke-width="6" stroke-linejoin="round"/>
<circle cx="1716.3" cy="563" r="38.5" fill="rgba(115,115,115,0.36)" stroke="rgba(240,240,240,0.9)" stroke-width="1.6"/>
<circle cx="1716.3" cy="563" r="30" fill="none" stroke="rgba(90,90,90,0.18)" stroke-width="10"/>
<circle cx="1716.3" cy="563" r="12" fill="rgba(90,90,90,0.3)"/>
<circle cx="1716.3" cy="563" r="2.5" fill="#eee"/>
<g fill="#e8e8e8"><path d="M1716.3 531 l-5 7 h10 z"/><path d="M1716.3 595 l-5 -7 h10 z"/><path d="M1684 563 l7 -5 v10 z"/><path d="M1748.6 563 l-7 -5 v10 z"/></g>
<text x="1721" y="561" font-family="Liberation Sans" font-size="14" fill="#444">M</text>
<text x="1781.5" y="561" font-family="Liberation Sans" font-size="14" fill="#333" stroke="#fff" stroke-width="1.5" paint-order="stroke">m</text>
<rect x="1719" y="948.5" width="32" height="19" fill="url(#rtr)"/>
<path d="M1703 968 L1705 958 Q1707 953 1712 953 L1720 953 L1720 968 Z" fill="#c01010"/>
<path d="M1707 959 L1709 955 L1715 955 L1715 960 Z" fill="#333"/>
<rect x="1703" y="966" width="48" height="3" fill="#333"/>
<circle cx="1709" cy="970" r="2.6" fill="#333"/><circle cx="1741" cy="970" r="2.6" fill="#333"/>
<text x="1694" y="968" font-family="Liberation Sans" font-size="13" fill="#333" stroke="#fff" stroke-width="0.4">K</text>
<circle cx="1757.7" cy="553" r="4.6" fill="url(#bd)" stroke="#000040" stroke-width="0.6"/>
<circle cx="1768.5" cy="562" r="4.6" fill="url(#bd)" stroke="#000040" stroke-width="0.6"/>
<circle cx="1772.6" cy="566" r="4.6" fill="url(#bd)" stroke="#000040" stroke-width="0.6"/>
<circle cx="1787.6" cy="569" r="4.6" fill="url(#bd)" stroke="#000040" stroke-width="0.6"/>
<circle cx="1786.8" cy="574" r="4.6" fill="url(#bd)" stroke="#000040" stroke-width="0.6"/>
<circle cx="1797.4" cy="572" r="4.6" fill="url(#bd)" stroke="#000040" stroke-width="0.6"/>
<circle cx="1810.7" cy="680" r="4.6" fill="url(#bd)" stroke="#000040" stroke-width="0.6"/>
<circle cx="1843" cy="727" r="4.6" fill="url(#bd)" stroke="#000040" stroke-width="0.6"/>
<circle cx="1726.6" cy="960.8" r="4.6" fill="url(#bd)" stroke="#000040" stroke-width="0.6"/>
<circle cx="1731" cy="965" r="4.6" fill="url(#bd)" stroke="#000040" stroke-width="0.6"/>
<circle cx="1734" cy="968.2" r="4.6" fill="url(#bd)" stroke="#000040" stroke-width="0.6"/>
<circle cx="1737.7" cy="975.6" r="4.6" fill="url(#bd)" stroke="#000040" stroke-width="0.6"/>
<circle cx="1743.3" cy="976.6" r="4.6" fill="url(#bd)" stroke="#000040" stroke-width="0.6"/>
<text x="1858" y="621" font-family="Liberation Sans" font-size="13" fill="#333" stroke="#fff" stroke-width="2.2" paint-order="stroke">Heidelb</text>
<rect x="1704.7" y="661.5" width="21.5" height="11.0" rx="2.5" fill="#1838d8" stroke="#fff" stroke-width="0.8"/>
<text x="1715.45" y="670.3" text-anchor="middle" font-family="Liberation Sans" font-size="9.5" font-weight="bold" fill="#fff">A61</text>
<rect x="1660" y="597.7" width="16.59999999999991" height="10.0" rx="2.5" fill="#1838d8" stroke="#fff" stroke-width="0.8"/>
<text x="1668.3" y="605.5" text-anchor="middle" font-family="Liberation Sans" font-size="9.5" font-weight="bold" fill="#fff">65</text>
<rect x="1658" y="698" width="25.200000000000045" height="11" rx="2.5" fill="#f8f000" stroke="#333" stroke-width="0.8"/>
<text x="1670.6" y="706.8" text-anchor="middle" font-family="Liberation Sans" font-size="9.5" font-weight="bold" fill="#000">339</text>
<rect x="1658" y="746" width="25.200000000000045" height="11.799999999999955" rx="2.5" fill="#f8f000" stroke="#333" stroke-width="0.8"/>
<text x="1670.6" y="755.5999999999999" text-anchor="middle" font-family="Liberation Sans" font-size="9.5" font-weight="bold" fill="#000">272</text>
<rect x="1660" y="821.5" width="15.700000000000045" height="10.799999999999955" rx="2.5" fill="#f8f000" stroke="#333" stroke-width="0.8"/>
<text x="1667.85" y="830.0999999999999" text-anchor="middle" font-family="Liberation Sans" font-size="9.5" font-weight="bold" fill="#000">39</text>
<rect x="1660" y="935" width="15.700000000000045" height="11" rx="2.5" fill="#f8f000" stroke="#333" stroke-width="0.8"/>
<text x="1667.85" y="943.8" text-anchor="middle" font-family="Liberation Sans" font-size="9.5" font-weight="bold" fill="#000">10</text>
<rect x="1728.5" y="993.5" width="15.700000000000045" height="7.5" rx="2.5" fill="#1838d8" stroke="#fff" stroke-width="0.8"/>
<text x="1736.35" y="998.8" text-anchor="middle" font-family="Liberation Sans" font-size="9.5" font-weight="bold" fill="#fff">A8</text>
<rect x="1888" y="515" width="16.5" height="16" rx="2" fill="#e0e8a0" stroke="#2a3a50" stroke-width="1.4"/>
<path d="M1889 516 h6 v7 h-6 z" fill="#7ab8e8"/><path d="M1896 523.5 h8 M1896 516 v15" stroke="#2a3a50" stroke-width="1.2"/><path d="M1897 524.5 h7 v6 h-7 z" fill="#b8d870"/>
<rect x="1877" y="620" width="25.6" height="292.7" rx="4" fill="rgba(95,95,95,0.55)"/>
<path d="M1885 631 h9 M1889.5 626.5 v9" stroke="rgba(240,240,240,0.8)" stroke-width="1.2"/>
<line x1="1890" y1="645" x2="1890" y2="895" stroke="rgba(70,70,70,0.6)" stroke-width="2.5"/>
<line x1="1886" y1="650" x2="1888" y2="650" stroke="rgba(240,240,240,0.7)" stroke-width="1"/>
<line x1="1886" y1="672" x2="1888" y2="672" stroke="rgba(240,240,240,0.7)" stroke-width="1"/>
<line x1="1886" y1="694" x2="1888" y2="694" stroke="rgba(240,240,240,0.7)" stroke-width="1"/>
<line x1="1886" y1="716" x2="1888" y2="716" stroke="rgba(240,240,240,0.7)" stroke-width="1"/>
<line x1="1886" y1="738" x2="1888" y2="738" stroke="rgba(240,240,240,0.7)" stroke-width="1"/>
<line x1="1886" y1="760" x2="1888" y2="760" stroke="rgba(240,240,240,0.7)" stroke-width="1"/>
<line x1="1886" y1="782" x2="1888" y2="782" stroke="rgba(240,240,240,0.7)" stroke-width="1"/>
<line x1="1886" y1="804" x2="1888" y2="804" stroke="rgba(240,240,240,0.7)" stroke-width="1"/>
<line x1="1886" y1="826" x2="1888" y2="826" stroke="rgba(240,240,240,0.7)" stroke-width="1"/>
<line x1="1886" y1="848" x2="1888" y2="848" stroke="rgba(240,240,240,0.7)" stroke-width="1"/>
<line x1="1886" y1="870" x2="1888" y2="870" stroke="rgba(240,240,240,0.7)" stroke-width="1"/>
<line x1="1886" y1="892" x2="1888" y2="892" stroke="rgba(240,240,240,0.7)" stroke-width="1"/>
<ellipse cx="1892.6" cy="764" rx="4" ry="8" fill="rgba(200,200,200,0.5)" stroke="rgba(230,230,230,0.7)"/>
<path d="M1881 902 a9 7 0 0 1 18 0 z" fill="rgba(210,210,210,0.45)"/><line x1="1885" y1="901" x2="1895" y2="901" stroke="#eee"/>
<rect x="1839.5" y="967.3" width="63" height="23" rx="4" fill="rgba(95,100,90,0.6)" stroke="rgba(170,170,170,0.6)"/>
<circle cx="1852" cy="978.5" r="6" fill="none" stroke="rgba(220,220,220,0.8)"/><path d="M1849.5 976.5 h5 l-2.5 4 z" fill="#ddd"/>
<text x="1865" y="982.5" font-family="Liberation Sans" font-size="10" font-weight="bold" fill="#e6e6e6">Layers</text>
<rect x="1669.3" y="1001.5" width="234" height="13" rx="5" fill="#5c5c5c" stroke="#9a9a9a" stroke-width="0.8"/>
<rect x="1672" y="1005" width="37" height="6.5" fill="#000"/><rect x="1680" y="1006.5" width="10" height="3.5" fill="#555"/><rect x="1697" y="1006.5" width="9" height="3.5" fill="#555"/>
<rect x="1710.9" y="1001.8" width="150.8" height="12.4" rx="5" fill="#6a6a6a" stroke="#c8c8c8" stroke-width="0.9"/>
<text x="1786" y="1011.6" text-anchor="middle" font-family="Liberation Sans" font-size="10" fill="#e8e8e8">48,985293°, 8,376808°</text>
<text x="1864" y="1011.6" font-family="Liberation Sans" font-size="10" fill="#e8e8e8">), HERE</text>
</g></svg>
<svg style="position:absolute;left:0;top:0" width="1920" height="1027" viewBox="0 0 1920 1027"><g fill="none" stroke="#e31b1b" stroke-width="4.2" stroke-linecap="round" stroke-linejoin="round"><path d="M1228.3 201.2 C1233.1 199.9 1246.6 195.1 1256.8 193.5 C1267.0 192.0 1281.7 191.9 1289.6 192.1 C1297.5 192.3 1296.9 192.8 1304.2 194.6 C1311.4 196.5 1322.4 200.4 1333.3 203.0 C1344.3 205.6 1362.2 207.8 1369.8 210.3 C1377.4 212.9 1378.9 215.5 1378.9 218.3 C1378.9 221.2 1374.9 224.7 1369.8 227.4 C1364.6 230.2 1356.4 231.4 1347.9 234.7 C1339.4 238.1 1325.5 244.8 1318.7 247.5 C1311.9 250.2 1308.3 249.8 1307.1 251.1 C1305.9 252.5 1305.9 253.4 1311.4 255.5 C1317.0 257.6 1332.1 260.7 1340.6 263.9 C1349.1 267.1 1357.6 271.2 1362.5 274.8 C1367.3 278.5 1369.2 280.9 1369.8 285.8 C1370.4 290.6 1369.2 297.9 1366.1 304.0 C1363.1 310.1 1357.0 316.8 1351.5 322.2 C1346.1 327.7 1341.2 332.9 1333.3 336.8 C1325.4 340.8 1314.2 344.4 1304.2 345.9 C1294.1 347.4 1278.3 345.9 1273.2 345.9"/><path d="M1272.4 227.4 C1272.9 234.4 1273.8 251.7 1275.0 269.4 C1276.2 287.0 1278.9 322.5 1279.7 333.2"/><path d="M1425.6 173.9 C1423.6 175.2 1416.7 175.1 1413.5 181.9 C1410.3 188.7 1407.9 201.3 1406.2 214.7 C1404.5 228.1 1403.3 248.1 1403.3 262.1 C1403.3 276.1 1404.5 290.3 1406.2 298.5 C1407.9 306.7 1409.9 311.0 1413.5 311.3 C1417.2 311.6 1423.2 306.7 1428.1 300.4 C1433.0 294.0 1439.3 283.6 1442.7 273.0 C1446.0 262.4 1445.4 237.2 1448.2 236.6 C1450.9 236.0 1455.1 257.8 1459.1 269.4 C1463.0 280.9 1467.9 295.2 1471.9 305.8 C1475.8 316.5 1478.5 332.6 1482.8 333.2 C1487.0 333.8 1492.5 318.9 1497.4 309.5 C1502.2 300.1 1508.9 288.2 1512.0 276.7 C1515.0 265.1 1515.3 251.1 1515.6 240.2 C1515.9 229.3 1514.9 218.8 1513.8 211.0 C1512.7 203.3 1509.8 196.5 1509.0 193.5"/><path d="M1541.1 277.4 C1549.9 277.3 1584.3 278.0 1594.0 276.7 C1603.7 275.3 1597.0 276.4 1599.5 269.4 C1601.9 262.4 1607.4 242.0 1608.6 234.7 C1609.8 227.4 1608.9 227.4 1606.7 225.6 C1604.6 223.8 1600.1 223.8 1595.8 223.8 C1591.6 223.8 1586.7 222.3 1581.2 225.6 C1575.8 229.0 1568.5 236.0 1563.0 243.8 C1557.5 251.7 1551.8 263.3 1548.4 273.0 C1545.1 282.7 1542.9 294.6 1542.9 302.2 C1542.9 309.8 1544.5 314.3 1548.4 318.6 C1552.4 322.8 1559.7 325.6 1566.6 327.7 C1573.6 329.8 1586.4 330.7 1590.3 331.3"/><path d="M1113.5 431.6 C1118.5 429.8 1133.8 423.2 1143.7 420.7 C1153.7 418.1 1159.8 417.6 1172.9 416.3 C1186.0 415.0 1212.9 412.9 1222.1 413.0 C1231.4 413.1 1227.4 413.6 1228.3 416.7 C1229.2 419.8 1228.3 425.8 1227.6 431.6 C1226.9 437.4 1227.0 445.9 1224.0 451.7 C1220.9 457.4 1217.9 460.5 1209.4 466.2 C1200.9 472.0 1180.2 481.7 1172.9 486.3 C1165.6 490.8 1163.8 491.1 1165.6 493.6 C1167.4 496.0 1171.1 499.5 1183.8 500.9 C1196.6 502.3 1232.5 501.8 1242.2 502.0"/><path d="M1304.2 436.3 C1298.7 435.9 1279.9 432.7 1271.3 433.4 C1262.8 434.2 1257.1 436.5 1253.1 440.7 C1249.2 445.0 1246.4 451.7 1247.6 458.9 C1248.9 466.2 1253.4 478.4 1260.4 484.5 C1267.4 490.5 1278.6 494.5 1289.6 495.4 C1300.5 496.3 1314.5 492.4 1326.0 489.9 C1337.6 487.5 1352.3 486.0 1358.8 480.8 C1365.4 475.7 1365.4 465.6 1365.4 458.9 C1365.4 452.3 1363.0 444.1 1358.8 440.7 C1354.7 437.4 1349.7 437.7 1340.6 438.9 C1331.5 440.1 1312.1 445.9 1304.2 448.0 C1296.3 450.1 1295.0 451.0 1293.2 451.7"/><path d="M1397.1 423.2 C1403.8 423.4 1430.8 420.8 1437.2 424.3 C1443.6 427.8 1439.3 435.5 1435.4 444.4 C1431.4 453.2 1420.8 469.0 1413.5 477.2 C1406.2 485.4 1395.9 489.0 1391.7 493.6 C1387.4 498.1 1386.2 502.2 1388.0 504.5 C1389.8 506.8 1397.2 506.9 1402.6 507.4 C1407.9 507.9 1417.2 507.4 1420.1 507.4"/><path d="M1477.3 417.0 C1481.3 417.4 1494.6 417.0 1501.0 419.6 C1507.4 422.2 1514.4 429.2 1515.6 432.7 C1516.8 436.2 1512.6 437.9 1508.3 440.7 C1504.1 443.6 1490.7 446.2 1490.1 449.8 C1489.5 453.5 1502.5 457.4 1504.7 462.6 C1506.8 467.8 1505.9 476.3 1502.8 480.8 C1499.8 485.4 1493.4 487.8 1486.4 489.9 C1479.5 492.1 1465.2 493.0 1460.9 493.6"/><path d="M1513.8 488.1 C1514.8 490.1 1518.9 497.8 1520.0 499.8"/><path d="M1542.9 431.6 C1545.1 430.0 1550.5 423.2 1555.7 421.8 C1560.9 420.4 1569.8 420.1 1573.9 423.2 C1578.1 426.4 1580.5 434.8 1580.5 440.7 C1580.5 446.7 1577.2 451.7 1573.9 458.9 C1570.7 466.2 1562.4 479.3 1561.2 484.5 C1560.0 489.6 1562.1 488.8 1566.6 489.9 C1571.2 491.0 1584.9 490.8 1588.5 491.0"/><path d="M1697.2 371.4 C1696.4 378.7 1694.0 400.9 1692.4 415.2 C1690.8 429.5 1688.5 450.1 1687.7 457.1"/><path d="M1739.8 347.8 C1739.0 356.0 1736.7 380.0 1735.1 397.0 C1733.4 414.0 1730.8 441.0 1730.0 449.8"/><path d="M1689.9 417.0 C1696.7 415.5 1723.9 409.4 1730.7 407.9"/><path d="M535.8 457.7 C535.7 461.0 535.1 471.0 534.8 477.5 C534.4 484.0 533.9 493.5 533.8 496.7"/><path d="M557.3 421.2 C558.9 420.7 563.4 417.8 566.7 418.1 C570.0 418.5 574.8 419.7 577.1 423.3 C579.3 427.0 580.6 434.4 580.2 440.0 C579.9 445.6 577.6 452.8 575.0 456.7 C572.4 460.5 568.0 461.6 564.6 462.9 C561.2 464.2 554.9 462.5 554.6 464.6 C554.2 466.7 557.7 471.5 562.5 475.4 C567.3 479.3 577.1 484.3 583.3 487.9 C589.6 491.6 597.2 495.7 600.0 497.3"/><path d="M615.6 441.0 C616.9 439.9 622.0 435.3 623.3 434.2"/><path d="M614.2 471.7 C614.1 474.0 614.0 481.2 614.0 485.8 C613.9 490.5 614.0 497.1 614.0 499.4"/><path d="M651.0 456.7 C649.5 458.1 644.1 461.9 641.7 465.0 C639.2 468.1 637.0 471.9 636.5 475.4 C635.9 478.9 636.3 483.4 638.5 485.8 C640.8 488.3 643.6 489.1 650.0 490.0 C656.4 490.9 669.6 491.0 677.1 491.0 C684.5 491.1 691.8 490.5 694.8 490.4"/><path d="M696.5 415.4 C696.4 419.9 696.4 433.8 696.2 442.1 C696.1 450.3 694.5 460.3 695.8 465.0 C697.2 469.7 702.1 468.1 704.2 470.2 C706.3 472.3 706.9 473.9 708.3 477.5 C709.7 481.1 711.1 487.0 712.5 492.1 C713.9 497.1 716.0 505.1 716.7 507.7"/><path d="M757.9 405.6 C757.1 410.0 754.4 422.1 753.1 431.7 C751.8 441.2 750.7 454.2 750.0 462.9 C749.3 471.6 749.2 476.8 749.0 483.8 C748.7 490.7 748.6 501.1 748.5 504.6"/><path d="M729.6 467.1 C734.5 466.7 754.4 465.3 759.4 465.0"/><path d="M770.8 458.8 C771.5 462.9 773.5 475.6 775.0 483.8 C776.5 491.9 778.8 503.7 779.6 507.7"/><path d="M820.8 463.3 C819.6 464.0 814.9 464.7 813.5 467.1 C812.2 469.4 812.2 474.4 812.5 477.5 C812.8 480.6 813.5 485.8 815.6 485.8 C817.7 485.8 821.4 482.4 825.0 477.5 C828.6 472.6 834.7 459.1 837.5 456.7 C840.3 454.2 840.6 456.7 841.7 462.9 C842.7 469.2 843.4 484.1 843.8 494.2 C844.1 504.2 844.3 516.7 843.8 523.3 C843.2 529.9 843.4 532.0 840.6 533.8 C837.8 535.5 832.1 534.4 827.1 533.8 C822.0 533.1 813.7 532.7 810.4 529.6 C807.1 526.5 806.9 519.5 807.3 515.0 C807.6 510.5 809.5 506.0 812.5 502.5 C815.5 499.0 819.8 496.3 825.0 494.2 C830.2 492.0 836.5 490.8 843.8 489.6 C851.0 488.4 864.6 487.3 868.8 486.9"/></g></svg>
</body></html>
